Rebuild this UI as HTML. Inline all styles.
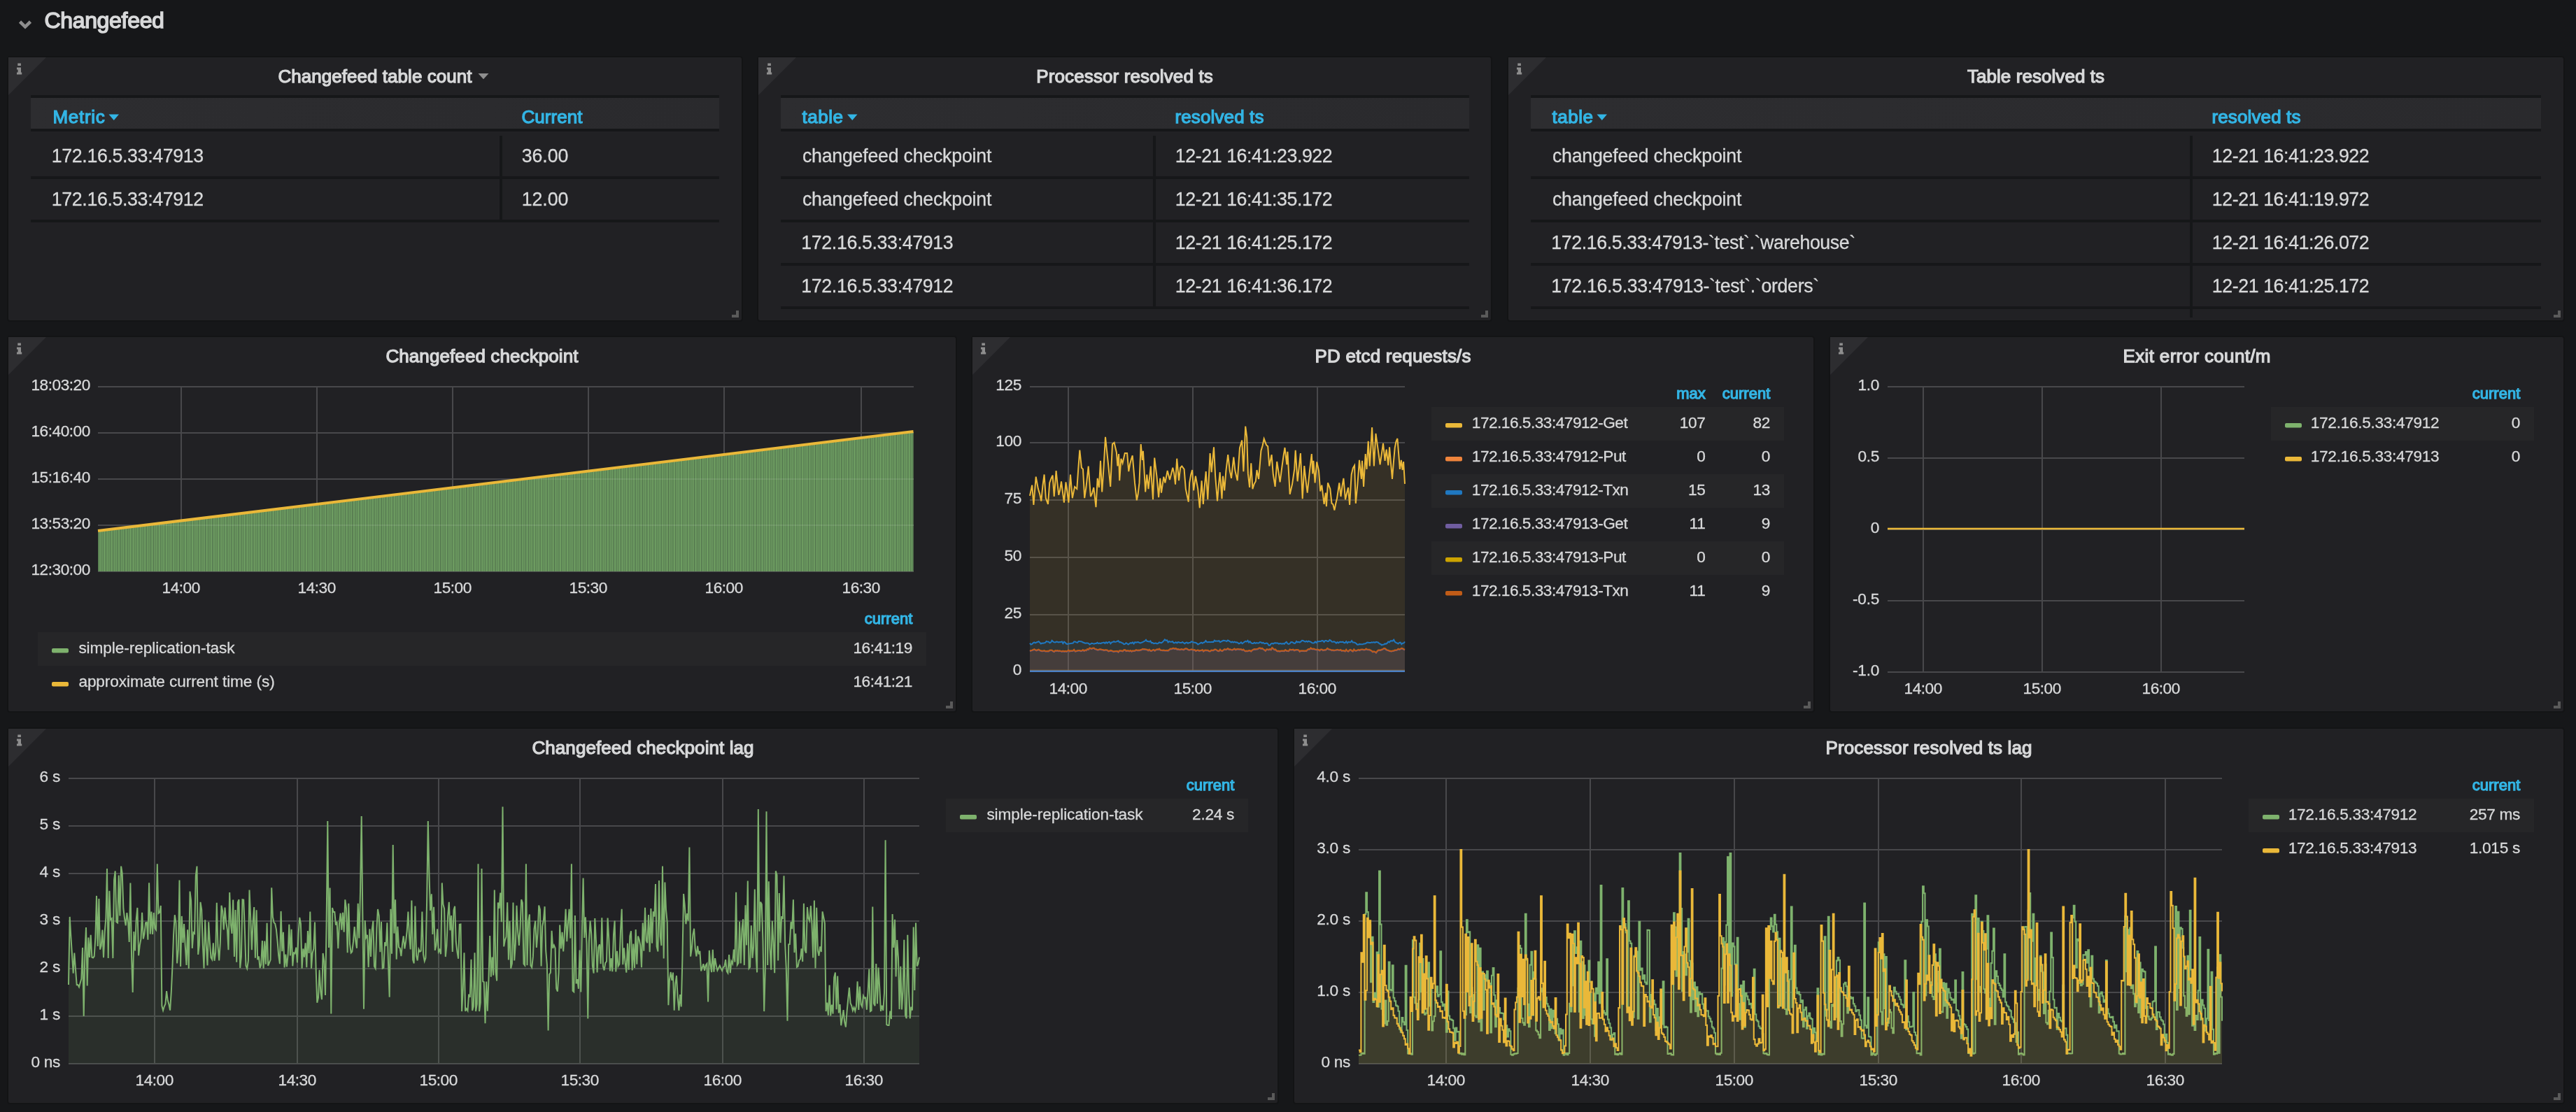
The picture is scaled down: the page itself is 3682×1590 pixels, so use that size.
<!DOCTYPE html>
<html><head><meta charset="utf-8"><title>Changefeed</title>
<style>
html,body{margin:0;padding:0;background:#161719;}
body{width:3682px;height:1590px;overflow:hidden;position:relative;font-family:"Liberation Sans",sans-serif;}
svg{position:absolute;left:0;top:0;}
#tx{position:absolute;left:0;top:0;width:3682px;height:1590px;will-change:transform;}
.t{position:absolute;white-space:pre;line-height:1;-webkit-text-stroke:0.3px currentColor;}
.m{-webkit-text-stroke:1.25px currentColor;}
.m2{-webkit-text-stroke:1.5px currentColor;}
</style></head><body>
<svg width="3682" height="1590" viewBox="0 0 3682 1590">
<defs>
<pattern id="bars" x="140" y="0" width="2.47" height="10" patternUnits="userSpaceOnUse"><rect width="2.47" height="10" fill="#4b6948"/><rect x="0.85" width="0.9" height="10" fill="#6a9860"/><rect x="1.75" width="0.72" height="10" fill="#7eb56c"/></pattern>
<linearGradient id="hg" x1="0" x2="1" y1="0" y2="0"><stop offset="0" stop-color="#2d2d30"/><stop offset="1" stop-color="#2a2a2d"/></linearGradient>
</defs>
<polyline points="28.5,31 36,38.3 43.5,31" fill="none" stroke="#8e8e8e" stroke-width="4.6"/>
<rect x="11" y="81" width="1050" height="378" rx="3.5" fill="#212124" stroke="#131415" stroke-width="2"/>
<path d="M12,82 L66,82 L12,136 Z" fill="#2d2d30"/>
<path d="M25.3,90.5 h4.6 v3.6 h-4.6z M24,96.5 h6 v7 h1.2 v3 h-7.2 v-3 h1.6 v-4 h-1.6z" fill="#8e8e8e"/>
<path d="M1052,444 h4 v10 h-10 v-4 h6z" fill="#5a5a5a"/>
<path d="M683.5,105 h15 l-7.5,8.3z" fill="#8e8e8e"/>
<rect x="1083" y="81" width="1049" height="378" rx="3.5" fill="#212124" stroke="#131415" stroke-width="2"/>
<path d="M1084,82 L1138,82 L1084,136 Z" fill="#2d2d30"/>
<path d="M1097.3,90.5 h4.6 v3.6 h-4.6z M1096,96.5 h6 v7 h1.2 v3 h-7.2 v-3 h1.6 v-4 h-1.6z" fill="#8e8e8e"/>
<path d="M2123,444 h4 v10 h-10 v-4 h6z" fill="#5a5a5a"/>
<rect x="2155" y="81" width="1510" height="378" rx="3.5" fill="#212124" stroke="#131415" stroke-width="2"/>
<path d="M2156,82 L2210,82 L2156,136 Z" fill="#2d2d30"/>
<path d="M2169.3,90.5 h4.6 v3.6 h-4.6z M2168,96.5 h6 v7 h1.2 v3 h-7.2 v-3 h1.6 v-4 h-1.6z" fill="#8e8e8e"/>
<path d="M3656,444 h4 v10 h-10 v-4 h6z" fill="#5a5a5a"/>
<rect x="11" y="481" width="1356" height="537" rx="3.5" fill="#212124" stroke="#131415" stroke-width="2"/>
<path d="M12,482 L66,482 L12,536 Z" fill="#2d2d30"/>
<path d="M25.3,490.5 h4.6 v3.6 h-4.6z M24,496.5 h6 v7 h1.2 v3 h-7.2 v-3 h1.6 v-4 h-1.6z" fill="#8e8e8e"/>
<path d="M1358,1003 h4 v10 h-10 v-4 h6z" fill="#5a5a5a"/>
<rect x="1389" y="481" width="1204" height="537" rx="3.5" fill="#212124" stroke="#131415" stroke-width="2"/>
<path d="M1390,482 L1444,482 L1390,536 Z" fill="#2d2d30"/>
<path d="M1403.3,490.5 h4.6 v3.6 h-4.6z M1402,496.5 h6 v7 h1.2 v3 h-7.2 v-3 h1.6 v-4 h-1.6z" fill="#8e8e8e"/>
<path d="M2584,1003 h4 v10 h-10 v-4 h6z" fill="#5a5a5a"/>
<rect x="2615" y="481" width="1050" height="537" rx="3.5" fill="#212124" stroke="#131415" stroke-width="2"/>
<path d="M2616,482 L2670,482 L2616,536 Z" fill="#2d2d30"/>
<path d="M2629.3,490.5 h4.6 v3.6 h-4.6z M2628,496.5 h6 v7 h1.2 v3 h-7.2 v-3 h1.6 v-4 h-1.6z" fill="#8e8e8e"/>
<path d="M3656,1003 h4 v10 h-10 v-4 h6z" fill="#5a5a5a"/>
<rect x="11" y="1041" width="1816" height="537" rx="3.5" fill="#212124" stroke="#131415" stroke-width="2"/>
<path d="M12,1042 L66,1042 L12,1096 Z" fill="#2d2d30"/>
<path d="M25.3,1050.5 h4.6 v3.6 h-4.6z M24,1056.5 h6 v7 h1.2 v3 h-7.2 v-3 h1.6 v-4 h-1.6z" fill="#8e8e8e"/>
<path d="M1818,1563 h4 v10 h-10 v-4 h6z" fill="#5a5a5a"/>
<rect x="1849" y="1041" width="1816" height="537" rx="3.5" fill="#212124" stroke="#131415" stroke-width="2"/>
<path d="M1850,1042 L1904,1042 L1850,1096 Z" fill="#2d2d30"/>
<path d="M1863.3,1050.5 h4.6 v3.6 h-4.6z M1862,1056.5 h6 v7 h1.2 v3 h-7.2 v-3 h1.6 v-4 h-1.6z" fill="#8e8e8e"/>
<path d="M3656,1563 h4 v10 h-10 v-4 h6z" fill="#5a5a5a"/>
<rect x="44" y="136" width="984" height="4" fill="#161719" />
<rect x="44" y="140" width="984" height="44" fill="url(#hg)"/>
<rect x="44" y="184" width="984" height="4" fill="#161719" />
<rect x="44" y="252" width="984" height="4" fill="#161719" />
<rect x="44" y="314" width="984" height="4" fill="#161719" />
<rect x="714" y="194" width="4" height="120" fill="#161719" />
<path d="M155.5,163.5 h14.5 l-7.25,8.5z" fill="#33b5e5"/>
<rect x="1116" y="136" width="984" height="4" fill="#161719" />
<rect x="1116" y="140" width="984" height="44" fill="url(#hg)"/>
<rect x="1116" y="184" width="984" height="4" fill="#161719" />
<rect x="1116" y="252" width="984" height="4" fill="#161719" />
<rect x="1116" y="314" width="984" height="4" fill="#161719" />
<rect x="1116" y="376" width="984" height="4" fill="#161719" />
<rect x="1116" y="438" width="984" height="4" fill="#161719" />
<rect x="1648" y="194" width="4" height="244" fill="#161719" />
<path d="M1211,163.5 h14.5 l-7.25,8.5z" fill="#33b5e5"/>
<rect x="2188" y="136" width="1444" height="4" fill="#161719" />
<rect x="2188" y="140" width="1444" height="44" fill="url(#hg)"/>
<rect x="2188" y="184" width="1444" height="4" fill="#161719" />
<rect x="2188" y="252" width="1444" height="4" fill="#161719" />
<rect x="2188" y="314" width="1444" height="4" fill="#161719" />
<rect x="2188" y="376" width="1444" height="4" fill="#161719" />
<rect x="2188" y="438" width="1444" height="4" fill="#161719" />
<rect x="3130" y="194" width="4" height="260" fill="#161719" />
<path d="M2282.5,163.5 h14.5 l-7.25,8.5z" fill="#33b5e5"/>
<rect x="140" y="552" width="1166" height="2" fill="#48484b" />
<rect x="140" y="618" width="1166" height="2" fill="#48484b" />
<rect x="140" y="684" width="1166" height="2" fill="#48484b" />
<rect x="140" y="750" width="1166" height="2" fill="#48484b" />
<rect x="140" y="816" width="1166" height="2" fill="#48484b" />
<rect x="258" y="552" width="2" height="266" fill="#48484b" />
<rect x="452" y="552" width="2" height="266" fill="#48484b" />
<rect x="646" y="552" width="2" height="266" fill="#48484b" />
<rect x="840" y="552" width="2" height="266" fill="#48484b" />
<rect x="1034" y="552" width="2" height="266" fill="#48484b" />
<rect x="1230" y="552" width="2" height="266" fill="#48484b" />
<polygon points="140,817 140,760.5 1305.5,618.5 1305.5,817" fill="url(#bars)"/>
<clipPath id="c4"><polygon points="140,817 140,760.5 1305.5,618.5 1305.5,817"/></clipPath>
<rect x="140" y="618" width="1166" height="2" fill="#fff" fill-opacity="0.09" clip-path="url(#c4)"/>
<rect x="140" y="684" width="1166" height="2" fill="#fff" fill-opacity="0.09" clip-path="url(#c4)"/>
<rect x="140" y="750" width="1166" height="2" fill="#fff" fill-opacity="0.09" clip-path="url(#c4)"/>
<polyline points="140,759 1305.5,617" fill="none" stroke="#eab839" stroke-width="4"/>
<rect x="54" y="904" width="1270" height="48" fill="#262628" />
<rect x="74" y="927" width="24" height="6.6" rx="2" fill="#7eb26d"/>
<rect x="74" y="975" width="24" height="6.6" rx="2" fill="#eab839"/>
<rect x="1472" y="552" width="536" height="2" fill="#48484b" />
<rect x="1472" y="632" width="536" height="2" fill="#48484b" />
<rect x="1472" y="714" width="536" height="2" fill="#48484b" />
<rect x="1472" y="796" width="536" height="2" fill="#48484b" />
<rect x="1472" y="878" width="536" height="2" fill="#48484b" />
<rect x="1472" y="959" width="536" height="2" fill="#48484b" />
<rect x="1526" y="552" width="2" height="409" fill="#48484b" />
<rect x="1704" y="552" width="2" height="409" fill="#48484b" />
<rect x="1882" y="552" width="2" height="409" fill="#48484b" />
<polygon points="1472.0,960.0 1472.0,708.9 1475.2,693.7 1477.4,722.0 1480.7,681.7 1483.9,699.1 1486.1,706.1 1488.3,716.5 1490.4,694.6 1492.6,678.5 1494.8,712.2 1498.0,720.9 1500.2,690.4 1502.4,684.5 1504.6,679.6 1506.7,710.0 1509.6,673.0 1511.4,691.4 1513.3,707.8 1515.1,700.5 1517.0,688.3 1518.9,703.7 1520.9,718.7 1523.5,689.3 1525.4,702.8 1527.4,718.7 1530.0,678.5 1532.8,712.2 1536.1,695.9 1539.3,699.1 1541.3,669.7 1543.3,643.7 1545.9,668.7 1548.0,670.9 1550.2,712.2 1552.4,697.0 1555.7,666.5 1558.9,710.0 1561.1,705.1 1563.3,697.0 1566.5,725.2 1568.7,683.9 1570.9,697.0 1573.0,658.9 1575.2,703.5 1577.6,667.7 1580.0,624.8 1582.0,644.1 1583.9,662.2 1587.2,695.9 1590.0,635.0 1592.6,632.8 1595.9,647.0 1597.4,666.5 1599.1,649.1 1600.2,687.2 1602.4,655.7 1604.6,662.2 1607.8,648.0 1611.1,648.0 1613.3,674.1 1615.1,663.8 1616.9,656.8 1618.7,651.3 1622.0,690.4 1624.8,715.4 1626.6,706.5 1628.5,690.4 1630.7,635.0 1632.8,657.8 1633.9,644.8 1637.2,703.5 1639.3,678.5 1641.5,699.1 1644.8,666.5 1648.0,714.3 1650.2,654.6 1653.5,681.7 1656.1,711.1 1658.3,683.9 1660.0,704.6 1663.3,681.7 1665.4,690.4 1668.7,673.0 1672.0,686.1 1674.1,677.8 1676.3,668.7 1678.2,676.8 1680.0,692.6 1682.2,655.7 1685.0,687.2 1687.2,668.7 1689.3,666.5 1692.6,670.9 1694.8,699.1 1696.7,708.2 1698.7,717.6 1700.2,690.4 1702.2,678.6 1704.1,672.0 1706.1,701.3 1708.9,680.7 1712.2,699.1 1714.8,726.3 1717.6,687.2 1719.8,720.9 1721.7,696.1 1723.7,674.1 1726.3,714.3 1729.6,648.0 1731.7,675.2 1735.0,639.3 1737.2,681.7 1740.0,716.5 1741.8,694.8 1743.7,675.2 1746.5,713.3 1748.0,680.7 1750.2,701.3 1752.4,673.0 1755.2,650.2 1757.8,673.0 1760.0,683.9 1763.3,653.5 1765.4,673.0 1768.7,687.2 1772.0,640.4 1775.2,629.6 1777.4,674.1 1780.2,609.6 1782.2,625.2 1783.9,677.4 1786.1,697.0 1788.3,662.2 1790.4,699.1 1792.6,692.1 1794.8,688.3 1796.5,672.0 1799.1,685.0 1802.4,644.8 1804.6,637.3 1806.7,627.4 1810.0,636.1 1812.2,638.3 1814.3,666.5 1817.6,650.2 1819.8,678.5 1822.6,695.9 1825.2,660.0 1827.4,674.5 1829.6,689.3 1832.8,664.3 1834.7,650.9 1836.5,640.0 1839.3,664.3 1840.4,645.9 1843.7,706.7 1847.0,692.6 1850.2,670.9 1851.7,643.7 1854.6,688.3 1856.7,669.1 1858.9,648.0 1861.7,713.3 1864.3,666.1 1866.5,687.2 1868.7,704.6 1872.0,673.0 1874.8,649.1 1876.3,677.4 1877.4,658.9 1879.6,690.4 1882.2,660.4 1885.0,673.0 1887.2,702.4 1889.3,693.7 1892.6,720.9 1894.8,704.6 1895.9,724.1 1898.0,690.4 1901.3,699.1 1903.5,719.8 1905.4,721.1 1907.4,729.6 1909.2,720.3 1911.1,712.2 1914.3,690.4 1916.5,710.0 1918.5,694.8 1920.4,683.9 1923.0,714.3 1925.0,705.3 1927.0,697.0 1929.1,722.0 1931.7,678.5 1933.9,669.1 1936.1,665.4 1937.8,719.8 1940.4,692.6 1943.0,657.8 1945.9,685.0 1947.0,658.9 1949.1,695.9 1951.7,649.1 1953.5,670.9 1955.7,630.7 1957.8,666.5 1961.1,611.1 1963.9,666.5 1966.5,619.8 1969.8,643.7 1972.6,664.3 1974.8,649.2 1977.0,633.9 1979.6,658.9 1981.7,642.6 1984.3,665.4 1986.1,639.3 1988.0,662.1 1990.0,685.0 1991.8,662.0 1993.7,640.4 1995.5,631.4 1997.4,627.0 1999.1,648.0 2000.9,670.9 2002.8,657.8 2004.6,672.0 2006.1,660.0 2008.0,691.9 2008.0,960.0" fill="#eab839" fill-opacity="0.1"/>
<polyline points="1472.0,708.9 1475.2,693.7 1477.4,722.0 1480.7,681.7 1483.9,699.1 1486.1,706.1 1488.3,716.5 1490.4,694.6 1492.6,678.5 1494.8,712.2 1498.0,720.9 1500.2,690.4 1502.4,684.5 1504.6,679.6 1506.7,710.0 1509.6,673.0 1511.4,691.4 1513.3,707.8 1515.1,700.5 1517.0,688.3 1518.9,703.7 1520.9,718.7 1523.5,689.3 1525.4,702.8 1527.4,718.7 1530.0,678.5 1532.8,712.2 1536.1,695.9 1539.3,699.1 1541.3,669.7 1543.3,643.7 1545.9,668.7 1548.0,670.9 1550.2,712.2 1552.4,697.0 1555.7,666.5 1558.9,710.0 1561.1,705.1 1563.3,697.0 1566.5,725.2 1568.7,683.9 1570.9,697.0 1573.0,658.9 1575.2,703.5 1577.6,667.7 1580.0,624.8 1582.0,644.1 1583.9,662.2 1587.2,695.9 1590.0,635.0 1592.6,632.8 1595.9,647.0 1597.4,666.5 1599.1,649.1 1600.2,687.2 1602.4,655.7 1604.6,662.2 1607.8,648.0 1611.1,648.0 1613.3,674.1 1615.1,663.8 1616.9,656.8 1618.7,651.3 1622.0,690.4 1624.8,715.4 1626.6,706.5 1628.5,690.4 1630.7,635.0 1632.8,657.8 1633.9,644.8 1637.2,703.5 1639.3,678.5 1641.5,699.1 1644.8,666.5 1648.0,714.3 1650.2,654.6 1653.5,681.7 1656.1,711.1 1658.3,683.9 1660.0,704.6 1663.3,681.7 1665.4,690.4 1668.7,673.0 1672.0,686.1 1674.1,677.8 1676.3,668.7 1678.2,676.8 1680.0,692.6 1682.2,655.7 1685.0,687.2 1687.2,668.7 1689.3,666.5 1692.6,670.9 1694.8,699.1 1696.7,708.2 1698.7,717.6 1700.2,690.4 1702.2,678.6 1704.1,672.0 1706.1,701.3 1708.9,680.7 1712.2,699.1 1714.8,726.3 1717.6,687.2 1719.8,720.9 1721.7,696.1 1723.7,674.1 1726.3,714.3 1729.6,648.0 1731.7,675.2 1735.0,639.3 1737.2,681.7 1740.0,716.5 1741.8,694.8 1743.7,675.2 1746.5,713.3 1748.0,680.7 1750.2,701.3 1752.4,673.0 1755.2,650.2 1757.8,673.0 1760.0,683.9 1763.3,653.5 1765.4,673.0 1768.7,687.2 1772.0,640.4 1775.2,629.6 1777.4,674.1 1780.2,609.6 1782.2,625.2 1783.9,677.4 1786.1,697.0 1788.3,662.2 1790.4,699.1 1792.6,692.1 1794.8,688.3 1796.5,672.0 1799.1,685.0 1802.4,644.8 1804.6,637.3 1806.7,627.4 1810.0,636.1 1812.2,638.3 1814.3,666.5 1817.6,650.2 1819.8,678.5 1822.6,695.9 1825.2,660.0 1827.4,674.5 1829.6,689.3 1832.8,664.3 1834.7,650.9 1836.5,640.0 1839.3,664.3 1840.4,645.9 1843.7,706.7 1847.0,692.6 1850.2,670.9 1851.7,643.7 1854.6,688.3 1856.7,669.1 1858.9,648.0 1861.7,713.3 1864.3,666.1 1866.5,687.2 1868.7,704.6 1872.0,673.0 1874.8,649.1 1876.3,677.4 1877.4,658.9 1879.6,690.4 1882.2,660.4 1885.0,673.0 1887.2,702.4 1889.3,693.7 1892.6,720.9 1894.8,704.6 1895.9,724.1 1898.0,690.4 1901.3,699.1 1903.5,719.8 1905.4,721.1 1907.4,729.6 1909.2,720.3 1911.1,712.2 1914.3,690.4 1916.5,710.0 1918.5,694.8 1920.4,683.9 1923.0,714.3 1925.0,705.3 1927.0,697.0 1929.1,722.0 1931.7,678.5 1933.9,669.1 1936.1,665.4 1937.8,719.8 1940.4,692.6 1943.0,657.8 1945.9,685.0 1947.0,658.9 1949.1,695.9 1951.7,649.1 1953.5,670.9 1955.7,630.7 1957.8,666.5 1961.1,611.1 1963.9,666.5 1966.5,619.8 1969.8,643.7 1972.6,664.3 1974.8,649.2 1977.0,633.9 1979.6,658.9 1981.7,642.6 1984.3,665.4 1986.1,639.3 1988.0,662.1 1990.0,685.0 1991.8,662.0 1993.7,640.4 1995.5,631.4 1997.4,627.0 1999.1,648.0 2000.9,670.9 2002.8,657.8 2004.6,672.0 2006.1,660.0 2008.0,691.9" fill="none" stroke="#eab839" stroke-width="2.0" stroke-linejoin="miter"/>
<polyline points="1472.0,960.0 2008.0,960.0" fill="none" stroke="#ef843c" stroke-width="2.0" stroke-linejoin="miter"/>
<polygon points="1472.0,960.0 1472.0,919.6 1473.6,921.6 1475.2,920.9 1476.7,919.3 1478.3,918.4 1479.9,919.4 1481.5,918.5 1483.1,917.8 1484.6,917.2 1486.2,918.6 1487.8,920.4 1489.4,919.6 1491.0,919.7 1492.6,919.2 1494.1,918.9 1495.7,916.9 1497.3,917.6 1498.9,917.8 1500.5,919.3 1502.0,918.4 1503.6,915.8 1505.2,917.4 1506.8,918.3 1508.4,918.4 1509.9,917.5 1511.5,917.8 1513.1,918.5 1514.7,918.0 1516.3,918.1 1517.9,917.3 1519.4,920.1 1521.0,917.6 1522.6,918.8 1524.2,920.5 1525.8,920.9 1527.3,920.4 1528.9,920.3 1530.5,920.1 1532.1,919.7 1533.7,919.6 1535.2,917.5 1536.8,917.6 1538.4,918.4 1540.0,918.8 1541.6,917.0 1543.2,917.1 1544.7,917.2 1546.3,917.4 1547.9,918.5 1549.5,919.0 1551.1,919.8 1552.6,919.5 1554.2,919.4 1555.8,919.9 1557.4,921.5 1559.0,920.7 1560.5,919.8 1562.1,920.1 1563.7,920.6 1565.3,920.1 1566.9,920.0 1568.4,918.8 1570.0,920.1 1571.6,919.6 1573.2,920.2 1574.8,919.3 1576.4,919.0 1577.9,918.6 1579.5,919.8 1581.1,918.1 1582.7,919.7 1584.3,918.1 1585.8,917.8 1587.4,920.3 1589.0,918.4 1590.6,918.0 1592.2,917.2 1593.7,918.0 1595.3,917.6 1596.9,917.0 1598.5,916.3 1600.1,918.3 1601.7,918.0 1603.2,919.1 1604.8,919.5 1606.4,921.1 1608.0,920.9 1609.6,919.2 1611.1,920.2 1612.7,921.5 1614.3,920.3 1615.9,919.2 1617.5,919.6 1619.0,918.4 1620.6,920.5 1622.2,918.2 1623.8,918.8 1625.4,918.2 1626.9,918.0 1628.5,919.0 1630.1,919.4 1631.7,918.7 1633.3,918.2 1634.9,917.1 1636.4,916.7 1638.0,914.9 1639.6,917.1 1641.2,917.1 1642.8,917.7 1644.3,916.5 1645.9,919.1 1647.5,919.0 1649.1,920.1 1650.7,919.8 1652.2,919.5 1653.8,920.4 1655.4,919.9 1657.0,918.4 1658.6,918.9 1660.2,919.1 1661.7,918.1 1663.3,916.3 1664.9,914.5 1666.5,915.8 1668.1,915.4 1669.6,918.4 1671.2,916.9 1672.8,917.8 1674.4,917.8 1676.0,917.2 1677.5,919.2 1679.1,919.3 1680.7,918.3 1682.3,919.4 1683.9,918.1 1685.5,918.5 1687.0,919.1 1688.6,919.1 1690.2,917.9 1691.8,919.2 1693.4,920.2 1694.9,918.9 1696.5,918.6 1698.1,919.9 1699.7,919.0 1701.3,918.9 1702.8,917.4 1704.4,917.7 1706.0,918.6 1707.6,918.8 1709.2,919.0 1710.7,919.8 1712.3,921.5 1713.9,920.5 1715.5,919.7 1717.1,918.7 1718.7,919.8 1720.2,918.7 1721.8,918.3 1723.4,916.1 1725.0,918.0 1726.6,918.3 1728.1,917.9 1729.7,918.3 1731.3,917.9 1732.9,917.8 1734.5,917.9 1736.0,915.7 1737.6,916.8 1739.2,916.4 1740.8,916.7 1742.4,916.2 1744.0,918.2 1745.5,917.3 1747.1,916.5 1748.7,915.8 1750.3,916.0 1751.9,916.4 1753.4,917.0 1755.0,915.5 1756.6,916.3 1758.2,917.3 1759.8,918.5 1761.3,917.5 1762.9,918.6 1764.5,917.7 1766.1,918.4 1767.7,918.2 1769.3,919.0 1770.8,920.3 1772.4,919.6 1774.0,918.4 1775.6,920.1 1777.2,919.0 1778.7,917.8 1780.3,916.9 1781.9,917.6 1783.5,915.9 1785.1,918.6 1786.6,917.2 1788.2,919.1 1789.8,919.9 1791.4,919.9 1793.0,918.8 1794.5,919.8 1796.1,919.1 1797.7,919.4 1799.3,919.5 1800.9,918.1 1802.5,918.5 1804.0,919.5 1805.6,918.8 1807.2,920.2 1808.8,919.9 1810.4,919.6 1811.9,920.0 1813.5,922.7 1815.1,922.7 1816.7,920.5 1818.3,919.8 1819.8,920.6 1821.4,919.4 1823.0,919.3 1824.6,919.4 1826.2,919.5 1827.8,920.7 1829.3,920.0 1830.9,920.2 1832.5,920.7 1834.1,920.1 1835.7,920.7 1837.2,919.0 1838.8,917.9 1840.4,920.2 1842.0,921.0 1843.6,920.3 1845.1,918.2 1846.7,918.0 1848.3,918.9 1849.9,919.9 1851.5,919.6 1853.1,917.1 1854.6,918.3 1856.2,917.8 1857.8,918.5 1859.4,917.4 1861.0,915.8 1862.5,916.0 1864.1,916.8 1865.7,917.7 1867.3,916.7 1868.9,917.7 1870.4,916.6 1872.0,917.3 1873.6,917.9 1875.2,919.1 1876.8,919.5 1878.3,919.3 1879.9,917.5 1881.5,919.0 1883.1,917.1 1884.7,917.3 1886.3,917.1 1887.8,917.0 1889.4,916.0 1891.0,916.3 1892.6,917.9 1894.2,915.9 1895.7,915.9 1897.3,916.9 1898.9,916.9 1900.5,915.0 1902.1,915.8 1903.6,917.6 1905.2,917.8 1906.8,917.3 1908.4,918.1 1910.0,919.7 1911.6,918.1 1913.1,919.2 1914.7,917.9 1916.3,917.8 1917.9,918.1 1919.5,917.7 1921.0,919.0 1922.6,919.1 1924.2,917.2 1925.8,919.5 1927.4,917.8 1928.9,918.2 1930.5,918.3 1932.1,916.2 1933.7,918.5 1935.3,918.6 1936.8,919.0 1938.4,920.0 1940.0,921.7 1941.6,921.7 1943.2,920.9 1944.8,921.2 1946.3,921.3 1947.9,921.3 1949.5,920.4 1951.1,920.4 1952.7,919.6 1954.2,918.6 1955.8,918.8 1957.4,919.0 1959.0,919.1 1960.6,918.4 1962.1,918.8 1963.7,918.1 1965.3,918.8 1966.9,917.9 1968.5,918.3 1970.1,918.7 1971.6,920.4 1973.2,920.7 1974.8,922.3 1976.4,921.7 1978.0,921.5 1979.5,920.4 1981.1,920.7 1982.7,919.7 1984.3,917.5 1985.9,918.4 1987.4,916.4 1989.0,916.3 1990.6,916.4 1992.2,914.7 1993.8,917.7 1995.4,918.8 1996.9,919.5 1998.5,920.5 2000.1,918.9 2001.7,918.6 2003.3,921.2 2004.8,919.6 2006.4,919.5 2008.0,917.5 2008.0,960.0" fill="#1f78c1" fill-opacity="0.1"/>
<polyline points="1472.0,919.6 1473.6,921.6 1475.2,920.9 1476.7,919.3 1478.3,918.4 1479.9,919.4 1481.5,918.5 1483.1,917.8 1484.6,917.2 1486.2,918.6 1487.8,920.4 1489.4,919.6 1491.0,919.7 1492.6,919.2 1494.1,918.9 1495.7,916.9 1497.3,917.6 1498.9,917.8 1500.5,919.3 1502.0,918.4 1503.6,915.8 1505.2,917.4 1506.8,918.3 1508.4,918.4 1509.9,917.5 1511.5,917.8 1513.1,918.5 1514.7,918.0 1516.3,918.1 1517.9,917.3 1519.4,920.1 1521.0,917.6 1522.6,918.8 1524.2,920.5 1525.8,920.9 1527.3,920.4 1528.9,920.3 1530.5,920.1 1532.1,919.7 1533.7,919.6 1535.2,917.5 1536.8,917.6 1538.4,918.4 1540.0,918.8 1541.6,917.0 1543.2,917.1 1544.7,917.2 1546.3,917.4 1547.9,918.5 1549.5,919.0 1551.1,919.8 1552.6,919.5 1554.2,919.4 1555.8,919.9 1557.4,921.5 1559.0,920.7 1560.5,919.8 1562.1,920.1 1563.7,920.6 1565.3,920.1 1566.9,920.0 1568.4,918.8 1570.0,920.1 1571.6,919.6 1573.2,920.2 1574.8,919.3 1576.4,919.0 1577.9,918.6 1579.5,919.8 1581.1,918.1 1582.7,919.7 1584.3,918.1 1585.8,917.8 1587.4,920.3 1589.0,918.4 1590.6,918.0 1592.2,917.2 1593.7,918.0 1595.3,917.6 1596.9,917.0 1598.5,916.3 1600.1,918.3 1601.7,918.0 1603.2,919.1 1604.8,919.5 1606.4,921.1 1608.0,920.9 1609.6,919.2 1611.1,920.2 1612.7,921.5 1614.3,920.3 1615.9,919.2 1617.5,919.6 1619.0,918.4 1620.6,920.5 1622.2,918.2 1623.8,918.8 1625.4,918.2 1626.9,918.0 1628.5,919.0 1630.1,919.4 1631.7,918.7 1633.3,918.2 1634.9,917.1 1636.4,916.7 1638.0,914.9 1639.6,917.1 1641.2,917.1 1642.8,917.7 1644.3,916.5 1645.9,919.1 1647.5,919.0 1649.1,920.1 1650.7,919.8 1652.2,919.5 1653.8,920.4 1655.4,919.9 1657.0,918.4 1658.6,918.9 1660.2,919.1 1661.7,918.1 1663.3,916.3 1664.9,914.5 1666.5,915.8 1668.1,915.4 1669.6,918.4 1671.2,916.9 1672.8,917.8 1674.4,917.8 1676.0,917.2 1677.5,919.2 1679.1,919.3 1680.7,918.3 1682.3,919.4 1683.9,918.1 1685.5,918.5 1687.0,919.1 1688.6,919.1 1690.2,917.9 1691.8,919.2 1693.4,920.2 1694.9,918.9 1696.5,918.6 1698.1,919.9 1699.7,919.0 1701.3,918.9 1702.8,917.4 1704.4,917.7 1706.0,918.6 1707.6,918.8 1709.2,919.0 1710.7,919.8 1712.3,921.5 1713.9,920.5 1715.5,919.7 1717.1,918.7 1718.7,919.8 1720.2,918.7 1721.8,918.3 1723.4,916.1 1725.0,918.0 1726.6,918.3 1728.1,917.9 1729.7,918.3 1731.3,917.9 1732.9,917.8 1734.5,917.9 1736.0,915.7 1737.6,916.8 1739.2,916.4 1740.8,916.7 1742.4,916.2 1744.0,918.2 1745.5,917.3 1747.1,916.5 1748.7,915.8 1750.3,916.0 1751.9,916.4 1753.4,917.0 1755.0,915.5 1756.6,916.3 1758.2,917.3 1759.8,918.5 1761.3,917.5 1762.9,918.6 1764.5,917.7 1766.1,918.4 1767.7,918.2 1769.3,919.0 1770.8,920.3 1772.4,919.6 1774.0,918.4 1775.6,920.1 1777.2,919.0 1778.7,917.8 1780.3,916.9 1781.9,917.6 1783.5,915.9 1785.1,918.6 1786.6,917.2 1788.2,919.1 1789.8,919.9 1791.4,919.9 1793.0,918.8 1794.5,919.8 1796.1,919.1 1797.7,919.4 1799.3,919.5 1800.9,918.1 1802.5,918.5 1804.0,919.5 1805.6,918.8 1807.2,920.2 1808.8,919.9 1810.4,919.6 1811.9,920.0 1813.5,922.7 1815.1,922.7 1816.7,920.5 1818.3,919.8 1819.8,920.6 1821.4,919.4 1823.0,919.3 1824.6,919.4 1826.2,919.5 1827.8,920.7 1829.3,920.0 1830.9,920.2 1832.5,920.7 1834.1,920.1 1835.7,920.7 1837.2,919.0 1838.8,917.9 1840.4,920.2 1842.0,921.0 1843.6,920.3 1845.1,918.2 1846.7,918.0 1848.3,918.9 1849.9,919.9 1851.5,919.6 1853.1,917.1 1854.6,918.3 1856.2,917.8 1857.8,918.5 1859.4,917.4 1861.0,915.8 1862.5,916.0 1864.1,916.8 1865.7,917.7 1867.3,916.7 1868.9,917.7 1870.4,916.6 1872.0,917.3 1873.6,917.9 1875.2,919.1 1876.8,919.5 1878.3,919.3 1879.9,917.5 1881.5,919.0 1883.1,917.1 1884.7,917.3 1886.3,917.1 1887.8,917.0 1889.4,916.0 1891.0,916.3 1892.6,917.9 1894.2,915.9 1895.7,915.9 1897.3,916.9 1898.9,916.9 1900.5,915.0 1902.1,915.8 1903.6,917.6 1905.2,917.8 1906.8,917.3 1908.4,918.1 1910.0,919.7 1911.6,918.1 1913.1,919.2 1914.7,917.9 1916.3,917.8 1917.9,918.1 1919.5,917.7 1921.0,919.0 1922.6,919.1 1924.2,917.2 1925.8,919.5 1927.4,917.8 1928.9,918.2 1930.5,918.3 1932.1,916.2 1933.7,918.5 1935.3,918.6 1936.8,919.0 1938.4,920.0 1940.0,921.7 1941.6,921.7 1943.2,920.9 1944.8,921.2 1946.3,921.3 1947.9,921.3 1949.5,920.4 1951.1,920.4 1952.7,919.6 1954.2,918.6 1955.8,918.8 1957.4,919.0 1959.0,919.1 1960.6,918.4 1962.1,918.8 1963.7,918.1 1965.3,918.8 1966.9,917.9 1968.5,918.3 1970.1,918.7 1971.6,920.4 1973.2,920.7 1974.8,922.3 1976.4,921.7 1978.0,921.5 1979.5,920.4 1981.1,920.7 1982.7,919.7 1984.3,917.5 1985.9,918.4 1987.4,916.4 1989.0,916.3 1990.6,916.4 1992.2,914.7 1993.8,917.7 1995.4,918.8 1996.9,919.5 1998.5,920.5 2000.1,918.9 2001.7,918.6 2003.3,921.2 2004.8,919.6 2006.4,919.5 2008.0,917.5" fill="none" stroke="#1f78c1" stroke-width="2.0" stroke-linejoin="miter"/>
<polygon points="1472.0,960.0 1472.0,931.1 1473.6,930.5 1475.2,930.0 1476.7,929.5 1478.3,928.6 1479.9,929.7 1481.5,930.5 1483.1,929.7 1484.6,929.1 1486.2,930.0 1487.8,930.8 1489.4,931.2 1491.0,931.1 1492.6,930.5 1494.1,931.4 1495.7,931.4 1497.3,931.2 1498.9,931.4 1500.5,930.2 1502.0,929.9 1503.6,930.3 1505.2,931.4 1506.8,932.1 1508.4,930.6 1509.9,930.9 1511.5,930.5 1513.1,931.2 1514.7,930.9 1516.3,931.3 1517.9,931.8 1519.4,931.0 1521.0,931.8 1522.6,931.2 1524.2,931.8 1525.8,931.1 1527.3,930.1 1528.9,931.5 1530.5,930.8 1532.1,931.0 1533.7,930.8 1535.2,929.3 1536.8,931.6 1538.4,931.2 1540.0,930.7 1541.6,930.4 1543.2,930.4 1544.7,931.1 1546.3,930.8 1547.9,929.5 1549.5,931.0 1551.1,929.9 1552.6,930.4 1554.2,928.4 1555.8,929.1 1557.4,926.9 1559.0,927.5 1560.5,928.0 1562.1,926.9 1563.7,927.0 1565.3,928.4 1566.9,928.6 1568.4,929.4 1570.0,929.4 1571.6,928.8 1573.2,928.8 1574.8,929.2 1576.4,929.4 1577.9,930.2 1579.5,929.7 1581.1,929.8 1582.7,930.0 1584.3,931.4 1585.8,931.1 1587.4,930.4 1589.0,930.7 1590.6,931.6 1592.2,931.9 1593.7,931.4 1595.3,931.4 1596.9,931.2 1598.5,932.6 1600.1,930.8 1601.7,930.8 1603.2,931.1 1604.8,931.5 1606.4,929.8 1608.0,929.6 1609.6,931.1 1611.1,930.8 1612.7,930.6 1614.3,931.3 1615.9,930.4 1617.5,931.8 1619.0,930.9 1620.6,931.1 1622.2,930.7 1623.8,929.6 1625.4,930.2 1626.9,930.0 1628.5,930.3 1630.1,929.7 1631.7,929.3 1633.3,928.3 1634.9,928.7 1636.4,928.5 1638.0,929.1 1639.6,929.2 1641.2,930.4 1642.8,929.2 1644.3,930.8 1645.9,931.0 1647.5,929.8 1649.1,929.4 1650.7,930.7 1652.2,929.4 1653.8,928.8 1655.4,929.1 1657.0,928.1 1658.6,929.8 1660.2,930.1 1661.7,930.2 1663.3,930.1 1664.9,930.4 1666.5,930.5 1668.1,930.2 1669.6,930.6 1671.2,929.4 1672.8,928.0 1674.4,928.3 1676.0,927.5 1677.5,927.2 1679.1,928.1 1680.7,927.4 1682.3,928.8 1683.9,928.5 1685.5,928.9 1687.0,929.2 1688.6,928.4 1690.2,928.9 1691.8,929.3 1693.4,928.2 1694.9,927.6 1696.5,927.9 1698.1,929.1 1699.7,929.8 1701.3,929.4 1702.8,928.8 1704.4,929.3 1706.0,929.7 1707.6,929.6 1709.2,931.1 1710.7,930.4 1712.3,929.8 1713.9,930.9 1715.5,930.6 1717.1,930.4 1718.7,929.6 1720.2,931.5 1721.8,930.3 1723.4,930.0 1725.0,930.2 1726.6,930.3 1728.1,931.3 1729.7,931.5 1731.3,930.0 1732.9,930.3 1734.5,930.3 1736.0,928.9 1737.6,929.0 1739.2,930.0 1740.8,931.1 1742.4,931.2 1744.0,929.0 1745.5,930.6 1747.1,931.1 1748.7,929.7 1750.3,928.6 1751.9,929.2 1753.4,928.8 1755.0,927.5 1756.6,929.0 1758.2,928.7 1759.8,929.3 1761.3,929.7 1762.9,928.9 1764.5,927.9 1766.1,929.3 1767.7,928.8 1769.3,928.3 1770.8,928.8 1772.4,928.7 1774.0,928.8 1775.6,929.9 1777.2,929.0 1778.7,930.5 1780.3,931.4 1781.9,931.1 1783.5,931.3 1785.1,930.6 1786.6,930.6 1788.2,931.6 1789.8,930.0 1791.4,929.1 1793.0,928.6 1794.5,928.7 1796.1,928.6 1797.7,928.2 1799.3,927.2 1800.9,926.8 1802.5,927.8 1804.0,927.3 1805.6,928.5 1807.2,929.5 1808.8,930.9 1810.4,928.8 1811.9,928.8 1813.5,929.3 1815.1,928.4 1816.7,929.4 1818.3,926.5 1819.8,927.8 1821.4,929.2 1823.0,928.9 1824.6,930.6 1826.2,931.4 1827.8,931.0 1829.3,931.6 1830.9,931.0 1832.5,931.1 1834.1,931.0 1835.7,931.2 1837.2,929.6 1838.8,930.7 1840.4,931.1 1842.0,931.3 1843.6,929.0 1845.1,929.5 1846.7,929.4 1848.3,929.0 1849.9,930.3 1851.5,929.7 1853.1,929.5 1854.6,929.5 1856.2,929.9 1857.8,931.9 1859.4,930.8 1861.0,930.9 1862.5,930.7 1864.1,931.3 1865.7,930.7 1867.3,931.2 1868.9,929.4 1870.4,928.5 1872.0,928.6 1873.6,926.9 1875.2,928.3 1876.8,928.0 1878.3,928.3 1879.9,928.9 1881.5,929.3 1883.1,929.1 1884.7,929.5 1886.3,930.5 1887.8,929.1 1889.4,929.0 1891.0,930.1 1892.6,929.7 1894.2,929.8 1895.7,929.1 1897.3,927.3 1898.9,928.6 1900.5,929.0 1902.1,929.4 1903.6,930.2 1905.2,929.9 1906.8,930.4 1908.4,929.9 1910.0,929.8 1911.6,929.3 1913.1,929.7 1914.7,929.9 1916.3,929.4 1917.9,930.8 1919.5,930.4 1921.0,930.7 1922.6,931.5 1924.2,929.1 1925.8,931.1 1927.4,931.6 1928.9,929.9 1930.5,929.4 1932.1,930.7 1933.7,931.6 1935.3,929.0 1936.8,930.6 1938.4,930.8 1940.0,930.2 1941.6,929.4 1943.2,930.1 1944.8,929.3 1946.3,929.1 1947.9,929.0 1949.5,929.6 1951.1,929.4 1952.7,928.1 1954.2,929.1 1955.8,929.2 1957.4,929.3 1959.0,930.1 1960.6,931.0 1962.1,932.4 1963.7,931.8 1965.3,932.3 1966.9,933.6 1968.5,931.4 1970.1,929.9 1971.6,929.8 1973.2,929.9 1974.8,929.3 1976.4,928.7 1978.0,927.5 1979.5,927.6 1981.1,928.9 1982.7,929.9 1984.3,930.2 1985.9,931.0 1987.4,931.2 1989.0,931.5 1990.6,930.9 1992.2,930.7 1993.8,930.0 1995.4,930.0 1996.9,929.7 1998.5,928.2 2000.1,929.0 2001.7,928.4 2003.3,927.4 2004.8,927.6 2006.4,928.7 2008.0,929.2 2008.0,960.0" fill="#705da0" fill-opacity="0.1"/>
<polyline points="1472.0,931.1 1473.6,930.5 1475.2,930.0 1476.7,929.5 1478.3,928.6 1479.9,929.7 1481.5,930.5 1483.1,929.7 1484.6,929.1 1486.2,930.0 1487.8,930.8 1489.4,931.2 1491.0,931.1 1492.6,930.5 1494.1,931.4 1495.7,931.4 1497.3,931.2 1498.9,931.4 1500.5,930.2 1502.0,929.9 1503.6,930.3 1505.2,931.4 1506.8,932.1 1508.4,930.6 1509.9,930.9 1511.5,930.5 1513.1,931.2 1514.7,930.9 1516.3,931.3 1517.9,931.8 1519.4,931.0 1521.0,931.8 1522.6,931.2 1524.2,931.8 1525.8,931.1 1527.3,930.1 1528.9,931.5 1530.5,930.8 1532.1,931.0 1533.7,930.8 1535.2,929.3 1536.8,931.6 1538.4,931.2 1540.0,930.7 1541.6,930.4 1543.2,930.4 1544.7,931.1 1546.3,930.8 1547.9,929.5 1549.5,931.0 1551.1,929.9 1552.6,930.4 1554.2,928.4 1555.8,929.1 1557.4,926.9 1559.0,927.5 1560.5,928.0 1562.1,926.9 1563.7,927.0 1565.3,928.4 1566.9,928.6 1568.4,929.4 1570.0,929.4 1571.6,928.8 1573.2,928.8 1574.8,929.2 1576.4,929.4 1577.9,930.2 1579.5,929.7 1581.1,929.8 1582.7,930.0 1584.3,931.4 1585.8,931.1 1587.4,930.4 1589.0,930.7 1590.6,931.6 1592.2,931.9 1593.7,931.4 1595.3,931.4 1596.9,931.2 1598.5,932.6 1600.1,930.8 1601.7,930.8 1603.2,931.1 1604.8,931.5 1606.4,929.8 1608.0,929.6 1609.6,931.1 1611.1,930.8 1612.7,930.6 1614.3,931.3 1615.9,930.4 1617.5,931.8 1619.0,930.9 1620.6,931.1 1622.2,930.7 1623.8,929.6 1625.4,930.2 1626.9,930.0 1628.5,930.3 1630.1,929.7 1631.7,929.3 1633.3,928.3 1634.9,928.7 1636.4,928.5 1638.0,929.1 1639.6,929.2 1641.2,930.4 1642.8,929.2 1644.3,930.8 1645.9,931.0 1647.5,929.8 1649.1,929.4 1650.7,930.7 1652.2,929.4 1653.8,928.8 1655.4,929.1 1657.0,928.1 1658.6,929.8 1660.2,930.1 1661.7,930.2 1663.3,930.1 1664.9,930.4 1666.5,930.5 1668.1,930.2 1669.6,930.6 1671.2,929.4 1672.8,928.0 1674.4,928.3 1676.0,927.5 1677.5,927.2 1679.1,928.1 1680.7,927.4 1682.3,928.8 1683.9,928.5 1685.5,928.9 1687.0,929.2 1688.6,928.4 1690.2,928.9 1691.8,929.3 1693.4,928.2 1694.9,927.6 1696.5,927.9 1698.1,929.1 1699.7,929.8 1701.3,929.4 1702.8,928.8 1704.4,929.3 1706.0,929.7 1707.6,929.6 1709.2,931.1 1710.7,930.4 1712.3,929.8 1713.9,930.9 1715.5,930.6 1717.1,930.4 1718.7,929.6 1720.2,931.5 1721.8,930.3 1723.4,930.0 1725.0,930.2 1726.6,930.3 1728.1,931.3 1729.7,931.5 1731.3,930.0 1732.9,930.3 1734.5,930.3 1736.0,928.9 1737.6,929.0 1739.2,930.0 1740.8,931.1 1742.4,931.2 1744.0,929.0 1745.5,930.6 1747.1,931.1 1748.7,929.7 1750.3,928.6 1751.9,929.2 1753.4,928.8 1755.0,927.5 1756.6,929.0 1758.2,928.7 1759.8,929.3 1761.3,929.7 1762.9,928.9 1764.5,927.9 1766.1,929.3 1767.7,928.8 1769.3,928.3 1770.8,928.8 1772.4,928.7 1774.0,928.8 1775.6,929.9 1777.2,929.0 1778.7,930.5 1780.3,931.4 1781.9,931.1 1783.5,931.3 1785.1,930.6 1786.6,930.6 1788.2,931.6 1789.8,930.0 1791.4,929.1 1793.0,928.6 1794.5,928.7 1796.1,928.6 1797.7,928.2 1799.3,927.2 1800.9,926.8 1802.5,927.8 1804.0,927.3 1805.6,928.5 1807.2,929.5 1808.8,930.9 1810.4,928.8 1811.9,928.8 1813.5,929.3 1815.1,928.4 1816.7,929.4 1818.3,926.5 1819.8,927.8 1821.4,929.2 1823.0,928.9 1824.6,930.6 1826.2,931.4 1827.8,931.0 1829.3,931.6 1830.9,931.0 1832.5,931.1 1834.1,931.0 1835.7,931.2 1837.2,929.6 1838.8,930.7 1840.4,931.1 1842.0,931.3 1843.6,929.0 1845.1,929.5 1846.7,929.4 1848.3,929.0 1849.9,930.3 1851.5,929.7 1853.1,929.5 1854.6,929.5 1856.2,929.9 1857.8,931.9 1859.4,930.8 1861.0,930.9 1862.5,930.7 1864.1,931.3 1865.7,930.7 1867.3,931.2 1868.9,929.4 1870.4,928.5 1872.0,928.6 1873.6,926.9 1875.2,928.3 1876.8,928.0 1878.3,928.3 1879.9,928.9 1881.5,929.3 1883.1,929.1 1884.7,929.5 1886.3,930.5 1887.8,929.1 1889.4,929.0 1891.0,930.1 1892.6,929.7 1894.2,929.8 1895.7,929.1 1897.3,927.3 1898.9,928.6 1900.5,929.0 1902.1,929.4 1903.6,930.2 1905.2,929.9 1906.8,930.4 1908.4,929.9 1910.0,929.8 1911.6,929.3 1913.1,929.7 1914.7,929.9 1916.3,929.4 1917.9,930.8 1919.5,930.4 1921.0,930.7 1922.6,931.5 1924.2,929.1 1925.8,931.1 1927.4,931.6 1928.9,929.9 1930.5,929.4 1932.1,930.7 1933.7,931.6 1935.3,929.0 1936.8,930.6 1938.4,930.8 1940.0,930.2 1941.6,929.4 1943.2,930.1 1944.8,929.3 1946.3,929.1 1947.9,929.0 1949.5,929.6 1951.1,929.4 1952.7,928.1 1954.2,929.1 1955.8,929.2 1957.4,929.3 1959.0,930.1 1960.6,931.0 1962.1,932.4 1963.7,931.8 1965.3,932.3 1966.9,933.6 1968.5,931.4 1970.1,929.9 1971.6,929.8 1973.2,929.9 1974.8,929.3 1976.4,928.7 1978.0,927.5 1979.5,927.6 1981.1,928.9 1982.7,929.9 1984.3,930.2 1985.9,931.0 1987.4,931.2 1989.0,931.5 1990.6,930.9 1992.2,930.7 1993.8,930.0 1995.4,930.0 1996.9,929.7 1998.5,928.2 2000.1,929.0 2001.7,928.4 2003.3,927.4 2004.8,927.6 2006.4,928.7 2008.0,929.2" fill="none" stroke="#705da0" stroke-width="2.0" stroke-linejoin="miter"/>
<polyline points="1472.0,960.0 2008.0,960.0" fill="none" stroke="#cca300" stroke-width="2.0" stroke-linejoin="miter"/>
<polygon points="1472.0,960.0 1472.0,930.6 1473.6,930.0 1475.2,929.6 1476.7,929.0 1478.3,928.1 1479.9,929.2 1481.5,930.0 1483.1,929.2 1484.6,928.6 1486.2,929.6 1487.8,930.3 1489.4,930.7 1491.0,930.6 1492.6,930.0 1494.1,930.9 1495.7,930.9 1497.3,930.7 1498.9,930.9 1500.5,929.7 1502.0,929.4 1503.6,929.8 1505.2,930.9 1506.8,931.6 1508.4,930.1 1509.9,930.4 1511.5,930.0 1513.1,930.7 1514.7,930.4 1516.3,930.9 1517.9,931.4 1519.4,930.6 1521.0,931.3 1522.6,930.7 1524.2,931.3 1525.8,930.6 1527.3,929.6 1528.9,931.0 1530.5,930.3 1532.1,930.5 1533.7,930.3 1535.2,928.8 1536.8,931.1 1538.4,930.7 1540.0,930.2 1541.6,930.0 1543.2,930.0 1544.7,930.6 1546.3,930.4 1547.9,929.0 1549.5,930.5 1551.1,929.4 1552.6,929.9 1554.2,927.9 1555.8,928.6 1557.4,926.4 1559.0,927.0 1560.5,927.5 1562.1,926.4 1563.7,926.5 1565.3,927.9 1566.9,928.1 1568.4,928.9 1570.0,928.9 1571.6,928.3 1573.2,928.3 1574.8,928.7 1576.4,928.9 1577.9,929.7 1579.5,929.2 1581.1,929.3 1582.7,929.5 1584.3,930.9 1585.8,930.6 1587.4,929.9 1589.0,930.3 1590.6,931.1 1592.2,931.4 1593.7,930.9 1595.3,931.0 1596.9,930.7 1598.5,932.1 1600.1,930.3 1601.7,930.3 1603.2,930.6 1604.8,931.0 1606.4,929.3 1608.0,929.1 1609.6,930.6 1611.1,930.3 1612.7,930.2 1614.3,930.8 1615.9,929.9 1617.5,931.3 1619.0,930.4 1620.6,930.6 1622.2,930.2 1623.8,929.1 1625.4,929.7 1626.9,929.6 1628.5,929.8 1630.1,929.2 1631.7,928.8 1633.3,927.8 1634.9,928.2 1636.4,928.0 1638.0,928.6 1639.6,928.7 1641.2,929.9 1642.8,928.7 1644.3,930.3 1645.9,930.5 1647.5,929.3 1649.1,928.9 1650.7,930.2 1652.2,929.0 1653.8,928.3 1655.4,928.6 1657.0,927.6 1658.6,929.3 1660.2,929.7 1661.7,929.7 1663.3,929.6 1664.9,929.9 1666.5,930.0 1668.1,929.7 1669.6,930.1 1671.2,928.9 1672.8,927.5 1674.4,927.8 1676.0,927.0 1677.5,926.7 1679.1,927.6 1680.7,926.9 1682.3,928.3 1683.9,928.0 1685.5,928.4 1687.0,928.7 1688.6,928.0 1690.2,928.4 1691.8,928.8 1693.4,927.7 1694.9,927.2 1696.5,927.4 1698.1,928.6 1699.7,929.3 1701.3,928.9 1702.8,928.3 1704.4,928.8 1706.0,929.2 1707.6,929.1 1709.2,930.6 1710.7,929.9 1712.3,929.4 1713.9,930.5 1715.5,930.1 1717.1,929.9 1718.7,929.1 1720.2,931.0 1721.8,929.8 1723.4,929.5 1725.0,929.7 1726.6,929.8 1728.1,930.9 1729.7,931.1 1731.3,929.5 1732.9,929.8 1734.5,929.8 1736.0,928.4 1737.6,928.5 1739.2,929.5 1740.8,930.6 1742.4,930.7 1744.0,928.5 1745.5,930.1 1747.1,930.6 1748.7,929.2 1750.3,928.1 1751.9,928.7 1753.4,928.3 1755.0,927.0 1756.6,928.5 1758.2,928.2 1759.8,928.9 1761.3,929.2 1762.9,928.4 1764.5,927.4 1766.1,928.8 1767.7,928.3 1769.3,927.8 1770.8,928.3 1772.4,928.2 1774.0,928.3 1775.6,929.4 1777.2,928.5 1778.7,930.0 1780.3,930.9 1781.9,930.6 1783.5,930.8 1785.1,930.1 1786.6,930.1 1788.2,931.2 1789.8,929.5 1791.4,928.6 1793.0,928.1 1794.5,928.2 1796.1,928.1 1797.7,927.8 1799.3,926.7 1800.9,926.3 1802.5,927.3 1804.0,926.8 1805.6,928.0 1807.2,929.0 1808.8,930.4 1810.4,928.3 1811.9,928.4 1813.5,928.8 1815.1,927.9 1816.7,928.9 1818.3,926.0 1819.8,927.3 1821.4,928.7 1823.0,928.4 1824.6,930.1 1826.2,930.9 1827.8,930.5 1829.3,931.1 1830.9,930.5 1832.5,930.6 1834.1,930.5 1835.7,930.7 1837.2,929.1 1838.8,930.2 1840.4,930.6 1842.0,930.8 1843.6,928.5 1845.1,929.0 1846.7,928.9 1848.3,928.5 1849.9,929.8 1851.5,929.2 1853.1,929.0 1854.6,929.0 1856.2,929.4 1857.8,931.4 1859.4,930.3 1861.0,930.5 1862.5,930.2 1864.1,930.8 1865.7,930.2 1867.3,930.7 1868.9,928.9 1870.4,928.1 1872.0,928.1 1873.6,926.4 1875.2,927.9 1876.8,927.5 1878.3,927.8 1879.9,928.4 1881.5,928.8 1883.1,928.6 1884.7,929.0 1886.3,930.0 1887.8,928.6 1889.4,928.5 1891.0,929.6 1892.6,929.2 1894.2,929.3 1895.7,928.6 1897.3,926.8 1898.9,928.1 1900.5,928.5 1902.1,928.9 1903.6,929.7 1905.2,929.4 1906.8,929.9 1908.4,929.4 1910.0,929.3 1911.6,928.8 1913.1,929.2 1914.7,929.4 1916.3,928.9 1917.9,930.4 1919.5,930.0 1921.0,930.2 1922.6,931.1 1924.2,928.6 1925.8,930.6 1927.4,931.1 1928.9,929.4 1930.5,928.9 1932.1,930.2 1933.7,931.1 1935.3,928.5 1936.8,930.1 1938.4,930.3 1940.0,929.7 1941.6,928.9 1943.2,929.6 1944.8,928.8 1946.3,928.6 1947.9,928.5 1949.5,929.1 1951.1,928.9 1952.7,927.6 1954.2,928.6 1955.8,928.7 1957.4,928.8 1959.0,929.6 1960.6,930.5 1962.1,932.0 1963.7,931.3 1965.3,931.8 1966.9,933.1 1968.5,930.9 1970.1,929.4 1971.6,929.4 1973.2,929.4 1974.8,928.8 1976.4,928.2 1978.0,927.0 1979.5,927.1 1981.1,928.4 1982.7,929.4 1984.3,929.7 1985.9,930.5 1987.4,930.8 1989.0,931.1 1990.6,930.4 1992.2,930.2 1993.8,929.5 1995.4,929.5 1996.9,929.2 1998.5,927.7 2000.1,928.5 2001.7,927.9 2003.3,926.9 2004.8,927.1 2006.4,928.2 2008.0,928.7 2008.0,960.0" fill="#c15c17" fill-opacity="0.1"/>
<polyline points="1472.0,930.6 1473.6,930.0 1475.2,929.6 1476.7,929.0 1478.3,928.1 1479.9,929.2 1481.5,930.0 1483.1,929.2 1484.6,928.6 1486.2,929.6 1487.8,930.3 1489.4,930.7 1491.0,930.6 1492.6,930.0 1494.1,930.9 1495.7,930.9 1497.3,930.7 1498.9,930.9 1500.5,929.7 1502.0,929.4 1503.6,929.8 1505.2,930.9 1506.8,931.6 1508.4,930.1 1509.9,930.4 1511.5,930.0 1513.1,930.7 1514.7,930.4 1516.3,930.9 1517.9,931.4 1519.4,930.6 1521.0,931.3 1522.6,930.7 1524.2,931.3 1525.8,930.6 1527.3,929.6 1528.9,931.0 1530.5,930.3 1532.1,930.5 1533.7,930.3 1535.2,928.8 1536.8,931.1 1538.4,930.7 1540.0,930.2 1541.6,930.0 1543.2,930.0 1544.7,930.6 1546.3,930.4 1547.9,929.0 1549.5,930.5 1551.1,929.4 1552.6,929.9 1554.2,927.9 1555.8,928.6 1557.4,926.4 1559.0,927.0 1560.5,927.5 1562.1,926.4 1563.7,926.5 1565.3,927.9 1566.9,928.1 1568.4,928.9 1570.0,928.9 1571.6,928.3 1573.2,928.3 1574.8,928.7 1576.4,928.9 1577.9,929.7 1579.5,929.2 1581.1,929.3 1582.7,929.5 1584.3,930.9 1585.8,930.6 1587.4,929.9 1589.0,930.3 1590.6,931.1 1592.2,931.4 1593.7,930.9 1595.3,931.0 1596.9,930.7 1598.5,932.1 1600.1,930.3 1601.7,930.3 1603.2,930.6 1604.8,931.0 1606.4,929.3 1608.0,929.1 1609.6,930.6 1611.1,930.3 1612.7,930.2 1614.3,930.8 1615.9,929.9 1617.5,931.3 1619.0,930.4 1620.6,930.6 1622.2,930.2 1623.8,929.1 1625.4,929.7 1626.9,929.6 1628.5,929.8 1630.1,929.2 1631.7,928.8 1633.3,927.8 1634.9,928.2 1636.4,928.0 1638.0,928.6 1639.6,928.7 1641.2,929.9 1642.8,928.7 1644.3,930.3 1645.9,930.5 1647.5,929.3 1649.1,928.9 1650.7,930.2 1652.2,929.0 1653.8,928.3 1655.4,928.6 1657.0,927.6 1658.6,929.3 1660.2,929.7 1661.7,929.7 1663.3,929.6 1664.9,929.9 1666.5,930.0 1668.1,929.7 1669.6,930.1 1671.2,928.9 1672.8,927.5 1674.4,927.8 1676.0,927.0 1677.5,926.7 1679.1,927.6 1680.7,926.9 1682.3,928.3 1683.9,928.0 1685.5,928.4 1687.0,928.7 1688.6,928.0 1690.2,928.4 1691.8,928.8 1693.4,927.7 1694.9,927.2 1696.5,927.4 1698.1,928.6 1699.7,929.3 1701.3,928.9 1702.8,928.3 1704.4,928.8 1706.0,929.2 1707.6,929.1 1709.2,930.6 1710.7,929.9 1712.3,929.4 1713.9,930.5 1715.5,930.1 1717.1,929.9 1718.7,929.1 1720.2,931.0 1721.8,929.8 1723.4,929.5 1725.0,929.7 1726.6,929.8 1728.1,930.9 1729.7,931.1 1731.3,929.5 1732.9,929.8 1734.5,929.8 1736.0,928.4 1737.6,928.5 1739.2,929.5 1740.8,930.6 1742.4,930.7 1744.0,928.5 1745.5,930.1 1747.1,930.6 1748.7,929.2 1750.3,928.1 1751.9,928.7 1753.4,928.3 1755.0,927.0 1756.6,928.5 1758.2,928.2 1759.8,928.9 1761.3,929.2 1762.9,928.4 1764.5,927.4 1766.1,928.8 1767.7,928.3 1769.3,927.8 1770.8,928.3 1772.4,928.2 1774.0,928.3 1775.6,929.4 1777.2,928.5 1778.7,930.0 1780.3,930.9 1781.9,930.6 1783.5,930.8 1785.1,930.1 1786.6,930.1 1788.2,931.2 1789.8,929.5 1791.4,928.6 1793.0,928.1 1794.5,928.2 1796.1,928.1 1797.7,927.8 1799.3,926.7 1800.9,926.3 1802.5,927.3 1804.0,926.8 1805.6,928.0 1807.2,929.0 1808.8,930.4 1810.4,928.3 1811.9,928.4 1813.5,928.8 1815.1,927.9 1816.7,928.9 1818.3,926.0 1819.8,927.3 1821.4,928.7 1823.0,928.4 1824.6,930.1 1826.2,930.9 1827.8,930.5 1829.3,931.1 1830.9,930.5 1832.5,930.6 1834.1,930.5 1835.7,930.7 1837.2,929.1 1838.8,930.2 1840.4,930.6 1842.0,930.8 1843.6,928.5 1845.1,929.0 1846.7,928.9 1848.3,928.5 1849.9,929.8 1851.5,929.2 1853.1,929.0 1854.6,929.0 1856.2,929.4 1857.8,931.4 1859.4,930.3 1861.0,930.5 1862.5,930.2 1864.1,930.8 1865.7,930.2 1867.3,930.7 1868.9,928.9 1870.4,928.1 1872.0,928.1 1873.6,926.4 1875.2,927.9 1876.8,927.5 1878.3,927.8 1879.9,928.4 1881.5,928.8 1883.1,928.6 1884.7,929.0 1886.3,930.0 1887.8,928.6 1889.4,928.5 1891.0,929.6 1892.6,929.2 1894.2,929.3 1895.7,928.6 1897.3,926.8 1898.9,928.1 1900.5,928.5 1902.1,928.9 1903.6,929.7 1905.2,929.4 1906.8,929.9 1908.4,929.4 1910.0,929.3 1911.6,928.8 1913.1,929.2 1914.7,929.4 1916.3,928.9 1917.9,930.4 1919.5,930.0 1921.0,930.2 1922.6,931.1 1924.2,928.6 1925.8,930.6 1927.4,931.1 1928.9,929.4 1930.5,928.9 1932.1,930.2 1933.7,931.1 1935.3,928.5 1936.8,930.1 1938.4,930.3 1940.0,929.7 1941.6,928.9 1943.2,929.6 1944.8,928.8 1946.3,928.6 1947.9,928.5 1949.5,929.1 1951.1,928.9 1952.7,927.6 1954.2,928.6 1955.8,928.7 1957.4,928.8 1959.0,929.6 1960.6,930.5 1962.1,932.0 1963.7,931.3 1965.3,931.8 1966.9,933.1 1968.5,930.9 1970.1,929.4 1971.6,929.4 1973.2,929.4 1974.8,928.8 1976.4,928.2 1978.0,927.0 1979.5,927.1 1981.1,928.4 1982.7,929.4 1984.3,929.7 1985.9,930.5 1987.4,930.8 1989.0,931.1 1990.6,930.4 1992.2,930.2 1993.8,929.5 1995.4,929.5 1996.9,929.2 1998.5,927.7 2000.1,928.5 2001.7,927.9 2003.3,926.9 2004.8,927.1 2006.4,928.2 2008.0,928.7" fill="none" stroke="#c15c17" stroke-width="2.0" stroke-linejoin="miter"/>
<rect x="1472" y="957.8" width="536" height="0.8000000000000682" fill="#b5782a" />
<rect x="1472" y="958.5" width="536" height="2.5" fill="#4a80c4" />
<rect x="2046" y="582" width="504" height="48" fill="#262628" />
<rect x="2066" y="605" width="24" height="6.6" rx="2" fill="#eab839"/>
<rect x="2066" y="653" width="24" height="6.6" rx="2" fill="#ef843c"/>
<rect x="2046" y="678" width="504" height="48" fill="#262628" />
<rect x="2066" y="701" width="24" height="6.6" rx="2" fill="#1f78c1"/>
<rect x="2066" y="749" width="24" height="6.6" rx="2" fill="#705da0"/>
<rect x="2046" y="774" width="504" height="48" fill="#262628" />
<rect x="2066" y="797" width="24" height="6.6" rx="2" fill="#cca300"/>
<rect x="2066" y="845" width="24" height="6.6" rx="2" fill="#c15c17"/>
<rect x="2698" y="552" width="510" height="2" fill="#48484b" />
<rect x="2698" y="654" width="510" height="2" fill="#48484b" />
<rect x="2698" y="756" width="510" height="2" fill="#48484b" />
<rect x="2698" y="858" width="510" height="2" fill="#48484b" />
<rect x="2698" y="960" width="510" height="2" fill="#48484b" />
<rect x="2748" y="552" width="2" height="410" fill="#48484b" />
<rect x="2918" y="552" width="2" height="410" fill="#48484b" />
<rect x="3088" y="552" width="2" height="410" fill="#48484b" />
<rect x="2698" y="754.7" width="510" height="2.599999999999909" fill="#eab839" />
<rect x="3246" y="582" width="376" height="48" fill="#262628" />
<rect x="3266" y="605" width="24" height="6.6" rx="2" fill="#7eb26d"/>
<rect x="3266" y="653" width="24" height="6.6" rx="2" fill="#eab839"/>
<rect x="98" y="1112" width="1216" height="2" fill="#48484b" />
<rect x="98" y="1180" width="1216" height="2" fill="#48484b" />
<rect x="98" y="1248" width="1216" height="2" fill="#48484b" />
<rect x="98" y="1316" width="1216" height="2" fill="#48484b" />
<rect x="98" y="1384" width="1216" height="2" fill="#48484b" />
<rect x="98" y="1452" width="1216" height="2" fill="#48484b" />
<rect x="98" y="1520" width="1216" height="2" fill="#48484b" />
<rect x="220" y="1112" width="2" height="410" fill="#48484b" />
<rect x="424" y="1112" width="2" height="410" fill="#48484b" />
<rect x="626" y="1112" width="2" height="410" fill="#48484b" />
<rect x="828" y="1112" width="2" height="410" fill="#48484b" />
<rect x="1032" y="1112" width="2" height="410" fill="#48484b" />
<rect x="1234" y="1112" width="2" height="410" fill="#48484b" />
<polygon points="98.0,1521.0 98.0,1408.0 99.7,1310.9 101.3,1338.2 103.0,1364.8 104.7,1391.8 106.3,1362.5 108.0,1385.8 109.7,1408.2 111.3,1408.0 113.0,1411.3 114.7,1405.2 116.3,1399.7 118.0,1355.1 119.7,1453.0 121.4,1361.4 123.0,1326.0 124.7,1409.4 126.4,1340.5 128.0,1368.9 129.7,1336.7 131.4,1368.9 133.0,1369.5 134.7,1367.5 136.4,1340.4 138.0,1280.9 139.7,1352.9 141.4,1284.9 143.0,1357.7 144.7,1352.4 146.4,1329.5 148.0,1369.1 149.7,1332.6 151.4,1312.4 153.0,1242.0 154.7,1369.9 156.4,1273.8 158.0,1314.7 159.7,1313.3 161.4,1370.1 163.1,1257.8 164.7,1245.4 166.4,1318.3 168.1,1319.5 169.7,1251.5 171.4,1309.5 173.1,1238.6 174.7,1248.8 176.4,1299.2 178.1,1313.5 179.7,1323.3 181.4,1305.2 183.1,1317.7 184.7,1346.9 186.4,1262.4 188.1,1368.7 189.7,1418.9 191.4,1332.1 193.1,1359.5 194.7,1314.9 196.4,1297.9 198.1,1366.3 199.8,1351.3 201.4,1343.0 203.1,1304.9 204.8,1342.4 206.4,1335.6 208.1,1319.4 209.8,1319.0 211.4,1343.7 213.1,1262.2 214.8,1335.6 216.4,1303.6 218.1,1336.0 219.8,1305.1 221.4,1327.2 223.1,1329.7 224.8,1235.2 226.4,1306.1 228.1,1304.8 229.8,1294.9 231.4,1438.3 233.1,1444.7 234.8,1439.0 236.4,1435.4 238.1,1417.2 239.8,1430.4 241.5,1436.2 243.1,1444.6 244.8,1418.0 246.5,1380.8 248.1,1336.4 249.8,1308.2 251.5,1319.5 253.1,1377.5 254.8,1358.2 256.5,1258.5 258.1,1381.9 259.8,1309.9 261.5,1347.9 263.1,1321.1 264.8,1353.5 266.5,1380.0 268.1,1329.4 269.8,1384.9 271.5,1274.6 273.1,1287.6 274.8,1356.0 276.5,1333.3 278.1,1334.8 279.8,1252.2 281.5,1238.6 283.2,1364.9 284.8,1351.8 286.5,1289.8 288.2,1300.7 289.8,1349.7 291.5,1384.8 293.2,1315.3 294.8,1351.9 296.5,1380.4 298.2,1318.2 299.8,1346.8 301.5,1369.3 303.2,1372.2 304.8,1348.4 306.5,1373.8 308.2,1361.6 309.8,1290.7 311.5,1353.1 313.2,1373.4 314.8,1348.4 316.5,1294.7 318.2,1302.6 319.8,1329.4 321.5,1297.5 323.2,1318.6 324.9,1329.0 326.5,1358.2 328.2,1276.0 329.9,1322.0 331.5,1334.9 333.2,1286.6 334.9,1368.1 336.5,1301.0 338.2,1375.8 339.9,1290.1 341.5,1286.2 343.2,1384.1 344.9,1367.8 346.5,1286.2 348.2,1286.5 349.9,1330.2 351.5,1380.7 353.2,1384.9 354.9,1373.7 356.5,1272.6 358.2,1311.7 359.9,1358.2 361.6,1317.9 363.2,1297.0 364.9,1369.8 366.6,1301.3 368.2,1372.2 369.9,1367.4 371.6,1384.2 373.2,1379.4 374.9,1345.0 376.6,1384.6 378.2,1345.6 379.9,1378.8 381.6,1319.7 383.2,1381.0 384.9,1376.6 386.6,1372.2 388.2,1269.2 389.9,1311.2 391.6,1319.1 393.2,1320.7 394.9,1328.8 396.6,1345.9 398.2,1366.2 399.9,1378.2 401.6,1302.9 403.3,1360.1 404.9,1332.9 406.6,1383.5 408.3,1364.6 409.9,1382.3 411.6,1365.2 413.3,1321.8 414.9,1366.4 416.6,1328.7 418.3,1381.3 419.9,1362.4 421.6,1363.4 423.3,1354.6 424.9,1376.5 426.6,1334.6 428.3,1311.8 429.9,1320.8 431.6,1384.6 433.3,1356.5 434.9,1368.7 436.6,1348.3 438.3,1383.2 439.9,1331.0 441.6,1362.9 443.3,1303.5 445.0,1384.7 446.6,1362.8 448.3,1356.7 450.0,1318.5 451.6,1384.5 453.3,1433.7 455.0,1426.3 456.6,1386.9 458.3,1418.0 460.0,1429.2 461.6,1362.9 463.3,1374.1 465.0,1423.0 466.6,1322.0 468.3,1173.9 470.0,1354.9 471.6,1269.4 473.3,1449.5 475.0,1298.1 476.6,1303.9 478.3,1304.0 480.0,1322.6 481.6,1317.9 483.3,1356.2 485.0,1320.4 486.7,1305.7 488.3,1329.6 490.0,1304.8 491.7,1332.7 493.3,1286.4 495.0,1298.9 496.7,1362.2 498.3,1291.7 500.0,1349.6 501.7,1362.5 503.3,1360.7 505.0,1346.2 506.7,1325.0 508.3,1345.7 510.0,1355.8 511.7,1291.7 513.3,1341.5 515.0,1275.2 516.7,1167.1 518.3,1303.3 520.0,1442.7 521.7,1316.1 523.3,1340.5 525.0,1336.9 526.7,1382.9 528.4,1328.4 530.0,1367.9 531.7,1329.7 533.4,1316.7 535.0,1381.8 536.7,1384.8 538.4,1327.6 540.0,1300.0 541.7,1309.4 543.4,1361.3 545.0,1318.1 546.7,1384.7 548.4,1383.9 550.0,1347.4 551.7,1352.8 553.4,1319.3 555.0,1376.2 556.7,1425.7 558.4,1299.8 560.0,1363.8 561.7,1208.0 563.4,1334.6 565.1,1286.2 566.7,1371.7 568.4,1324.7 570.1,1354.6 571.7,1355.8 573.4,1367.1 575.1,1349.7 576.7,1338.3 578.4,1356.5 580.1,1345.7 581.7,1331.3 583.4,1303.5 585.1,1339.8 586.7,1357.4 588.4,1287.5 590.1,1372.3 591.7,1377.4 593.4,1295.4 595.1,1366.5 596.7,1373.4 598.4,1357.1 600.1,1360.7 601.7,1359.7 603.4,1303.6 605.1,1364.8 606.8,1374.3 608.4,1369.8 610.1,1289.3 611.8,1173.9 613.4,1248.8 615.1,1302.0 616.8,1278.2 618.4,1336.0 620.1,1296.7 621.8,1358.9 623.4,1351.9 625.1,1328.4 626.8,1361.0 628.4,1358.1 630.1,1364.2 631.8,1262.4 633.4,1293.0 635.1,1299.5 636.8,1368.1 638.4,1352.1 640.1,1309.7 641.8,1289.9 643.4,1330.3 645.1,1309.1 646.8,1360.9 648.5,1301.4 650.1,1295.7 651.8,1346.7 653.5,1361.0 655.1,1370.8 656.8,1321.9 658.5,1321.5 660.1,1446.1 661.8,1413.5 663.5,1362.2 665.1,1445.8 666.8,1442.3 668.5,1445.2 670.1,1421.5 671.8,1426.0 673.5,1371.8 675.1,1444.9 676.8,1439.0 678.5,1362.3 680.1,1446.0 681.8,1435.4 683.5,1235.2 685.1,1446.1 686.8,1433.5 688.5,1242.0 690.2,1403.4 691.8,1404.2 693.5,1463.2 695.2,1403.5 696.8,1445.7 698.5,1399.0 700.2,1338.1 701.8,1396.8 703.5,1368.5 705.2,1394.6 706.8,1272.5 708.5,1389.4 710.2,1402.5 711.8,1290.4 713.5,1299.0 715.2,1276.6 716.8,1318.3 718.5,1153.5 720.2,1353.4 721.8,1344.5 723.5,1339.6 725.2,1290.2 726.9,1372.5 728.5,1316.9 730.2,1384.7 731.9,1377.6 733.5,1290.4 735.2,1373.5 736.9,1349.5 738.5,1294.8 740.2,1332.3 741.9,1352.0 743.5,1326.1 745.2,1286.2 746.9,1290.9 748.5,1378.2 750.2,1380.4 751.9,1235.2 753.5,1380.2 755.2,1317.5 756.9,1307.4 758.5,1380.4 760.2,1383.3 761.9,1367.9 763.5,1328.1 765.2,1316.7 766.9,1354.9 768.6,1334.3 770.2,1294.6 771.9,1300.4 773.6,1381.5 775.2,1324.6 776.9,1315.8 778.6,1296.2 780.2,1359.2 781.9,1379.6 783.6,1473.4 785.2,1393.4 786.9,1390.8 788.6,1330.9 790.2,1355.9 791.9,1351.4 793.6,1355.7 795.2,1413.4 796.9,1417.6 798.6,1390.6 800.2,1322.6 801.9,1356.4 803.6,1332.9 805.2,1360.4 806.9,1334.2 808.6,1299.8 810.3,1346.1 811.9,1320.4 813.6,1299.8 815.3,1341.6 816.9,1235.2 818.6,1416.8 820.3,1418.3 821.9,1308.9 823.6,1406.4 825.3,1400.2 826.9,1413.8 828.6,1358.5 830.3,1418.5 831.9,1331.6 833.6,1255.6 835.3,1341.0 836.9,1311.3 838.6,1349.8 840.3,1456.4 841.9,1346.2 843.6,1316.6 845.3,1335.8 846.9,1381.1 848.6,1391.7 850.3,1313.1 852.0,1346.4 853.6,1390.5 855.3,1354.5 857.0,1350.3 858.6,1378.1 860.3,1312.2 862.0,1381.9 863.6,1387.4 865.3,1376.9 867.0,1374.7 868.6,1312.5 870.3,1342.4 872.0,1388.4 873.6,1370.0 875.3,1389.2 877.0,1336.5 878.6,1316.6 880.3,1389.5 882.0,1359.9 883.6,1381.6 885.3,1378.8 887.0,1331.2 888.7,1299.8 890.3,1379.2 892.0,1355.4 893.7,1376.9 895.3,1390.6 897.0,1348.8 898.7,1386.8 900.3,1338.7 902.0,1331.2 903.7,1387.4 905.3,1349.5 907.0,1383.9 908.7,1329.1 910.3,1378.7 912.0,1338.5 913.7,1343.5 915.3,1351.9 917.0,1383.3 918.7,1319.5 920.3,1359.7 922.0,1297.8 923.7,1344.7 925.3,1348.3 927.0,1308.1 928.7,1361.3 930.4,1299.1 932.0,1348.7 933.7,1303.2 935.4,1310.6 937.0,1264.1 938.7,1353.3 940.4,1360.4 942.0,1259.0 943.7,1339.0 945.4,1352.1 947.0,1238.6 948.7,1370.5 950.4,1261.5 952.0,1300.8 953.7,1318.7 955.4,1437.2 957.0,1400.3 958.7,1390.0 960.4,1401.9 962.0,1390.6 963.7,1444.7 965.4,1406.3 967.0,1395.0 968.7,1426.5 970.4,1445.0 972.1,1422.0 973.7,1439.5 975.4,1370.9 977.1,1278.1 978.7,1294.0 980.4,1321.3 982.1,1306.1 983.7,1316.5 985.4,1211.4 987.1,1367.7 988.7,1357.1 990.4,1336.4 992.1,1327.7 993.7,1356.1 995.4,1367.5 997.1,1352.6 998.7,1364.3 1000.4,1359.9 1002.1,1388.5 1003.7,1383.7 1005.4,1378.3 1007.1,1387.8 1008.7,1380.1 1010.4,1377.9 1012.1,1432.5 1013.8,1358.9 1015.4,1378.5 1017.1,1390.1 1018.8,1357.7 1020.4,1389.6 1022.1,1370.2 1023.8,1380.6 1025.4,1387.6 1027.1,1384.1 1028.8,1380.6 1030.4,1384.4 1032.1,1387.9 1033.8,1382.9 1035.4,1382.2 1037.1,1372.1 1038.8,1389.0 1040.4,1391.5 1042.1,1365.0 1043.8,1391.2 1045.4,1374.6 1047.1,1378.0 1048.8,1357.7 1050.4,1375.6 1052.1,1275.7 1053.8,1379.8 1055.5,1377.0 1057.1,1317.9 1058.8,1377.5 1060.5,1328.6 1062.1,1314.4 1063.8,1380.1 1065.5,1294.2 1067.1,1351.5 1068.8,1259.6 1070.5,1384.8 1072.1,1382.6 1073.8,1323.4 1075.5,1369.8 1077.1,1354.1 1078.8,1271.5 1080.5,1363.9 1082.1,1390.4 1083.8,1156.9 1085.5,1331.7 1087.1,1289.6 1088.8,1293.1 1090.5,1345.6 1092.2,1446.1 1093.8,1385.9 1095.5,1160.3 1097.2,1380.0 1098.8,1260.2 1100.5,1355.1 1102.2,1386.8 1103.8,1316.8 1105.5,1347.8 1107.2,1391.2 1108.8,1245.4 1110.5,1251.1 1112.2,1373.6 1113.8,1277.0 1115.5,1348.1 1117.2,1310.1 1118.8,1314.0 1120.5,1252.2 1122.2,1350.3 1123.8,1384.6 1125.5,1459.8 1127.2,1350.3 1128.8,1350.1 1130.5,1318.2 1132.2,1328.3 1133.9,1286.2 1135.5,1362.1 1137.2,1334.8 1138.9,1382.9 1140.5,1381.8 1142.2,1373.3 1143.9,1371.4 1145.5,1356.4 1147.2,1375.1 1148.9,1291.7 1150.5,1358.3 1152.2,1362.7 1153.9,1297.0 1155.5,1313.0 1157.2,1316.7 1158.9,1295.2 1160.5,1321.4 1162.2,1369.4 1163.9,1287.6 1165.5,1384.6 1167.2,1297.8 1168.9,1359.1 1170.5,1366.7 1172.2,1353.5 1173.9,1361.0 1175.6,1303.4 1177.2,1311.5 1178.9,1320.0 1180.6,1446.0 1182.2,1433.7 1183.9,1451.8 1185.6,1408.6 1187.2,1452.5 1188.9,1436.7 1190.6,1449.5 1192.2,1397.6 1193.9,1390.6 1195.6,1443.1 1197.2,1395.5 1198.9,1448.4 1200.6,1436.1 1202.2,1466.3 1203.9,1455.7 1205.6,1444.1 1207.2,1461.3 1208.9,1468.6 1210.6,1445.9 1212.2,1428.9 1213.9,1412.1 1215.6,1434.5 1217.3,1438.0 1218.9,1445.0 1220.6,1440.5 1222.3,1445.9 1223.9,1438.4 1225.6,1403.3 1227.3,1443.9 1228.9,1410.6 1230.6,1436.0 1232.3,1439.4 1233.9,1423.8 1235.6,1427.2 1237.3,1426.5 1238.9,1443.8 1240.6,1417.5 1242.3,1385.6 1243.9,1446.1 1245.6,1444.9 1247.3,1296.4 1248.9,1434.7 1250.6,1438.3 1252.3,1378.1 1254.0,1435.3 1255.6,1383.5 1257.3,1413.2 1259.0,1445.9 1260.6,1437.6 1262.3,1445.0 1264.0,1419.6 1265.6,1201.2 1267.3,1465.1 1269.0,1466.0 1270.6,1466.0 1272.3,1445.5 1274.0,1457.1 1275.6,1307.1 1277.3,1354.9 1279.0,1314.7 1280.6,1396.4 1282.3,1344.1 1284.0,1369.7 1285.6,1443.1 1287.3,1381.7 1289.0,1443.5 1290.6,1417.4 1292.3,1343.7 1294.0,1451.6 1295.7,1456.2 1297.3,1336.7 1299.0,1417.5 1300.7,1456.3 1302.3,1439.7 1304.0,1444.6 1305.7,1325.6 1307.3,1415.9 1309.0,1319.6 1310.7,1381.5 1312.3,1378.1 1314.0,1368.6 1314.0,1521.0" fill="#7eb26d" fill-opacity="0.1"/>
<polyline points="98.0,1408.0 99.7,1310.9 101.3,1338.2 103.0,1364.8 104.7,1391.8 106.3,1362.5 108.0,1385.8 109.7,1408.2 111.3,1408.0 113.0,1411.3 114.7,1405.2 116.3,1399.7 118.0,1355.1 119.7,1453.0 121.4,1361.4 123.0,1326.0 124.7,1409.4 126.4,1340.5 128.0,1368.9 129.7,1336.7 131.4,1368.9 133.0,1369.5 134.7,1367.5 136.4,1340.4 138.0,1280.9 139.7,1352.9 141.4,1284.9 143.0,1357.7 144.7,1352.4 146.4,1329.5 148.0,1369.1 149.7,1332.6 151.4,1312.4 153.0,1242.0 154.7,1369.9 156.4,1273.8 158.0,1314.7 159.7,1313.3 161.4,1370.1 163.1,1257.8 164.7,1245.4 166.4,1318.3 168.1,1319.5 169.7,1251.5 171.4,1309.5 173.1,1238.6 174.7,1248.8 176.4,1299.2 178.1,1313.5 179.7,1323.3 181.4,1305.2 183.1,1317.7 184.7,1346.9 186.4,1262.4 188.1,1368.7 189.7,1418.9 191.4,1332.1 193.1,1359.5 194.7,1314.9 196.4,1297.9 198.1,1366.3 199.8,1351.3 201.4,1343.0 203.1,1304.9 204.8,1342.4 206.4,1335.6 208.1,1319.4 209.8,1319.0 211.4,1343.7 213.1,1262.2 214.8,1335.6 216.4,1303.6 218.1,1336.0 219.8,1305.1 221.4,1327.2 223.1,1329.7 224.8,1235.2 226.4,1306.1 228.1,1304.8 229.8,1294.9 231.4,1438.3 233.1,1444.7 234.8,1439.0 236.4,1435.4 238.1,1417.2 239.8,1430.4 241.5,1436.2 243.1,1444.6 244.8,1418.0 246.5,1380.8 248.1,1336.4 249.8,1308.2 251.5,1319.5 253.1,1377.5 254.8,1358.2 256.5,1258.5 258.1,1381.9 259.8,1309.9 261.5,1347.9 263.1,1321.1 264.8,1353.5 266.5,1380.0 268.1,1329.4 269.8,1384.9 271.5,1274.6 273.1,1287.6 274.8,1356.0 276.5,1333.3 278.1,1334.8 279.8,1252.2 281.5,1238.6 283.2,1364.9 284.8,1351.8 286.5,1289.8 288.2,1300.7 289.8,1349.7 291.5,1384.8 293.2,1315.3 294.8,1351.9 296.5,1380.4 298.2,1318.2 299.8,1346.8 301.5,1369.3 303.2,1372.2 304.8,1348.4 306.5,1373.8 308.2,1361.6 309.8,1290.7 311.5,1353.1 313.2,1373.4 314.8,1348.4 316.5,1294.7 318.2,1302.6 319.8,1329.4 321.5,1297.5 323.2,1318.6 324.9,1329.0 326.5,1358.2 328.2,1276.0 329.9,1322.0 331.5,1334.9 333.2,1286.6 334.9,1368.1 336.5,1301.0 338.2,1375.8 339.9,1290.1 341.5,1286.2 343.2,1384.1 344.9,1367.8 346.5,1286.2 348.2,1286.5 349.9,1330.2 351.5,1380.7 353.2,1384.9 354.9,1373.7 356.5,1272.6 358.2,1311.7 359.9,1358.2 361.6,1317.9 363.2,1297.0 364.9,1369.8 366.6,1301.3 368.2,1372.2 369.9,1367.4 371.6,1384.2 373.2,1379.4 374.9,1345.0 376.6,1384.6 378.2,1345.6 379.9,1378.8 381.6,1319.7 383.2,1381.0 384.9,1376.6 386.6,1372.2 388.2,1269.2 389.9,1311.2 391.6,1319.1 393.2,1320.7 394.9,1328.8 396.6,1345.9 398.2,1366.2 399.9,1378.2 401.6,1302.9 403.3,1360.1 404.9,1332.9 406.6,1383.5 408.3,1364.6 409.9,1382.3 411.6,1365.2 413.3,1321.8 414.9,1366.4 416.6,1328.7 418.3,1381.3 419.9,1362.4 421.6,1363.4 423.3,1354.6 424.9,1376.5 426.6,1334.6 428.3,1311.8 429.9,1320.8 431.6,1384.6 433.3,1356.5 434.9,1368.7 436.6,1348.3 438.3,1383.2 439.9,1331.0 441.6,1362.9 443.3,1303.5 445.0,1384.7 446.6,1362.8 448.3,1356.7 450.0,1318.5 451.6,1384.5 453.3,1433.7 455.0,1426.3 456.6,1386.9 458.3,1418.0 460.0,1429.2 461.6,1362.9 463.3,1374.1 465.0,1423.0 466.6,1322.0 468.3,1173.9 470.0,1354.9 471.6,1269.4 473.3,1449.5 475.0,1298.1 476.6,1303.9 478.3,1304.0 480.0,1322.6 481.6,1317.9 483.3,1356.2 485.0,1320.4 486.7,1305.7 488.3,1329.6 490.0,1304.8 491.7,1332.7 493.3,1286.4 495.0,1298.9 496.7,1362.2 498.3,1291.7 500.0,1349.6 501.7,1362.5 503.3,1360.7 505.0,1346.2 506.7,1325.0 508.3,1345.7 510.0,1355.8 511.7,1291.7 513.3,1341.5 515.0,1275.2 516.7,1167.1 518.3,1303.3 520.0,1442.7 521.7,1316.1 523.3,1340.5 525.0,1336.9 526.7,1382.9 528.4,1328.4 530.0,1367.9 531.7,1329.7 533.4,1316.7 535.0,1381.8 536.7,1384.8 538.4,1327.6 540.0,1300.0 541.7,1309.4 543.4,1361.3 545.0,1318.1 546.7,1384.7 548.4,1383.9 550.0,1347.4 551.7,1352.8 553.4,1319.3 555.0,1376.2 556.7,1425.7 558.4,1299.8 560.0,1363.8 561.7,1208.0 563.4,1334.6 565.1,1286.2 566.7,1371.7 568.4,1324.7 570.1,1354.6 571.7,1355.8 573.4,1367.1 575.1,1349.7 576.7,1338.3 578.4,1356.5 580.1,1345.7 581.7,1331.3 583.4,1303.5 585.1,1339.8 586.7,1357.4 588.4,1287.5 590.1,1372.3 591.7,1377.4 593.4,1295.4 595.1,1366.5 596.7,1373.4 598.4,1357.1 600.1,1360.7 601.7,1359.7 603.4,1303.6 605.1,1364.8 606.8,1374.3 608.4,1369.8 610.1,1289.3 611.8,1173.9 613.4,1248.8 615.1,1302.0 616.8,1278.2 618.4,1336.0 620.1,1296.7 621.8,1358.9 623.4,1351.9 625.1,1328.4 626.8,1361.0 628.4,1358.1 630.1,1364.2 631.8,1262.4 633.4,1293.0 635.1,1299.5 636.8,1368.1 638.4,1352.1 640.1,1309.7 641.8,1289.9 643.4,1330.3 645.1,1309.1 646.8,1360.9 648.5,1301.4 650.1,1295.7 651.8,1346.7 653.5,1361.0 655.1,1370.8 656.8,1321.9 658.5,1321.5 660.1,1446.1 661.8,1413.5 663.5,1362.2 665.1,1445.8 666.8,1442.3 668.5,1445.2 670.1,1421.5 671.8,1426.0 673.5,1371.8 675.1,1444.9 676.8,1439.0 678.5,1362.3 680.1,1446.0 681.8,1435.4 683.5,1235.2 685.1,1446.1 686.8,1433.5 688.5,1242.0 690.2,1403.4 691.8,1404.2 693.5,1463.2 695.2,1403.5 696.8,1445.7 698.5,1399.0 700.2,1338.1 701.8,1396.8 703.5,1368.5 705.2,1394.6 706.8,1272.5 708.5,1389.4 710.2,1402.5 711.8,1290.4 713.5,1299.0 715.2,1276.6 716.8,1318.3 718.5,1153.5 720.2,1353.4 721.8,1344.5 723.5,1339.6 725.2,1290.2 726.9,1372.5 728.5,1316.9 730.2,1384.7 731.9,1377.6 733.5,1290.4 735.2,1373.5 736.9,1349.5 738.5,1294.8 740.2,1332.3 741.9,1352.0 743.5,1326.1 745.2,1286.2 746.9,1290.9 748.5,1378.2 750.2,1380.4 751.9,1235.2 753.5,1380.2 755.2,1317.5 756.9,1307.4 758.5,1380.4 760.2,1383.3 761.9,1367.9 763.5,1328.1 765.2,1316.7 766.9,1354.9 768.6,1334.3 770.2,1294.6 771.9,1300.4 773.6,1381.5 775.2,1324.6 776.9,1315.8 778.6,1296.2 780.2,1359.2 781.9,1379.6 783.6,1473.4 785.2,1393.4 786.9,1390.8 788.6,1330.9 790.2,1355.9 791.9,1351.4 793.6,1355.7 795.2,1413.4 796.9,1417.6 798.6,1390.6 800.2,1322.6 801.9,1356.4 803.6,1332.9 805.2,1360.4 806.9,1334.2 808.6,1299.8 810.3,1346.1 811.9,1320.4 813.6,1299.8 815.3,1341.6 816.9,1235.2 818.6,1416.8 820.3,1418.3 821.9,1308.9 823.6,1406.4 825.3,1400.2 826.9,1413.8 828.6,1358.5 830.3,1418.5 831.9,1331.6 833.6,1255.6 835.3,1341.0 836.9,1311.3 838.6,1349.8 840.3,1456.4 841.9,1346.2 843.6,1316.6 845.3,1335.8 846.9,1381.1 848.6,1391.7 850.3,1313.1 852.0,1346.4 853.6,1390.5 855.3,1354.5 857.0,1350.3 858.6,1378.1 860.3,1312.2 862.0,1381.9 863.6,1387.4 865.3,1376.9 867.0,1374.7 868.6,1312.5 870.3,1342.4 872.0,1388.4 873.6,1370.0 875.3,1389.2 877.0,1336.5 878.6,1316.6 880.3,1389.5 882.0,1359.9 883.6,1381.6 885.3,1378.8 887.0,1331.2 888.7,1299.8 890.3,1379.2 892.0,1355.4 893.7,1376.9 895.3,1390.6 897.0,1348.8 898.7,1386.8 900.3,1338.7 902.0,1331.2 903.7,1387.4 905.3,1349.5 907.0,1383.9 908.7,1329.1 910.3,1378.7 912.0,1338.5 913.7,1343.5 915.3,1351.9 917.0,1383.3 918.7,1319.5 920.3,1359.7 922.0,1297.8 923.7,1344.7 925.3,1348.3 927.0,1308.1 928.7,1361.3 930.4,1299.1 932.0,1348.7 933.7,1303.2 935.4,1310.6 937.0,1264.1 938.7,1353.3 940.4,1360.4 942.0,1259.0 943.7,1339.0 945.4,1352.1 947.0,1238.6 948.7,1370.5 950.4,1261.5 952.0,1300.8 953.7,1318.7 955.4,1437.2 957.0,1400.3 958.7,1390.0 960.4,1401.9 962.0,1390.6 963.7,1444.7 965.4,1406.3 967.0,1395.0 968.7,1426.5 970.4,1445.0 972.1,1422.0 973.7,1439.5 975.4,1370.9 977.1,1278.1 978.7,1294.0 980.4,1321.3 982.1,1306.1 983.7,1316.5 985.4,1211.4 987.1,1367.7 988.7,1357.1 990.4,1336.4 992.1,1327.7 993.7,1356.1 995.4,1367.5 997.1,1352.6 998.7,1364.3 1000.4,1359.9 1002.1,1388.5 1003.7,1383.7 1005.4,1378.3 1007.1,1387.8 1008.7,1380.1 1010.4,1377.9 1012.1,1432.5 1013.8,1358.9 1015.4,1378.5 1017.1,1390.1 1018.8,1357.7 1020.4,1389.6 1022.1,1370.2 1023.8,1380.6 1025.4,1387.6 1027.1,1384.1 1028.8,1380.6 1030.4,1384.4 1032.1,1387.9 1033.8,1382.9 1035.4,1382.2 1037.1,1372.1 1038.8,1389.0 1040.4,1391.5 1042.1,1365.0 1043.8,1391.2 1045.4,1374.6 1047.1,1378.0 1048.8,1357.7 1050.4,1375.6 1052.1,1275.7 1053.8,1379.8 1055.5,1377.0 1057.1,1317.9 1058.8,1377.5 1060.5,1328.6 1062.1,1314.4 1063.8,1380.1 1065.5,1294.2 1067.1,1351.5 1068.8,1259.6 1070.5,1384.8 1072.1,1382.6 1073.8,1323.4 1075.5,1369.8 1077.1,1354.1 1078.8,1271.5 1080.5,1363.9 1082.1,1390.4 1083.8,1156.9 1085.5,1331.7 1087.1,1289.6 1088.8,1293.1 1090.5,1345.6 1092.2,1446.1 1093.8,1385.9 1095.5,1160.3 1097.2,1380.0 1098.8,1260.2 1100.5,1355.1 1102.2,1386.8 1103.8,1316.8 1105.5,1347.8 1107.2,1391.2 1108.8,1245.4 1110.5,1251.1 1112.2,1373.6 1113.8,1277.0 1115.5,1348.1 1117.2,1310.1 1118.8,1314.0 1120.5,1252.2 1122.2,1350.3 1123.8,1384.6 1125.5,1459.8 1127.2,1350.3 1128.8,1350.1 1130.5,1318.2 1132.2,1328.3 1133.9,1286.2 1135.5,1362.1 1137.2,1334.8 1138.9,1382.9 1140.5,1381.8 1142.2,1373.3 1143.9,1371.4 1145.5,1356.4 1147.2,1375.1 1148.9,1291.7 1150.5,1358.3 1152.2,1362.7 1153.9,1297.0 1155.5,1313.0 1157.2,1316.7 1158.9,1295.2 1160.5,1321.4 1162.2,1369.4 1163.9,1287.6 1165.5,1384.6 1167.2,1297.8 1168.9,1359.1 1170.5,1366.7 1172.2,1353.5 1173.9,1361.0 1175.6,1303.4 1177.2,1311.5 1178.9,1320.0 1180.6,1446.0 1182.2,1433.7 1183.9,1451.8 1185.6,1408.6 1187.2,1452.5 1188.9,1436.7 1190.6,1449.5 1192.2,1397.6 1193.9,1390.6 1195.6,1443.1 1197.2,1395.5 1198.9,1448.4 1200.6,1436.1 1202.2,1466.3 1203.9,1455.7 1205.6,1444.1 1207.2,1461.3 1208.9,1468.6 1210.6,1445.9 1212.2,1428.9 1213.9,1412.1 1215.6,1434.5 1217.3,1438.0 1218.9,1445.0 1220.6,1440.5 1222.3,1445.9 1223.9,1438.4 1225.6,1403.3 1227.3,1443.9 1228.9,1410.6 1230.6,1436.0 1232.3,1439.4 1233.9,1423.8 1235.6,1427.2 1237.3,1426.5 1238.9,1443.8 1240.6,1417.5 1242.3,1385.6 1243.9,1446.1 1245.6,1444.9 1247.3,1296.4 1248.9,1434.7 1250.6,1438.3 1252.3,1378.1 1254.0,1435.3 1255.6,1383.5 1257.3,1413.2 1259.0,1445.9 1260.6,1437.6 1262.3,1445.0 1264.0,1419.6 1265.6,1201.2 1267.3,1465.1 1269.0,1466.0 1270.6,1466.0 1272.3,1445.5 1274.0,1457.1 1275.6,1307.1 1277.3,1354.9 1279.0,1314.7 1280.6,1396.4 1282.3,1344.1 1284.0,1369.7 1285.6,1443.1 1287.3,1381.7 1289.0,1443.5 1290.6,1417.4 1292.3,1343.7 1294.0,1451.6 1295.7,1456.2 1297.3,1336.7 1299.0,1417.5 1300.7,1456.3 1302.3,1439.7 1304.0,1444.6 1305.7,1325.6 1307.3,1415.9 1309.0,1319.6 1310.7,1381.5 1312.3,1378.1 1314.0,1368.6" fill="none" stroke="#7eb26d" stroke-width="2.0" stroke-linejoin="miter"/>
<rect x="1352" y="1142" width="432" height="48" fill="#262628" />
<rect x="1372" y="1165" width="24" height="6.6" rx="2" fill="#7eb26d"/>
<rect x="1942" y="1112" width="1234" height="2" fill="#48484b" />
<rect x="1942" y="1214" width="1234" height="2" fill="#48484b" />
<rect x="1942" y="1316" width="1234" height="2" fill="#48484b" />
<rect x="1942" y="1418" width="1234" height="2" fill="#48484b" />
<rect x="1942" y="1520" width="1234" height="2" fill="#48484b" />
<rect x="2066" y="1112" width="2" height="410" fill="#48484b" />
<rect x="2272" y="1112" width="2" height="410" fill="#48484b" />
<rect x="2478" y="1112" width="2" height="410" fill="#48484b" />
<rect x="2684" y="1112" width="2" height="410" fill="#48484b" />
<rect x="2888" y="1112" width="2" height="410" fill="#48484b" />
<rect x="3094" y="1112" width="2" height="410" fill="#48484b" />
<polygon points="1942.0,1521.0 1942.0,1508.8 1943.7,1508.8 1943.7,1508.8 1945.4,1508.8 1945.4,1506.7 1947.1,1506.7 1947.1,1505.7 1948.8,1505.7 1948.8,1506.6 1950.6,1506.6 1950.6,1307.2 1952.3,1307.2 1952.3,1276.2 1954.0,1276.2 1954.0,1304.1 1955.7,1304.1 1955.7,1324.9 1957.4,1324.9 1957.4,1322.4 1959.1,1322.4 1959.1,1404.2 1960.8,1404.2 1960.8,1339.9 1962.5,1339.9 1962.5,1432.9 1964.2,1432.9 1964.2,1419.9 1966.0,1419.9 1966.0,1428.6 1967.7,1428.6 1967.7,1361.6 1969.4,1361.6 1969.4,1439.6 1971.1,1439.6 1971.1,1245.6 1972.8,1245.6 1972.8,1321.6 1974.5,1321.6 1974.5,1442.7 1976.2,1442.7 1976.2,1451.2 1977.9,1451.2 1977.9,1463.5 1979.7,1463.5 1979.7,1430.6 1981.4,1430.6 1981.4,1465.8 1983.1,1465.8 1983.1,1460.1 1984.8,1460.1 1984.8,1375.6 1986.5,1375.6 1986.5,1415.1 1988.2,1415.1 1988.2,1416.5 1989.9,1416.5 1989.9,1380.4 1991.6,1380.4 1991.6,1426.7 1993.3,1426.7 1993.3,1431.4 1995.1,1431.4 1995.1,1437.6 1996.8,1437.6 1996.8,1438.7 1998.5,1438.7 1998.5,1445.8 2000.2,1445.8 2000.2,1471.8 2001.9,1471.8 2001.9,1475.8 2003.6,1475.8 2003.6,1455.0 2005.3,1455.0 2005.3,1461.2 2007.0,1461.2 2007.0,1465.3 2008.7,1465.3 2008.7,1380.9 2010.5,1380.9 2010.5,1473.0 2012.2,1473.0 2012.2,1506.4 2013.9,1506.4 2013.9,1506.3 2015.6,1506.3 2015.6,1506.4 2017.3,1506.4 2017.3,1507.7 2019.0,1507.7 2019.0,1344.3 2020.7,1344.3 2020.7,1425.7 2022.4,1425.7 2022.4,1434.2 2024.2,1434.2 2024.2,1435.0 2025.9,1435.0 2025.9,1454.7 2027.6,1454.7 2027.6,1429.3 2029.3,1429.3 2029.3,1348.7 2031.0,1348.7 2031.0,1418.0 2032.7,1418.0 2032.7,1371.1 2034.4,1371.1 2034.4,1423.8 2036.1,1423.8 2036.1,1450.6 2037.8,1450.6 2037.8,1448.6 2039.6,1448.6 2039.6,1442.2 2041.3,1442.2 2041.3,1376.2 2043.0,1376.2 2043.0,1438.4 2044.7,1438.4 2044.7,1402.7 2046.4,1402.7 2046.4,1473.5 2048.1,1473.5 2048.1,1460.2 2049.8,1460.2 2049.8,1453.1 2051.5,1453.1 2051.5,1418.6 2053.2,1418.6 2053.2,1410.3 2055.0,1410.3 2055.0,1424.6 2056.7,1424.6 2056.7,1422.2 2058.4,1422.2 2058.4,1360.2 2060.1,1360.2 2060.1,1432.9 2061.8,1432.9 2061.8,1438.5 2063.5,1438.5 2063.5,1435.7 2065.2,1435.7 2065.2,1444.5 2066.9,1444.5 2066.9,1475.6 2068.7,1475.6 2068.7,1417.6 2070.4,1417.6 2070.4,1452.5 2072.1,1452.5 2072.1,1457.4 2073.8,1457.4 2073.8,1457.7 2075.5,1457.7 2075.5,1459.0 2077.2,1459.0 2077.2,1470.2 2078.9,1470.2 2078.9,1487.6 2080.6,1487.6 2080.6,1469.6 2082.3,1469.6 2082.3,1475.5 2084.1,1475.5 2084.1,1475.1 2085.8,1475.1 2085.8,1506.7 2087.5,1506.7 2087.5,1505.9 2089.2,1505.9 2089.2,1507.8 2090.9,1507.8 2090.9,1506.4 2092.6,1506.4 2092.6,1508.2 2094.3,1508.2 2094.3,1451.0 2096.0,1451.0 2096.0,1315.3 2097.7,1315.3 2097.7,1333.3 2099.5,1333.3 2099.5,1332.3 2101.2,1332.3 2101.2,1447.9 2102.9,1447.9 2102.9,1412.4 2104.6,1412.4 2104.6,1451.4 2106.3,1451.4 2106.3,1422.3 2108.0,1422.3 2108.0,1452.5 2109.7,1452.5 2109.7,1454.7 2111.4,1454.7 2111.4,1351.2 2113.2,1351.2 2113.2,1461.1 2114.9,1461.1 2114.9,1355.8 2116.6,1355.8 2116.6,1473.8 2118.3,1473.8 2118.3,1389.5 2120.0,1389.5 2120.0,1444.0 2121.7,1444.0 2121.7,1394.0 2123.4,1394.0 2123.4,1402.5 2125.1,1402.5 2125.1,1388.5 2126.8,1388.5 2126.8,1403.7 2128.6,1403.7 2128.6,1406.1 2130.3,1406.1 2130.3,1476.5 2132.0,1476.5 2132.0,1394.7 2133.7,1394.7 2133.7,1384.0 2135.4,1384.0 2135.4,1422.8 2137.1,1422.8 2137.1,1468.3 2138.8,1468.3 2138.8,1430.3 2140.5,1430.3 2140.5,1440.1 2142.2,1440.1 2142.2,1441.1 2144.0,1441.1 2144.0,1448.4 2145.7,1448.4 2145.7,1448.6 2147.4,1448.6 2147.4,1449.0 2149.1,1449.0 2149.1,1457.7 2150.8,1457.7 2150.8,1483.1 2152.5,1483.1 2152.5,1466.4 2154.2,1466.4 2154.2,1482.5 2155.9,1482.5 2155.9,1471.4 2157.7,1471.4 2157.7,1474.2 2159.4,1474.2 2159.4,1507.8 2161.1,1507.8 2161.1,1508.6 2162.8,1508.6 2162.8,1507.4 2164.5,1507.4 2164.5,1506.4 2166.2,1506.4 2166.2,1506.8 2167.9,1506.8 2167.9,1506.0 2169.6,1506.0 2169.6,1413.0 2171.3,1413.0 2171.3,1352.0 2173.1,1352.0 2173.1,1356.0 2174.8,1356.0 2174.8,1456.0 2176.5,1456.0 2176.5,1462.4 2178.2,1462.4 2178.2,1465.6 2179.9,1465.6 2179.9,1306.8 2181.6,1306.8 2181.6,1372.5 2183.3,1372.5 2183.3,1435.9 2185.0,1435.9 2185.0,1468.1 2186.7,1468.1 2186.7,1379.6 2188.5,1379.6 2188.5,1360.8 2190.2,1360.8 2190.2,1451.6 2191.9,1451.6 2191.9,1389.7 2193.6,1389.7 2193.6,1400.0 2195.3,1400.0 2195.3,1473.4 2197.0,1473.4 2197.0,1475.3 2198.7,1475.3 2198.7,1479.4 2200.4,1479.4 2200.4,1484.2 2202.1,1484.2 2202.1,1413.2 2203.9,1413.2 2203.9,1417.6 2205.6,1417.6 2205.6,1422.1 2207.3,1422.1 2207.3,1428.1 2209.0,1428.1 2209.0,1426.0 2210.7,1426.0 2210.7,1435.2 2212.4,1435.2 2212.4,1438.7 2214.1,1438.7 2214.1,1472.9 2215.8,1472.9 2215.8,1442.9 2217.6,1442.9 2217.6,1470.1 2219.3,1470.1 2219.3,1444.8 2221.0,1444.8 2221.0,1454.3 2222.7,1454.3 2222.7,1477.6 2224.4,1477.6 2224.4,1456.7 2226.1,1456.7 2226.1,1464.2 2227.8,1464.2 2227.8,1487.7 2229.5,1487.7 2229.5,1470.7 2231.2,1470.7 2231.2,1478.2 2233.0,1478.2 2233.0,1472.6 2234.7,1472.6 2234.7,1508.6 2236.4,1508.6 2236.4,1507.1 2238.1,1507.1 2238.1,1505.8 2239.8,1505.8 2239.8,1508.3 2241.5,1508.3 2241.5,1505.9 2243.2,1505.9 2243.2,1434.9 2244.9,1434.9 2244.9,1446.4 2246.6,1446.4 2246.6,1338.7 2248.4,1338.7 2248.4,1409.2 2250.1,1409.2 2250.1,1331.4 2251.8,1331.4 2251.8,1363.0 2253.5,1363.0 2253.5,1354.3 2255.2,1354.3 2255.2,1366.9 2256.9,1366.9 2256.9,1446.8 2258.6,1446.8 2258.6,1345.9 2260.3,1345.9 2260.3,1375.2 2262.1,1375.2 2262.1,1456.0 2263.8,1456.0 2263.8,1380.4 2265.5,1380.4 2265.5,1451.4 2267.2,1451.4 2267.2,1460.2 2268.9,1460.2 2268.9,1449.4 2270.6,1449.4 2270.6,1373.5 2272.3,1373.5 2272.3,1404.0 2274.0,1404.0 2274.0,1457.4 2275.7,1457.4 2275.7,1463.6 2277.5,1463.6 2277.5,1420.9 2279.2,1420.9 2279.2,1481.7 2280.9,1481.7 2280.9,1412.8 2282.6,1412.8 2282.6,1420.7 2284.3,1420.7 2284.3,1375.5 2286.0,1375.5 2286.0,1434.4 2287.7,1434.4 2287.7,1266.0 2289.4,1266.0 2289.4,1439.6 2291.1,1439.6 2291.1,1445.2 2292.9,1445.2 2292.9,1448.4 2294.6,1448.4 2294.6,1450.9 2296.3,1450.9 2296.3,1371.3 2298.0,1371.3 2298.0,1457.6 2299.7,1457.6 2299.7,1463.3 2301.4,1463.3 2301.4,1469.4 2303.1,1469.4 2303.1,1487.2 2304.8,1487.2 2304.8,1479.1 2306.6,1479.1 2306.6,1477.0 2308.3,1477.0 2308.3,1507.7 2310.0,1507.7 2310.0,1506.8 2311.7,1506.8 2311.7,1508.2 2313.4,1508.2 2313.4,1506.8 2315.1,1506.8 2315.1,1505.7 2316.8,1505.7 2316.8,1507.8 2318.5,1507.8 2318.5,1270.0 2320.2,1270.0 2320.2,1318.7 2322.0,1318.7 2322.0,1320.9 2323.7,1320.9 2323.7,1333.4 2325.4,1333.4 2325.4,1439.4 2327.1,1439.4 2327.1,1288.3 2328.8,1288.3 2328.8,1345.5 2330.5,1345.5 2330.5,1348.9 2332.2,1348.9 2332.2,1462.5 2333.9,1462.5 2333.9,1454.8 2335.6,1454.8 2335.6,1366.5 2337.4,1366.5 2337.4,1358.8 2339.1,1358.8 2339.1,1360.5 2340.8,1360.5 2340.8,1456.6 2342.5,1456.6 2342.5,1317.7 2344.2,1317.7 2344.2,1387.1 2345.9,1387.1 2345.9,1384.5 2347.6,1384.5 2347.6,1399.6 2349.3,1399.6 2349.3,1394.4 2351.1,1394.4 2351.1,1404.5 2352.8,1404.5 2352.8,1407.3 2354.5,1407.3 2354.5,1329.8 2356.2,1329.8 2356.2,1330.0 2357.9,1330.0 2357.9,1461.5 2359.6,1461.5 2359.6,1422.1 2361.3,1422.1 2361.3,1432.4 2363.0,1432.4 2363.0,1430.3 2364.7,1430.3 2364.7,1436.1 2366.5,1436.1 2366.5,1473.1 2368.2,1473.1 2368.2,1442.0 2369.9,1442.0 2369.9,1477.4 2371.6,1477.4 2371.6,1454.4 2373.3,1454.4 2373.3,1455.2 2375.0,1455.2 2375.0,1464.5 2376.7,1464.5 2376.7,1403.2 2378.4,1403.2 2378.4,1469.1 2380.1,1469.1 2380.1,1467.8 2381.9,1467.8 2381.9,1468.9 2383.6,1468.9 2383.6,1506.9 2385.3,1506.9 2385.3,1506.5 2387.0,1506.5 2387.0,1506.1 2388.7,1506.1 2388.7,1508.1 2390.4,1508.1 2390.4,1508.4 2392.1,1508.4 2392.1,1305.3 2393.8,1305.3 2393.8,1325.5 2395.6,1325.5 2395.6,1395.7 2397.3,1395.7 2397.3,1326.2 2399.0,1326.2 2399.0,1397.5 2400.7,1397.5 2400.7,1220.1 2402.4,1220.1 2402.4,1299.1 2404.1,1299.1 2404.1,1417.0 2405.8,1417.0 2405.8,1361.1 2407.5,1361.1 2407.5,1364.5 2409.2,1364.5 2409.2,1394.3 2411.0,1394.3 2411.0,1361.1 2412.7,1361.1 2412.7,1313.9 2414.4,1313.9 2414.4,1373.9 2416.1,1373.9 2416.1,1447.5 2417.8,1447.5 2417.8,1377.6 2419.5,1377.6 2419.5,1429.2 2421.2,1429.2 2421.2,1404.5 2422.9,1404.5 2422.9,1446.3 2424.6,1446.3 2424.6,1411.3 2426.4,1411.3 2426.4,1453.3 2428.1,1453.3 2428.1,1418.5 2429.8,1418.5 2429.8,1421.7 2431.5,1421.7 2431.5,1421.1 2433.2,1421.1 2433.2,1435.6 2434.9,1435.6 2434.9,1442.2 2436.6,1442.2 2436.6,1443.1 2438.3,1443.1 2438.3,1445.5 2440.0,1445.5 2440.0,1445.4 2441.8,1445.4 2441.8,1453.5 2443.5,1453.5 2443.5,1456.3 2445.2,1456.3 2445.2,1460.6 2446.9,1460.6 2446.9,1468.5 2448.6,1468.5 2448.6,1470.6 2450.3,1470.6 2450.3,1476.8 2452.0,1476.8 2452.0,1506.4 2453.7,1506.4 2453.7,1507.6 2455.5,1507.6 2455.5,1506.6 2457.2,1506.6 2457.2,1508.0 2458.9,1508.0 2458.9,1505.7 2460.6,1505.7 2460.6,1384.6 2462.3,1384.6 2462.3,1341.1 2464.0,1341.1 2464.0,1408.3 2465.7,1408.3 2465.7,1346.7 2467.4,1346.7 2467.4,1322.6 2469.1,1322.6 2469.1,1225.2 2470.9,1225.2 2470.9,1416.9 2472.6,1416.9 2472.6,1220.1 2474.3,1220.1 2474.3,1424.1 2476.0,1424.1 2476.0,1348.5 2477.7,1348.5 2477.7,1353.4 2479.4,1353.4 2479.4,1378.6 2481.1,1378.6 2481.1,1378.7 2482.8,1378.7 2482.8,1340.8 2484.5,1340.8 2484.5,1435.2 2486.3,1435.2 2486.3,1457.7 2488.0,1457.7 2488.0,1408.7 2489.7,1408.7 2489.7,1465.6 2491.4,1465.6 2491.4,1403.0 2493.1,1403.0 2493.1,1468.6 2494.8,1468.6 2494.8,1420.0 2496.5,1420.0 2496.5,1424.4 2498.2,1424.4 2498.2,1429.3 2500.0,1429.3 2500.0,1436.1 2501.7,1436.1 2501.7,1434.8 2503.4,1434.8 2503.4,1441.1 2505.1,1441.1 2505.1,1448.5 2506.8,1448.5 2506.8,1385.7 2508.5,1385.7 2508.5,1450.3 2510.2,1450.3 2510.2,1458.6 2511.9,1458.6 2511.9,1460.4 2513.6,1460.4 2513.6,1467.5 2515.4,1467.5 2515.4,1470.1 2517.1,1470.1 2517.1,1471.0 2518.8,1471.0 2518.8,1478.3 2520.5,1478.3 2520.5,1506.3 2522.2,1506.3 2522.2,1506.7 2523.9,1506.7 2523.9,1506.1 2525.6,1506.1 2525.6,1508.0 2527.3,1508.0 2527.3,1508.5 2529.0,1508.5 2529.0,1328.9 2530.8,1328.9 2530.8,1312.5 2532.5,1312.5 2532.5,1324.4 2534.2,1324.4 2534.2,1332.4 2535.9,1332.4 2535.9,1307.8 2537.6,1307.8 2537.6,1321.7 2539.3,1321.7 2539.3,1332.3 2541.0,1332.3 2541.0,1441.0 2542.7,1441.0 2542.7,1341.9 2544.5,1341.9 2544.5,1438.5 2546.2,1438.5 2546.2,1370.0 2547.9,1370.0 2547.9,1427.6 2549.6,1427.6 2549.6,1378.8 2551.3,1378.8 2551.3,1443.0 2553.0,1443.0 2553.0,1450.2 2554.7,1450.2 2554.7,1388.1 2556.4,1388.1 2556.4,1443.4 2558.1,1443.4 2558.1,1400.2 2559.9,1400.2 2559.9,1296.6 2561.6,1296.6 2561.6,1440.2 2563.3,1440.2 2563.3,1404.0 2565.0,1404.0 2565.0,1351.8 2566.7,1351.8 2566.7,1412.6 2568.4,1412.6 2568.4,1420.5 2570.1,1420.5 2570.1,1418.3 2571.8,1418.3 2571.8,1422.1 2573.5,1422.1 2573.5,1433.2 2575.3,1433.2 2575.3,1430.2 2577.0,1430.2 2577.0,1468.2 2578.7,1468.2 2578.7,1443.9 2580.4,1443.9 2580.4,1440.2 2582.1,1440.2 2582.1,1470.7 2583.8,1470.7 2583.8,1452.6 2585.5,1452.6 2585.5,1448.5 2587.2,1448.5 2587.2,1455.7 2589.0,1455.7 2589.0,1457.0 2590.7,1457.0 2590.7,1484.3 2592.4,1484.3 2592.4,1470.0 2594.1,1470.0 2594.1,1476.3 2595.8,1476.3 2595.8,1488.6 2597.5,1488.6 2597.5,1413.4 2599.2,1413.4 2599.2,1507.9 2600.9,1507.9 2600.9,1506.3 2602.6,1506.3 2602.6,1508.5 2604.4,1508.5 2604.4,1506.8 2606.1,1506.8 2606.1,1507.4 2607.8,1507.4 2607.8,1339.2 2609.5,1339.2 2609.5,1452.8 2611.2,1452.8 2611.2,1443.8 2612.9,1443.8 2612.9,1310.9 2614.6,1310.9 2614.6,1460.5 2616.3,1460.5 2616.3,1469.7 2618.0,1469.7 2618.0,1436.3 2619.8,1436.3 2619.8,1438.6 2621.5,1438.6 2621.5,1436.0 2623.2,1436.0 2623.2,1454.5 2624.9,1454.5 2624.9,1373.6 2626.6,1373.6 2626.6,1369.0 2628.3,1369.0 2628.3,1372.7 2630.0,1372.7 2630.0,1460.1 2631.7,1460.1 2631.7,1481.6 2633.5,1481.6 2633.5,1464.2 2635.2,1464.2 2635.2,1406.8 2636.9,1406.8 2636.9,1404.9 2638.6,1404.9 2638.6,1410.3 2640.3,1410.3 2640.3,1448.5 2642.0,1448.5 2642.0,1419.8 2643.7,1419.8 2643.7,1425.2 2645.4,1425.2 2645.4,1427.6 2647.1,1427.6 2647.1,1426.2 2648.9,1426.2 2648.9,1435.2 2650.6,1435.2 2650.6,1438.5 2652.3,1438.5 2652.3,1446.2 2654.0,1446.2 2654.0,1444.2 2655.7,1444.2 2655.7,1444.0 2657.4,1444.0 2657.4,1451.5 2659.1,1451.5 2659.1,1458.5 2660.8,1458.5 2660.8,1484.5 2662.5,1484.5 2662.5,1484.9 2664.3,1484.9 2664.3,1291.5 2666.0,1291.5 2666.0,1466.4 2667.7,1466.4 2667.7,1469.8 2669.4,1469.8 2669.4,1426.3 2671.1,1426.3 2671.1,1482.1 2672.8,1482.1 2672.8,1482.8 2674.5,1482.8 2674.5,1508.5 2676.2,1508.5 2676.2,1505.7 2678.0,1505.7 2678.0,1507.4 2679.7,1507.4 2679.7,1508.6 2681.4,1508.6 2681.4,1506.9 2683.1,1506.9 2683.1,1428.6 2684.8,1428.6 2684.8,1347.4 2686.5,1347.4 2686.5,1352.2 2688.2,1352.2 2688.2,1446.8 2689.9,1446.8 2689.9,1464.6 2691.6,1464.6 2691.6,1364.2 2693.4,1364.2 2693.4,1441.9 2695.1,1441.9 2695.1,1368.1 2696.8,1368.1 2696.8,1466.6 2698.5,1466.6 2698.5,1462.8 2700.2,1462.8 2700.2,1443.8 2701.9,1443.8 2701.9,1447.4 2703.6,1447.4 2703.6,1469.9 2705.3,1469.9 2705.3,1477.1 2707.0,1477.1 2707.0,1411.9 2708.8,1411.9 2708.8,1417.8 2710.5,1417.8 2710.5,1421.1 2712.2,1421.1 2712.2,1421.0 2713.9,1421.0 2713.9,1425.2 2715.6,1425.2 2715.6,1429.3 2717.3,1429.3 2717.3,1435.9 2719.0,1435.9 2719.0,1436.7 2720.7,1436.7 2720.7,1440.5 2722.4,1440.5 2722.4,1373.2 2724.2,1373.2 2724.2,1472.1 2725.9,1472.1 2725.9,1452.9 2727.6,1452.9 2727.6,1461.2 2729.3,1461.2 2729.3,1468.4 2731.0,1468.4 2731.0,1468.1 2732.7,1468.1 2732.7,1467.6 2734.4,1467.6 2734.4,1419.1 2736.1,1419.1 2736.1,1476.0 2737.9,1476.0 2737.9,1480.3 2739.6,1480.3 2739.6,1506.3 2741.3,1506.3 2741.3,1506.1 2743.0,1506.1 2743.0,1505.9 2744.7,1505.9 2744.7,1508.5 2746.4,1508.5 2746.4,1317.8 2748.1,1317.8 2748.1,1267.2 2749.8,1267.2 2749.8,1277.2 2751.5,1277.2 2751.5,1423.5 2753.3,1423.5 2753.3,1315.2 2755.0,1315.2 2755.0,1324.5 2756.7,1324.5 2756.7,1399.3 2758.4,1399.3 2758.4,1404.3 2760.1,1404.3 2760.1,1408.6 2761.8,1408.6 2761.8,1425.0 2763.5,1425.0 2763.5,1428.9 2765.2,1428.9 2765.2,1364.2 2766.9,1364.2 2766.9,1405.9 2768.7,1405.9 2768.7,1418.4 2770.4,1418.4 2770.4,1389.0 2772.1,1389.0 2772.1,1356.8 2773.8,1356.8 2773.8,1446.5 2775.5,1446.5 2775.5,1447.1 2777.2,1447.1 2777.2,1405.3 2778.9,1405.3 2778.9,1438.4 2780.6,1438.4 2780.6,1406.3 2782.4,1406.3 2782.4,1455.7 2784.1,1455.7 2784.1,1413.8 2785.8,1413.8 2785.8,1419.4 2787.5,1419.4 2787.5,1426.8 2789.2,1426.8 2789.2,1429.6 2790.9,1429.6 2790.9,1428.8 2792.6,1428.8 2792.6,1434.0 2794.3,1434.0 2794.3,1401.5 2796.0,1401.5 2796.0,1444.1 2797.8,1444.1 2797.8,1445.2 2799.5,1445.2 2799.5,1452.4 2801.2,1452.4 2801.2,1457.6 2802.9,1457.6 2802.9,1484.8 2804.6,1484.8 2804.6,1390.0 2806.3,1390.0 2806.3,1464.1 2808.0,1464.1 2808.0,1465.2 2809.7,1465.2 2809.7,1468.1 2811.4,1468.1 2811.4,1471.6 2813.2,1471.6 2813.2,1505.9 2814.9,1505.9 2814.9,1506.3 2816.6,1506.3 2816.6,1505.8 2818.3,1505.8 2818.3,1306.8 2820.0,1306.8 2820.0,1506.7 2821.7,1506.7 2821.7,1505.7 2823.4,1505.7 2823.4,1280.3 2825.1,1280.3 2825.1,1400.3 2826.9,1400.3 2826.9,1313.1 2828.6,1313.1 2828.6,1410.9 2830.3,1410.9 2830.3,1418.8 2832.0,1418.8 2832.0,1317.9 2833.7,1317.9 2833.7,1331.1 2835.4,1331.1 2835.4,1414.3 2837.1,1414.3 2837.1,1419.7 2838.8,1419.7 2838.8,1356.6 2840.5,1356.6 2840.5,1309.3 2842.3,1309.3 2842.3,1427.9 2844.0,1427.9 2844.0,1439.0 2845.7,1439.0 2845.7,1377.1 2847.4,1377.1 2847.4,1359.8 2849.1,1359.8 2849.1,1327.6 2850.8,1327.6 2850.8,1464.8 2852.5,1464.8 2852.5,1388.3 2854.2,1388.3 2854.2,1396.0 2855.9,1396.0 2855.9,1406.0 2857.7,1406.0 2857.7,1408.9 2859.4,1408.9 2859.4,1413.3 2861.1,1413.3 2861.1,1415.6 2862.8,1415.6 2862.8,1425.4 2864.5,1425.4 2864.5,1364.4 2866.2,1364.4 2866.2,1432.8 2867.9,1432.8 2867.9,1437.5 2869.6,1437.5 2869.6,1439.3 2871.4,1439.3 2871.4,1443.8 2873.1,1443.8 2873.1,1445.4 2874.8,1445.4 2874.8,1454.2 2876.5,1454.2 2876.5,1457.0 2878.2,1457.0 2878.2,1461.7 2879.9,1461.7 2879.9,1462.5 2881.6,1462.5 2881.6,1489.9 2883.3,1489.9 2883.3,1475.8 2885.0,1475.8 2885.0,1507.8 2886.8,1507.8 2886.8,1506.3 2888.5,1506.3 2888.5,1506.0 2890.2,1506.0 2890.2,1507.2 2891.9,1507.2 2891.9,1508.4 2893.6,1508.4 2893.6,1325.4 2895.3,1325.4 2895.3,1325.0 2897.0,1325.0 2897.0,1398.9 2898.7,1398.9 2898.7,1301.7 2900.4,1301.7 2900.4,1277.0 2902.2,1277.0 2902.2,1401.0 2903.9,1401.0 2903.9,1345.8 2905.6,1345.8 2905.6,1306.8 2907.3,1306.8 2907.3,1420.8 2909.0,1420.8 2909.0,1370.0 2910.7,1370.0 2910.7,1402.2 2912.4,1402.2 2912.4,1430.1 2914.1,1430.1 2914.1,1415.0 2915.9,1415.0 2915.9,1366.7 2917.6,1366.7 2917.6,1388.7 2919.3,1388.7 2919.3,1390.3 2921.0,1390.3 2921.0,1449.3 2922.7,1449.3 2922.7,1378.8 2924.4,1378.8 2924.4,1462.3 2926.1,1462.3 2926.1,1464.4 2927.8,1464.4 2927.8,1444.8 2929.5,1444.8 2929.5,1417.6 2931.3,1417.6 2931.3,1333.6 2933.0,1333.6 2933.0,1369.1 2934.7,1369.1 2934.7,1429.2 2936.4,1429.2 2936.4,1441.2 2938.1,1441.2 2938.1,1440.7 2939.8,1440.7 2939.8,1471.6 2941.5,1471.6 2941.5,1449.0 2943.2,1449.0 2943.2,1454.9 2944.9,1454.9 2944.9,1459.2 2946.7,1459.2 2946.7,1460.6 2948.4,1460.6 2948.4,1408.7 2950.1,1408.7 2950.1,1470.5 2951.8,1470.5 2951.8,1470.2 2953.5,1470.2 2953.5,1479.9 2955.2,1479.9 2955.2,1506.2 2956.9,1506.2 2956.9,1506.0 2958.6,1506.0 2958.6,1506.5 2960.3,1506.5 2960.3,1506.3 2962.1,1506.3 2962.1,1312.2 2963.8,1312.2 2963.8,1294.8 2965.5,1294.8 2965.5,1317.6 2967.2,1317.6 2967.2,1383.8 2968.9,1383.8 2968.9,1342.9 2970.6,1342.9 2970.6,1345.1 2972.3,1345.1 2972.3,1406.0 2974.0,1406.0 2974.0,1409.3 2975.8,1409.3 2975.8,1407.2 2977.5,1407.2 2977.5,1365.3 2979.2,1365.3 2979.2,1365.4 2980.9,1365.4 2980.9,1361.1 2982.6,1361.1 2982.6,1376.7 2984.3,1376.7 2984.3,1358.3 2986.0,1358.3 2986.0,1388.0 2987.7,1388.0 2987.7,1439.4 2989.4,1439.4 2989.4,1366.9 2991.2,1366.9 2991.2,1399.5 2992.9,1399.5 2992.9,1403.3 2994.6,1403.3 2994.6,1404.6 2996.3,1404.6 2996.3,1406.2 2998.0,1406.2 2998.0,1409.8 2999.7,1409.8 2999.7,1448.3 3001.4,1448.3 3001.4,1420.8 3003.1,1420.8 3003.1,1418.5 3004.8,1418.5 3004.8,1424.3 3006.6,1424.3 3006.6,1432.8 3008.3,1432.8 3008.3,1429.7 3010.0,1429.7 3010.0,1373.1 3011.7,1373.1 3011.7,1442.5 3013.4,1442.5 3013.4,1449.3 3015.1,1449.3 3015.1,1454.3 3016.8,1454.3 3016.8,1455.0 3018.5,1455.0 3018.5,1453.7 3020.3,1453.7 3020.3,1460.9 3022.0,1460.9 3022.0,1469.7 3023.7,1469.7 3023.7,1465.9 3025.4,1465.9 3025.4,1474.5 3027.1,1474.5 3027.1,1474.2 3028.8,1474.2 3028.8,1506.5 3030.5,1506.5 3030.5,1507.5 3032.2,1507.5 3032.2,1507.2 3033.9,1507.2 3033.9,1506.0 3035.7,1506.0 3035.7,1507.1 3037.4,1507.1 3037.4,1309.7 3039.1,1309.7 3039.1,1389.1 3040.8,1389.1 3040.8,1329.3 3042.5,1329.3 3042.5,1343.5 3044.2,1343.5 3044.2,1326.5 3045.9,1326.5 3045.9,1413.1 3047.6,1413.1 3047.6,1408.5 3049.3,1408.5 3049.3,1421.1 3051.1,1421.1 3051.1,1439.1 3052.8,1439.1 3052.8,1434.1 3054.5,1434.1 3054.5,1360.0 3056.2,1360.0 3056.2,1448.0 3057.9,1448.0 3057.9,1376.3 3059.6,1376.3 3059.6,1455.0 3061.3,1455.0 3061.3,1385.9 3063.0,1385.9 3063.0,1388.6 3064.8,1388.6 3064.8,1389.4 3066.5,1389.4 3066.5,1441.6 3068.2,1441.6 3068.2,1438.8 3069.9,1438.8 3069.9,1453.4 3071.6,1453.4 3071.6,1457.4 3073.3,1457.4 3073.3,1458.2 3075.0,1458.2 3075.0,1455.6 3076.7,1455.6 3076.7,1432.3 3078.4,1432.3 3078.4,1431.4 3080.2,1431.4 3080.2,1353.5 3081.9,1353.5 3081.9,1471.9 3083.6,1471.9 3083.6,1447.0 3085.3,1447.0 3085.3,1447.3 3087.0,1447.3 3087.0,1454.2 3088.7,1454.2 3088.7,1458.3 3090.4,1458.3 3090.4,1459.7 3092.1,1459.7 3092.1,1464.6 3093.8,1464.6 3093.8,1489.6 3095.6,1489.6 3095.6,1478.7 3097.3,1478.7 3097.3,1490.8 3099.0,1490.8 3099.0,1507.8 3100.7,1507.8 3100.7,1506.9 3102.4,1506.9 3102.4,1508.1 3104.1,1508.1 3104.1,1508.7 3105.8,1508.7 3105.8,1506.9 3107.5,1506.9 3107.5,1418.0 3109.3,1418.0 3109.3,1296.0 3111.0,1296.0 3111.0,1443.9 3112.7,1443.9 3112.7,1303.9 3114.4,1303.9 3114.4,1413.0 3116.1,1413.0 3116.1,1326.2 3117.8,1326.2 3117.8,1328.1 3119.5,1328.1 3119.5,1355.4 3121.2,1355.4 3121.2,1423.9 3122.9,1423.9 3122.9,1440.9 3124.7,1440.9 3124.7,1452.6 3126.4,1452.6 3126.4,1366.7 3128.1,1366.7 3128.1,1450.1 3129.8,1450.1 3129.8,1301.7 3131.5,1301.7 3131.5,1386.5 3133.2,1386.5 3133.2,1466.7 3134.9,1466.7 3134.9,1390.7 3136.6,1390.7 3136.6,1472.9 3138.3,1472.9 3138.3,1452.1 3140.1,1452.1 3140.1,1458.0 3141.8,1458.0 3141.8,1416.4 3143.5,1416.4 3143.5,1340.0 3145.2,1340.0 3145.2,1458.2 3146.9,1458.2 3146.9,1429.6 3148.6,1429.6 3148.6,1437.2 3150.3,1437.2 3150.3,1441.7 3152.0,1441.7 3152.0,1473.9 3153.8,1473.9 3153.8,1456.4 3155.5,1456.4 3155.5,1357.8 3157.2,1357.8 3157.2,1458.9 3158.9,1458.9 3158.9,1465.7 3160.6,1465.7 3160.6,1389.9 3162.3,1389.9 3162.3,1471.9 3164.0,1471.9 3164.0,1507.6 3165.7,1507.6 3165.7,1506.0 3167.4,1506.0 3167.4,1506.8 3169.2,1506.8 3169.2,1383.3 3170.9,1383.3 3170.9,1505.7 3172.6,1505.7 3172.6,1365.3 3174.3,1365.3 3174.3,1425.5 3176.0,1425.5 3176.0,1459.8 3176.0,1521.0" fill="#7eb26d" fill-opacity="0.1"/>
<polyline points="1942.0,1508.8 1943.7,1508.8 1943.7,1508.8 1945.4,1508.8 1945.4,1506.7 1947.1,1506.7 1947.1,1505.7 1948.8,1505.7 1948.8,1506.6 1950.6,1506.6 1950.6,1307.2 1952.3,1307.2 1952.3,1276.2 1954.0,1276.2 1954.0,1304.1 1955.7,1304.1 1955.7,1324.9 1957.4,1324.9 1957.4,1322.4 1959.1,1322.4 1959.1,1404.2 1960.8,1404.2 1960.8,1339.9 1962.5,1339.9 1962.5,1432.9 1964.2,1432.9 1964.2,1419.9 1966.0,1419.9 1966.0,1428.6 1967.7,1428.6 1967.7,1361.6 1969.4,1361.6 1969.4,1439.6 1971.1,1439.6 1971.1,1245.6 1972.8,1245.6 1972.8,1321.6 1974.5,1321.6 1974.5,1442.7 1976.2,1442.7 1976.2,1451.2 1977.9,1451.2 1977.9,1463.5 1979.7,1463.5 1979.7,1430.6 1981.4,1430.6 1981.4,1465.8 1983.1,1465.8 1983.1,1460.1 1984.8,1460.1 1984.8,1375.6 1986.5,1375.6 1986.5,1415.1 1988.2,1415.1 1988.2,1416.5 1989.9,1416.5 1989.9,1380.4 1991.6,1380.4 1991.6,1426.7 1993.3,1426.7 1993.3,1431.4 1995.1,1431.4 1995.1,1437.6 1996.8,1437.6 1996.8,1438.7 1998.5,1438.7 1998.5,1445.8 2000.2,1445.8 2000.2,1471.8 2001.9,1471.8 2001.9,1475.8 2003.6,1475.8 2003.6,1455.0 2005.3,1455.0 2005.3,1461.2 2007.0,1461.2 2007.0,1465.3 2008.7,1465.3 2008.7,1380.9 2010.5,1380.9 2010.5,1473.0 2012.2,1473.0 2012.2,1506.4 2013.9,1506.4 2013.9,1506.3 2015.6,1506.3 2015.6,1506.4 2017.3,1506.4 2017.3,1507.7 2019.0,1507.7 2019.0,1344.3 2020.7,1344.3 2020.7,1425.7 2022.4,1425.7 2022.4,1434.2 2024.2,1434.2 2024.2,1435.0 2025.9,1435.0 2025.9,1454.7 2027.6,1454.7 2027.6,1429.3 2029.3,1429.3 2029.3,1348.7 2031.0,1348.7 2031.0,1418.0 2032.7,1418.0 2032.7,1371.1 2034.4,1371.1 2034.4,1423.8 2036.1,1423.8 2036.1,1450.6 2037.8,1450.6 2037.8,1448.6 2039.6,1448.6 2039.6,1442.2 2041.3,1442.2 2041.3,1376.2 2043.0,1376.2 2043.0,1438.4 2044.7,1438.4 2044.7,1402.7 2046.4,1402.7 2046.4,1473.5 2048.1,1473.5 2048.1,1460.2 2049.8,1460.2 2049.8,1453.1 2051.5,1453.1 2051.5,1418.6 2053.2,1418.6 2053.2,1410.3 2055.0,1410.3 2055.0,1424.6 2056.7,1424.6 2056.7,1422.2 2058.4,1422.2 2058.4,1360.2 2060.1,1360.2 2060.1,1432.9 2061.8,1432.9 2061.8,1438.5 2063.5,1438.5 2063.5,1435.7 2065.2,1435.7 2065.2,1444.5 2066.9,1444.5 2066.9,1475.6 2068.7,1475.6 2068.7,1417.6 2070.4,1417.6 2070.4,1452.5 2072.1,1452.5 2072.1,1457.4 2073.8,1457.4 2073.8,1457.7 2075.5,1457.7 2075.5,1459.0 2077.2,1459.0 2077.2,1470.2 2078.9,1470.2 2078.9,1487.6 2080.6,1487.6 2080.6,1469.6 2082.3,1469.6 2082.3,1475.5 2084.1,1475.5 2084.1,1475.1 2085.8,1475.1 2085.8,1506.7 2087.5,1506.7 2087.5,1505.9 2089.2,1505.9 2089.2,1507.8 2090.9,1507.8 2090.9,1506.4 2092.6,1506.4 2092.6,1508.2 2094.3,1508.2 2094.3,1451.0 2096.0,1451.0 2096.0,1315.3 2097.7,1315.3 2097.7,1333.3 2099.5,1333.3 2099.5,1332.3 2101.2,1332.3 2101.2,1447.9 2102.9,1447.9 2102.9,1412.4 2104.6,1412.4 2104.6,1451.4 2106.3,1451.4 2106.3,1422.3 2108.0,1422.3 2108.0,1452.5 2109.7,1452.5 2109.7,1454.7 2111.4,1454.7 2111.4,1351.2 2113.2,1351.2 2113.2,1461.1 2114.9,1461.1 2114.9,1355.8 2116.6,1355.8 2116.6,1473.8 2118.3,1473.8 2118.3,1389.5 2120.0,1389.5 2120.0,1444.0 2121.7,1444.0 2121.7,1394.0 2123.4,1394.0 2123.4,1402.5 2125.1,1402.5 2125.1,1388.5 2126.8,1388.5 2126.8,1403.7 2128.6,1403.7 2128.6,1406.1 2130.3,1406.1 2130.3,1476.5 2132.0,1476.5 2132.0,1394.7 2133.7,1394.7 2133.7,1384.0 2135.4,1384.0 2135.4,1422.8 2137.1,1422.8 2137.1,1468.3 2138.8,1468.3 2138.8,1430.3 2140.5,1430.3 2140.5,1440.1 2142.2,1440.1 2142.2,1441.1 2144.0,1441.1 2144.0,1448.4 2145.7,1448.4 2145.7,1448.6 2147.4,1448.6 2147.4,1449.0 2149.1,1449.0 2149.1,1457.7 2150.8,1457.7 2150.8,1483.1 2152.5,1483.1 2152.5,1466.4 2154.2,1466.4 2154.2,1482.5 2155.9,1482.5 2155.9,1471.4 2157.7,1471.4 2157.7,1474.2 2159.4,1474.2 2159.4,1507.8 2161.1,1507.8 2161.1,1508.6 2162.8,1508.6 2162.8,1507.4 2164.5,1507.4 2164.5,1506.4 2166.2,1506.4 2166.2,1506.8 2167.9,1506.8 2167.9,1506.0 2169.6,1506.0 2169.6,1413.0 2171.3,1413.0 2171.3,1352.0 2173.1,1352.0 2173.1,1356.0 2174.8,1356.0 2174.8,1456.0 2176.5,1456.0 2176.5,1462.4 2178.2,1462.4 2178.2,1465.6 2179.9,1465.6 2179.9,1306.8 2181.6,1306.8 2181.6,1372.5 2183.3,1372.5 2183.3,1435.9 2185.0,1435.9 2185.0,1468.1 2186.7,1468.1 2186.7,1379.6 2188.5,1379.6 2188.5,1360.8 2190.2,1360.8 2190.2,1451.6 2191.9,1451.6 2191.9,1389.7 2193.6,1389.7 2193.6,1400.0 2195.3,1400.0 2195.3,1473.4 2197.0,1473.4 2197.0,1475.3 2198.7,1475.3 2198.7,1479.4 2200.4,1479.4 2200.4,1484.2 2202.1,1484.2 2202.1,1413.2 2203.9,1413.2 2203.9,1417.6 2205.6,1417.6 2205.6,1422.1 2207.3,1422.1 2207.3,1428.1 2209.0,1428.1 2209.0,1426.0 2210.7,1426.0 2210.7,1435.2 2212.4,1435.2 2212.4,1438.7 2214.1,1438.7 2214.1,1472.9 2215.8,1472.9 2215.8,1442.9 2217.6,1442.9 2217.6,1470.1 2219.3,1470.1 2219.3,1444.8 2221.0,1444.8 2221.0,1454.3 2222.7,1454.3 2222.7,1477.6 2224.4,1477.6 2224.4,1456.7 2226.1,1456.7 2226.1,1464.2 2227.8,1464.2 2227.8,1487.7 2229.5,1487.7 2229.5,1470.7 2231.2,1470.7 2231.2,1478.2 2233.0,1478.2 2233.0,1472.6 2234.7,1472.6 2234.7,1508.6 2236.4,1508.6 2236.4,1507.1 2238.1,1507.1 2238.1,1505.8 2239.8,1505.8 2239.8,1508.3 2241.5,1508.3 2241.5,1505.9 2243.2,1505.9 2243.2,1434.9 2244.9,1434.9 2244.9,1446.4 2246.6,1446.4 2246.6,1338.7 2248.4,1338.7 2248.4,1409.2 2250.1,1409.2 2250.1,1331.4 2251.8,1331.4 2251.8,1363.0 2253.5,1363.0 2253.5,1354.3 2255.2,1354.3 2255.2,1366.9 2256.9,1366.9 2256.9,1446.8 2258.6,1446.8 2258.6,1345.9 2260.3,1345.9 2260.3,1375.2 2262.1,1375.2 2262.1,1456.0 2263.8,1456.0 2263.8,1380.4 2265.5,1380.4 2265.5,1451.4 2267.2,1451.4 2267.2,1460.2 2268.9,1460.2 2268.9,1449.4 2270.6,1449.4 2270.6,1373.5 2272.3,1373.5 2272.3,1404.0 2274.0,1404.0 2274.0,1457.4 2275.7,1457.4 2275.7,1463.6 2277.5,1463.6 2277.5,1420.9 2279.2,1420.9 2279.2,1481.7 2280.9,1481.7 2280.9,1412.8 2282.6,1412.8 2282.6,1420.7 2284.3,1420.7 2284.3,1375.5 2286.0,1375.5 2286.0,1434.4 2287.7,1434.4 2287.7,1266.0 2289.4,1266.0 2289.4,1439.6 2291.1,1439.6 2291.1,1445.2 2292.9,1445.2 2292.9,1448.4 2294.6,1448.4 2294.6,1450.9 2296.3,1450.9 2296.3,1371.3 2298.0,1371.3 2298.0,1457.6 2299.7,1457.6 2299.7,1463.3 2301.4,1463.3 2301.4,1469.4 2303.1,1469.4 2303.1,1487.2 2304.8,1487.2 2304.8,1479.1 2306.6,1479.1 2306.6,1477.0 2308.3,1477.0 2308.3,1507.7 2310.0,1507.7 2310.0,1506.8 2311.7,1506.8 2311.7,1508.2 2313.4,1508.2 2313.4,1506.8 2315.1,1506.8 2315.1,1505.7 2316.8,1505.7 2316.8,1507.8 2318.5,1507.8 2318.5,1270.0 2320.2,1270.0 2320.2,1318.7 2322.0,1318.7 2322.0,1320.9 2323.7,1320.9 2323.7,1333.4 2325.4,1333.4 2325.4,1439.4 2327.1,1439.4 2327.1,1288.3 2328.8,1288.3 2328.8,1345.5 2330.5,1345.5 2330.5,1348.9 2332.2,1348.9 2332.2,1462.5 2333.9,1462.5 2333.9,1454.8 2335.6,1454.8 2335.6,1366.5 2337.4,1366.5 2337.4,1358.8 2339.1,1358.8 2339.1,1360.5 2340.8,1360.5 2340.8,1456.6 2342.5,1456.6 2342.5,1317.7 2344.2,1317.7 2344.2,1387.1 2345.9,1387.1 2345.9,1384.5 2347.6,1384.5 2347.6,1399.6 2349.3,1399.6 2349.3,1394.4 2351.1,1394.4 2351.1,1404.5 2352.8,1404.5 2352.8,1407.3 2354.5,1407.3 2354.5,1329.8 2356.2,1329.8 2356.2,1330.0 2357.9,1330.0 2357.9,1461.5 2359.6,1461.5 2359.6,1422.1 2361.3,1422.1 2361.3,1432.4 2363.0,1432.4 2363.0,1430.3 2364.7,1430.3 2364.7,1436.1 2366.5,1436.1 2366.5,1473.1 2368.2,1473.1 2368.2,1442.0 2369.9,1442.0 2369.9,1477.4 2371.6,1477.4 2371.6,1454.4 2373.3,1454.4 2373.3,1455.2 2375.0,1455.2 2375.0,1464.5 2376.7,1464.5 2376.7,1403.2 2378.4,1403.2 2378.4,1469.1 2380.1,1469.1 2380.1,1467.8 2381.9,1467.8 2381.9,1468.9 2383.6,1468.9 2383.6,1506.9 2385.3,1506.9 2385.3,1506.5 2387.0,1506.5 2387.0,1506.1 2388.7,1506.1 2388.7,1508.1 2390.4,1508.1 2390.4,1508.4 2392.1,1508.4 2392.1,1305.3 2393.8,1305.3 2393.8,1325.5 2395.6,1325.5 2395.6,1395.7 2397.3,1395.7 2397.3,1326.2 2399.0,1326.2 2399.0,1397.5 2400.7,1397.5 2400.7,1220.1 2402.4,1220.1 2402.4,1299.1 2404.1,1299.1 2404.1,1417.0 2405.8,1417.0 2405.8,1361.1 2407.5,1361.1 2407.5,1364.5 2409.2,1364.5 2409.2,1394.3 2411.0,1394.3 2411.0,1361.1 2412.7,1361.1 2412.7,1313.9 2414.4,1313.9 2414.4,1373.9 2416.1,1373.9 2416.1,1447.5 2417.8,1447.5 2417.8,1377.6 2419.5,1377.6 2419.5,1429.2 2421.2,1429.2 2421.2,1404.5 2422.9,1404.5 2422.9,1446.3 2424.6,1446.3 2424.6,1411.3 2426.4,1411.3 2426.4,1453.3 2428.1,1453.3 2428.1,1418.5 2429.8,1418.5 2429.8,1421.7 2431.5,1421.7 2431.5,1421.1 2433.2,1421.1 2433.2,1435.6 2434.9,1435.6 2434.9,1442.2 2436.6,1442.2 2436.6,1443.1 2438.3,1443.1 2438.3,1445.5 2440.0,1445.5 2440.0,1445.4 2441.8,1445.4 2441.8,1453.5 2443.5,1453.5 2443.5,1456.3 2445.2,1456.3 2445.2,1460.6 2446.9,1460.6 2446.9,1468.5 2448.6,1468.5 2448.6,1470.6 2450.3,1470.6 2450.3,1476.8 2452.0,1476.8 2452.0,1506.4 2453.7,1506.4 2453.7,1507.6 2455.5,1507.6 2455.5,1506.6 2457.2,1506.6 2457.2,1508.0 2458.9,1508.0 2458.9,1505.7 2460.6,1505.7 2460.6,1384.6 2462.3,1384.6 2462.3,1341.1 2464.0,1341.1 2464.0,1408.3 2465.7,1408.3 2465.7,1346.7 2467.4,1346.7 2467.4,1322.6 2469.1,1322.6 2469.1,1225.2 2470.9,1225.2 2470.9,1416.9 2472.6,1416.9 2472.6,1220.1 2474.3,1220.1 2474.3,1424.1 2476.0,1424.1 2476.0,1348.5 2477.7,1348.5 2477.7,1353.4 2479.4,1353.4 2479.4,1378.6 2481.1,1378.6 2481.1,1378.7 2482.8,1378.7 2482.8,1340.8 2484.5,1340.8 2484.5,1435.2 2486.3,1435.2 2486.3,1457.7 2488.0,1457.7 2488.0,1408.7 2489.7,1408.7 2489.7,1465.6 2491.4,1465.6 2491.4,1403.0 2493.1,1403.0 2493.1,1468.6 2494.8,1468.6 2494.8,1420.0 2496.5,1420.0 2496.5,1424.4 2498.2,1424.4 2498.2,1429.3 2500.0,1429.3 2500.0,1436.1 2501.7,1436.1 2501.7,1434.8 2503.4,1434.8 2503.4,1441.1 2505.1,1441.1 2505.1,1448.5 2506.8,1448.5 2506.8,1385.7 2508.5,1385.7 2508.5,1450.3 2510.2,1450.3 2510.2,1458.6 2511.9,1458.6 2511.9,1460.4 2513.6,1460.4 2513.6,1467.5 2515.4,1467.5 2515.4,1470.1 2517.1,1470.1 2517.1,1471.0 2518.8,1471.0 2518.8,1478.3 2520.5,1478.3 2520.5,1506.3 2522.2,1506.3 2522.2,1506.7 2523.9,1506.7 2523.9,1506.1 2525.6,1506.1 2525.6,1508.0 2527.3,1508.0 2527.3,1508.5 2529.0,1508.5 2529.0,1328.9 2530.8,1328.9 2530.8,1312.5 2532.5,1312.5 2532.5,1324.4 2534.2,1324.4 2534.2,1332.4 2535.9,1332.4 2535.9,1307.8 2537.6,1307.8 2537.6,1321.7 2539.3,1321.7 2539.3,1332.3 2541.0,1332.3 2541.0,1441.0 2542.7,1441.0 2542.7,1341.9 2544.5,1341.9 2544.5,1438.5 2546.2,1438.5 2546.2,1370.0 2547.9,1370.0 2547.9,1427.6 2549.6,1427.6 2549.6,1378.8 2551.3,1378.8 2551.3,1443.0 2553.0,1443.0 2553.0,1450.2 2554.7,1450.2 2554.7,1388.1 2556.4,1388.1 2556.4,1443.4 2558.1,1443.4 2558.1,1400.2 2559.9,1400.2 2559.9,1296.6 2561.6,1296.6 2561.6,1440.2 2563.3,1440.2 2563.3,1404.0 2565.0,1404.0 2565.0,1351.8 2566.7,1351.8 2566.7,1412.6 2568.4,1412.6 2568.4,1420.5 2570.1,1420.5 2570.1,1418.3 2571.8,1418.3 2571.8,1422.1 2573.5,1422.1 2573.5,1433.2 2575.3,1433.2 2575.3,1430.2 2577.0,1430.2 2577.0,1468.2 2578.7,1468.2 2578.7,1443.9 2580.4,1443.9 2580.4,1440.2 2582.1,1440.2 2582.1,1470.7 2583.8,1470.7 2583.8,1452.6 2585.5,1452.6 2585.5,1448.5 2587.2,1448.5 2587.2,1455.7 2589.0,1455.7 2589.0,1457.0 2590.7,1457.0 2590.7,1484.3 2592.4,1484.3 2592.4,1470.0 2594.1,1470.0 2594.1,1476.3 2595.8,1476.3 2595.8,1488.6 2597.5,1488.6 2597.5,1413.4 2599.2,1413.4 2599.2,1507.9 2600.9,1507.9 2600.9,1506.3 2602.6,1506.3 2602.6,1508.5 2604.4,1508.5 2604.4,1506.8 2606.1,1506.8 2606.1,1507.4 2607.8,1507.4 2607.8,1339.2 2609.5,1339.2 2609.5,1452.8 2611.2,1452.8 2611.2,1443.8 2612.9,1443.8 2612.9,1310.9 2614.6,1310.9 2614.6,1460.5 2616.3,1460.5 2616.3,1469.7 2618.0,1469.7 2618.0,1436.3 2619.8,1436.3 2619.8,1438.6 2621.5,1438.6 2621.5,1436.0 2623.2,1436.0 2623.2,1454.5 2624.9,1454.5 2624.9,1373.6 2626.6,1373.6 2626.6,1369.0 2628.3,1369.0 2628.3,1372.7 2630.0,1372.7 2630.0,1460.1 2631.7,1460.1 2631.7,1481.6 2633.5,1481.6 2633.5,1464.2 2635.2,1464.2 2635.2,1406.8 2636.9,1406.8 2636.9,1404.9 2638.6,1404.9 2638.6,1410.3 2640.3,1410.3 2640.3,1448.5 2642.0,1448.5 2642.0,1419.8 2643.7,1419.8 2643.7,1425.2 2645.4,1425.2 2645.4,1427.6 2647.1,1427.6 2647.1,1426.2 2648.9,1426.2 2648.9,1435.2 2650.6,1435.2 2650.6,1438.5 2652.3,1438.5 2652.3,1446.2 2654.0,1446.2 2654.0,1444.2 2655.7,1444.2 2655.7,1444.0 2657.4,1444.0 2657.4,1451.5 2659.1,1451.5 2659.1,1458.5 2660.8,1458.5 2660.8,1484.5 2662.5,1484.5 2662.5,1484.9 2664.3,1484.9 2664.3,1291.5 2666.0,1291.5 2666.0,1466.4 2667.7,1466.4 2667.7,1469.8 2669.4,1469.8 2669.4,1426.3 2671.1,1426.3 2671.1,1482.1 2672.8,1482.1 2672.8,1482.8 2674.5,1482.8 2674.5,1508.5 2676.2,1508.5 2676.2,1505.7 2678.0,1505.7 2678.0,1507.4 2679.7,1507.4 2679.7,1508.6 2681.4,1508.6 2681.4,1506.9 2683.1,1506.9 2683.1,1428.6 2684.8,1428.6 2684.8,1347.4 2686.5,1347.4 2686.5,1352.2 2688.2,1352.2 2688.2,1446.8 2689.9,1446.8 2689.9,1464.6 2691.6,1464.6 2691.6,1364.2 2693.4,1364.2 2693.4,1441.9 2695.1,1441.9 2695.1,1368.1 2696.8,1368.1 2696.8,1466.6 2698.5,1466.6 2698.5,1462.8 2700.2,1462.8 2700.2,1443.8 2701.9,1443.8 2701.9,1447.4 2703.6,1447.4 2703.6,1469.9 2705.3,1469.9 2705.3,1477.1 2707.0,1477.1 2707.0,1411.9 2708.8,1411.9 2708.8,1417.8 2710.5,1417.8 2710.5,1421.1 2712.2,1421.1 2712.2,1421.0 2713.9,1421.0 2713.9,1425.2 2715.6,1425.2 2715.6,1429.3 2717.3,1429.3 2717.3,1435.9 2719.0,1435.9 2719.0,1436.7 2720.7,1436.7 2720.7,1440.5 2722.4,1440.5 2722.4,1373.2 2724.2,1373.2 2724.2,1472.1 2725.9,1472.1 2725.9,1452.9 2727.6,1452.9 2727.6,1461.2 2729.3,1461.2 2729.3,1468.4 2731.0,1468.4 2731.0,1468.1 2732.7,1468.1 2732.7,1467.6 2734.4,1467.6 2734.4,1419.1 2736.1,1419.1 2736.1,1476.0 2737.9,1476.0 2737.9,1480.3 2739.6,1480.3 2739.6,1506.3 2741.3,1506.3 2741.3,1506.1 2743.0,1506.1 2743.0,1505.9 2744.7,1505.9 2744.7,1508.5 2746.4,1508.5 2746.4,1317.8 2748.1,1317.8 2748.1,1267.2 2749.8,1267.2 2749.8,1277.2 2751.5,1277.2 2751.5,1423.5 2753.3,1423.5 2753.3,1315.2 2755.0,1315.2 2755.0,1324.5 2756.7,1324.5 2756.7,1399.3 2758.4,1399.3 2758.4,1404.3 2760.1,1404.3 2760.1,1408.6 2761.8,1408.6 2761.8,1425.0 2763.5,1425.0 2763.5,1428.9 2765.2,1428.9 2765.2,1364.2 2766.9,1364.2 2766.9,1405.9 2768.7,1405.9 2768.7,1418.4 2770.4,1418.4 2770.4,1389.0 2772.1,1389.0 2772.1,1356.8 2773.8,1356.8 2773.8,1446.5 2775.5,1446.5 2775.5,1447.1 2777.2,1447.1 2777.2,1405.3 2778.9,1405.3 2778.9,1438.4 2780.6,1438.4 2780.6,1406.3 2782.4,1406.3 2782.4,1455.7 2784.1,1455.7 2784.1,1413.8 2785.8,1413.8 2785.8,1419.4 2787.5,1419.4 2787.5,1426.8 2789.2,1426.8 2789.2,1429.6 2790.9,1429.6 2790.9,1428.8 2792.6,1428.8 2792.6,1434.0 2794.3,1434.0 2794.3,1401.5 2796.0,1401.5 2796.0,1444.1 2797.8,1444.1 2797.8,1445.2 2799.5,1445.2 2799.5,1452.4 2801.2,1452.4 2801.2,1457.6 2802.9,1457.6 2802.9,1484.8 2804.6,1484.8 2804.6,1390.0 2806.3,1390.0 2806.3,1464.1 2808.0,1464.1 2808.0,1465.2 2809.7,1465.2 2809.7,1468.1 2811.4,1468.1 2811.4,1471.6 2813.2,1471.6 2813.2,1505.9 2814.9,1505.9 2814.9,1506.3 2816.6,1506.3 2816.6,1505.8 2818.3,1505.8 2818.3,1306.8 2820.0,1306.8 2820.0,1506.7 2821.7,1506.7 2821.7,1505.7 2823.4,1505.7 2823.4,1280.3 2825.1,1280.3 2825.1,1400.3 2826.9,1400.3 2826.9,1313.1 2828.6,1313.1 2828.6,1410.9 2830.3,1410.9 2830.3,1418.8 2832.0,1418.8 2832.0,1317.9 2833.7,1317.9 2833.7,1331.1 2835.4,1331.1 2835.4,1414.3 2837.1,1414.3 2837.1,1419.7 2838.8,1419.7 2838.8,1356.6 2840.5,1356.6 2840.5,1309.3 2842.3,1309.3 2842.3,1427.9 2844.0,1427.9 2844.0,1439.0 2845.7,1439.0 2845.7,1377.1 2847.4,1377.1 2847.4,1359.8 2849.1,1359.8 2849.1,1327.6 2850.8,1327.6 2850.8,1464.8 2852.5,1464.8 2852.5,1388.3 2854.2,1388.3 2854.2,1396.0 2855.9,1396.0 2855.9,1406.0 2857.7,1406.0 2857.7,1408.9 2859.4,1408.9 2859.4,1413.3 2861.1,1413.3 2861.1,1415.6 2862.8,1415.6 2862.8,1425.4 2864.5,1425.4 2864.5,1364.4 2866.2,1364.4 2866.2,1432.8 2867.9,1432.8 2867.9,1437.5 2869.6,1437.5 2869.6,1439.3 2871.4,1439.3 2871.4,1443.8 2873.1,1443.8 2873.1,1445.4 2874.8,1445.4 2874.8,1454.2 2876.5,1454.2 2876.5,1457.0 2878.2,1457.0 2878.2,1461.7 2879.9,1461.7 2879.9,1462.5 2881.6,1462.5 2881.6,1489.9 2883.3,1489.9 2883.3,1475.8 2885.0,1475.8 2885.0,1507.8 2886.8,1507.8 2886.8,1506.3 2888.5,1506.3 2888.5,1506.0 2890.2,1506.0 2890.2,1507.2 2891.9,1507.2 2891.9,1508.4 2893.6,1508.4 2893.6,1325.4 2895.3,1325.4 2895.3,1325.0 2897.0,1325.0 2897.0,1398.9 2898.7,1398.9 2898.7,1301.7 2900.4,1301.7 2900.4,1277.0 2902.2,1277.0 2902.2,1401.0 2903.9,1401.0 2903.9,1345.8 2905.6,1345.8 2905.6,1306.8 2907.3,1306.8 2907.3,1420.8 2909.0,1420.8 2909.0,1370.0 2910.7,1370.0 2910.7,1402.2 2912.4,1402.2 2912.4,1430.1 2914.1,1430.1 2914.1,1415.0 2915.9,1415.0 2915.9,1366.7 2917.6,1366.7 2917.6,1388.7 2919.3,1388.7 2919.3,1390.3 2921.0,1390.3 2921.0,1449.3 2922.7,1449.3 2922.7,1378.8 2924.4,1378.8 2924.4,1462.3 2926.1,1462.3 2926.1,1464.4 2927.8,1464.4 2927.8,1444.8 2929.5,1444.8 2929.5,1417.6 2931.3,1417.6 2931.3,1333.6 2933.0,1333.6 2933.0,1369.1 2934.7,1369.1 2934.7,1429.2 2936.4,1429.2 2936.4,1441.2 2938.1,1441.2 2938.1,1440.7 2939.8,1440.7 2939.8,1471.6 2941.5,1471.6 2941.5,1449.0 2943.2,1449.0 2943.2,1454.9 2944.9,1454.9 2944.9,1459.2 2946.7,1459.2 2946.7,1460.6 2948.4,1460.6 2948.4,1408.7 2950.1,1408.7 2950.1,1470.5 2951.8,1470.5 2951.8,1470.2 2953.5,1470.2 2953.5,1479.9 2955.2,1479.9 2955.2,1506.2 2956.9,1506.2 2956.9,1506.0 2958.6,1506.0 2958.6,1506.5 2960.3,1506.5 2960.3,1506.3 2962.1,1506.3 2962.1,1312.2 2963.8,1312.2 2963.8,1294.8 2965.5,1294.8 2965.5,1317.6 2967.2,1317.6 2967.2,1383.8 2968.9,1383.8 2968.9,1342.9 2970.6,1342.9 2970.6,1345.1 2972.3,1345.1 2972.3,1406.0 2974.0,1406.0 2974.0,1409.3 2975.8,1409.3 2975.8,1407.2 2977.5,1407.2 2977.5,1365.3 2979.2,1365.3 2979.2,1365.4 2980.9,1365.4 2980.9,1361.1 2982.6,1361.1 2982.6,1376.7 2984.3,1376.7 2984.3,1358.3 2986.0,1358.3 2986.0,1388.0 2987.7,1388.0 2987.7,1439.4 2989.4,1439.4 2989.4,1366.9 2991.2,1366.9 2991.2,1399.5 2992.9,1399.5 2992.9,1403.3 2994.6,1403.3 2994.6,1404.6 2996.3,1404.6 2996.3,1406.2 2998.0,1406.2 2998.0,1409.8 2999.7,1409.8 2999.7,1448.3 3001.4,1448.3 3001.4,1420.8 3003.1,1420.8 3003.1,1418.5 3004.8,1418.5 3004.8,1424.3 3006.6,1424.3 3006.6,1432.8 3008.3,1432.8 3008.3,1429.7 3010.0,1429.7 3010.0,1373.1 3011.7,1373.1 3011.7,1442.5 3013.4,1442.5 3013.4,1449.3 3015.1,1449.3 3015.1,1454.3 3016.8,1454.3 3016.8,1455.0 3018.5,1455.0 3018.5,1453.7 3020.3,1453.7 3020.3,1460.9 3022.0,1460.9 3022.0,1469.7 3023.7,1469.7 3023.7,1465.9 3025.4,1465.9 3025.4,1474.5 3027.1,1474.5 3027.1,1474.2 3028.8,1474.2 3028.8,1506.5 3030.5,1506.5 3030.5,1507.5 3032.2,1507.5 3032.2,1507.2 3033.9,1507.2 3033.9,1506.0 3035.7,1506.0 3035.7,1507.1 3037.4,1507.1 3037.4,1309.7 3039.1,1309.7 3039.1,1389.1 3040.8,1389.1 3040.8,1329.3 3042.5,1329.3 3042.5,1343.5 3044.2,1343.5 3044.2,1326.5 3045.9,1326.5 3045.9,1413.1 3047.6,1413.1 3047.6,1408.5 3049.3,1408.5 3049.3,1421.1 3051.1,1421.1 3051.1,1439.1 3052.8,1439.1 3052.8,1434.1 3054.5,1434.1 3054.5,1360.0 3056.2,1360.0 3056.2,1448.0 3057.9,1448.0 3057.9,1376.3 3059.6,1376.3 3059.6,1455.0 3061.3,1455.0 3061.3,1385.9 3063.0,1385.9 3063.0,1388.6 3064.8,1388.6 3064.8,1389.4 3066.5,1389.4 3066.5,1441.6 3068.2,1441.6 3068.2,1438.8 3069.9,1438.8 3069.9,1453.4 3071.6,1453.4 3071.6,1457.4 3073.3,1457.4 3073.3,1458.2 3075.0,1458.2 3075.0,1455.6 3076.7,1455.6 3076.7,1432.3 3078.4,1432.3 3078.4,1431.4 3080.2,1431.4 3080.2,1353.5 3081.9,1353.5 3081.9,1471.9 3083.6,1471.9 3083.6,1447.0 3085.3,1447.0 3085.3,1447.3 3087.0,1447.3 3087.0,1454.2 3088.7,1454.2 3088.7,1458.3 3090.4,1458.3 3090.4,1459.7 3092.1,1459.7 3092.1,1464.6 3093.8,1464.6 3093.8,1489.6 3095.6,1489.6 3095.6,1478.7 3097.3,1478.7 3097.3,1490.8 3099.0,1490.8 3099.0,1507.8 3100.7,1507.8 3100.7,1506.9 3102.4,1506.9 3102.4,1508.1 3104.1,1508.1 3104.1,1508.7 3105.8,1508.7 3105.8,1506.9 3107.5,1506.9 3107.5,1418.0 3109.3,1418.0 3109.3,1296.0 3111.0,1296.0 3111.0,1443.9 3112.7,1443.9 3112.7,1303.9 3114.4,1303.9 3114.4,1413.0 3116.1,1413.0 3116.1,1326.2 3117.8,1326.2 3117.8,1328.1 3119.5,1328.1 3119.5,1355.4 3121.2,1355.4 3121.2,1423.9 3122.9,1423.9 3122.9,1440.9 3124.7,1440.9 3124.7,1452.6 3126.4,1452.6 3126.4,1366.7 3128.1,1366.7 3128.1,1450.1 3129.8,1450.1 3129.8,1301.7 3131.5,1301.7 3131.5,1386.5 3133.2,1386.5 3133.2,1466.7 3134.9,1466.7 3134.9,1390.7 3136.6,1390.7 3136.6,1472.9 3138.3,1472.9 3138.3,1452.1 3140.1,1452.1 3140.1,1458.0 3141.8,1458.0 3141.8,1416.4 3143.5,1416.4 3143.5,1340.0 3145.2,1340.0 3145.2,1458.2 3146.9,1458.2 3146.9,1429.6 3148.6,1429.6 3148.6,1437.2 3150.3,1437.2 3150.3,1441.7 3152.0,1441.7 3152.0,1473.9 3153.8,1473.9 3153.8,1456.4 3155.5,1456.4 3155.5,1357.8 3157.2,1357.8 3157.2,1458.9 3158.9,1458.9 3158.9,1465.7 3160.6,1465.7 3160.6,1389.9 3162.3,1389.9 3162.3,1471.9 3164.0,1471.9 3164.0,1507.6 3165.7,1507.6 3165.7,1506.0 3167.4,1506.0 3167.4,1506.8 3169.2,1506.8 3169.2,1383.3 3170.9,1383.3 3170.9,1505.7 3172.6,1505.7 3172.6,1365.3 3174.3,1365.3 3174.3,1425.5 3176.0,1425.5 3176.0,1459.8" fill="none" stroke="#7eb26d" stroke-width="2.1" stroke-linejoin="miter"/>
<polygon points="1942.0,1521.0 1942.0,1501.5 1943.7,1501.5 1943.7,1504.2 1945.4,1504.2 1945.4,1362.3 1947.1,1362.3 1947.1,1375.8 1948.8,1375.8 1948.8,1308.0 1950.6,1308.0 1950.6,1429.8 1952.3,1429.8 1952.3,1416.3 1954.0,1416.3 1954.0,1312.7 1955.7,1312.7 1955.7,1340.4 1957.4,1340.4 1957.4,1316.3 1959.1,1316.3 1959.1,1350.3 1960.8,1350.3 1960.8,1347.5 1962.5,1347.5 1962.5,1430.0 1964.2,1430.0 1964.2,1427.9 1966.0,1427.9 1966.0,1429.3 1967.7,1429.3 1967.7,1439.1 1969.4,1439.1 1969.4,1365.4 1971.1,1365.4 1971.1,1432.6 1972.8,1432.6 1972.8,1393.2 1974.5,1393.2 1974.5,1387.7 1976.2,1387.7 1976.2,1467.4 1977.9,1467.4 1977.9,1351.8 1979.7,1351.8 1979.7,1409.0 1981.4,1409.0 1981.4,1415.5 1983.1,1415.5 1983.1,1417.1 1984.8,1417.1 1984.8,1425.7 1986.5,1425.7 1986.5,1431.6 1988.2,1431.6 1988.2,1443.3 1989.9,1443.3 1989.9,1441.3 1991.6,1441.3 1991.6,1451.9 1993.3,1451.9 1993.3,1455.4 1995.1,1455.4 1995.1,1455.6 1996.8,1455.6 1996.8,1463.9 1998.5,1463.9 1998.5,1467.0 2000.2,1467.0 2000.2,1469.5 2001.9,1469.5 2001.9,1473.3 2003.6,1473.3 2003.6,1476.4 2005.3,1476.4 2005.3,1480.9 2007.0,1480.9 2007.0,1485.4 2008.7,1485.4 2008.7,1494.0 2010.5,1494.0 2010.5,1492.5 2012.2,1492.5 2012.2,1499.3 2013.9,1499.3 2013.9,1506.8 2015.6,1506.8 2015.6,1425.9 2017.3,1425.9 2017.3,1446.0 2019.0,1446.0 2019.0,1356.5 2020.7,1356.5 2020.7,1339.2 2022.4,1339.2 2022.4,1344.6 2024.2,1344.6 2024.2,1443.2 2025.9,1443.2 2025.9,1458.0 2027.6,1458.0 2027.6,1368.3 2029.3,1368.3 2029.3,1375.9 2031.0,1375.9 2031.0,1336.7 2032.7,1336.7 2032.7,1448.3 2034.4,1448.3 2034.4,1392.5 2036.1,1392.5 2036.1,1442.7 2037.8,1442.7 2037.8,1367.4 2039.6,1367.4 2039.6,1399.4 2041.3,1399.4 2041.3,1472.7 2043.0,1472.7 2043.0,1452.0 2044.7,1452.0 2044.7,1397.7 2046.4,1397.7 2046.4,1412.9 2048.1,1412.9 2048.1,1406.4 2049.8,1406.4 2049.8,1281.3 2051.5,1281.3 2051.5,1430.2 2053.2,1430.2 2053.2,1433.9 2055.0,1433.9 2055.0,1439.9 2056.7,1439.9 2056.7,1439.1 2058.4,1439.1 2058.4,1446.2 2060.1,1446.2 2060.1,1445.6 2061.8,1445.6 2061.8,1455.4 2063.5,1455.4 2063.5,1454.8 2065.2,1454.8 2065.2,1456.0 2066.9,1456.0 2066.9,1407.7 2068.7,1407.7 2068.7,1460.9 2070.4,1460.9 2070.4,1471.3 2072.1,1471.3 2072.1,1475.6 2073.8,1475.6 2073.8,1475.9 2075.5,1475.9 2075.5,1476.6 2077.2,1476.6 2077.2,1497.5 2078.9,1497.5 2078.9,1490.5 2080.6,1490.5 2080.6,1491.9 2082.3,1491.9 2082.3,1489.8 2084.1,1489.8 2084.1,1505.5 2085.8,1505.5 2085.8,1495.9 2087.5,1495.9 2087.5,1215.0 2089.2,1215.0 2089.2,1325.6 2090.9,1325.6 2090.9,1445.7 2092.6,1445.7 2092.6,1455.7 2094.3,1455.7 2094.3,1335.8 2096.0,1335.8 2096.0,1417.9 2097.7,1417.9 2097.7,1340.0 2099.5,1340.0 2099.5,1438.0 2101.2,1438.0 2101.2,1424.7 2102.9,1424.7 2102.9,1349.3 2104.6,1349.3 2104.6,1459.9 2106.3,1459.9 2106.3,1431.7 2108.0,1431.7 2108.0,1343.7 2109.7,1343.7 2109.7,1374.8 2111.4,1374.8 2111.4,1379.9 2113.2,1379.9 2113.2,1457.0 2114.9,1457.0 2114.9,1384.1 2116.6,1384.1 2116.6,1455.6 2118.3,1455.6 2118.3,1391.5 2120.0,1391.5 2120.0,1392.1 2121.7,1392.1 2121.7,1400.0 2123.4,1400.0 2123.4,1415.3 2125.1,1415.3 2125.1,1477.6 2126.8,1477.6 2126.8,1401.9 2128.6,1401.9 2128.6,1412.4 2130.3,1412.4 2130.3,1409.9 2132.0,1409.9 2132.0,1435.6 2133.7,1435.6 2133.7,1434.4 2135.4,1434.4 2135.4,1439.5 2137.1,1439.5 2137.1,1450.9 2138.8,1450.9 2138.8,1453.6 2140.5,1453.6 2140.5,1393.1 2142.2,1393.1 2142.2,1490.0 2144.0,1490.0 2144.0,1456.6 2145.7,1456.6 2145.7,1466.8 2147.4,1466.8 2147.4,1472.8 2149.1,1472.8 2149.1,1490.5 2150.8,1490.5 2150.8,1427.5 2152.5,1427.5 2152.5,1495.4 2154.2,1495.4 2154.2,1488.4 2155.9,1488.4 2155.9,1488.8 2157.7,1488.8 2157.7,1495.1 2159.4,1495.1 2159.4,1496.2 2161.1,1496.2 2161.1,1499.9 2162.8,1499.9 2162.8,1502.2 2164.5,1502.2 2164.5,1443.5 2166.2,1443.5 2166.2,1433.3 2167.9,1433.3 2167.9,1425.6 2169.6,1425.6 2169.6,1332.9 2171.3,1332.9 2171.3,1461.7 2173.1,1461.7 2173.1,1364.9 2174.8,1364.9 2174.8,1424.9 2176.5,1424.9 2176.5,1371.8 2178.2,1371.8 2178.2,1436.1 2179.9,1436.1 2179.9,1365.5 2181.6,1365.5 2181.6,1370.7 2183.3,1370.7 2183.3,1462.4 2185.0,1462.4 2185.0,1454.3 2186.7,1454.3 2186.7,1456.6 2188.5,1456.6 2188.5,1402.1 2190.2,1402.1 2190.2,1450.9 2191.9,1450.9 2191.9,1399.1 2193.6,1399.1 2193.6,1359.7 2195.3,1359.7 2195.3,1459.7 2197.0,1459.7 2197.0,1427.4 2198.7,1427.4 2198.7,1425.3 2200.4,1425.3 2200.4,1429.7 2202.1,1429.7 2202.1,1281.3 2203.9,1281.3 2203.9,1405.9 2205.6,1405.9 2205.6,1440.4 2207.3,1440.4 2207.3,1374.8 2209.0,1374.8 2209.0,1444.8 2210.7,1444.8 2210.7,1449.7 2212.4,1449.7 2212.4,1452.8 2214.1,1452.8 2214.1,1458.6 2215.8,1458.6 2215.8,1462.3 2217.6,1462.3 2217.6,1461.0 2219.3,1461.0 2219.3,1467.0 2221.0,1467.0 2221.0,1470.6 2222.7,1470.6 2222.7,1427.0 2224.4,1427.0 2224.4,1480.3 2226.1,1480.3 2226.1,1483.2 2227.8,1483.2 2227.8,1486.8 2229.5,1486.8 2229.5,1487.3 2231.2,1487.3 2231.2,1501.4 2233.0,1501.4 2233.0,1506.1 2234.7,1506.1 2234.7,1505.0 2236.4,1505.0 2236.4,1495.5 2238.1,1495.5 2238.1,1450.5 2239.8,1450.5 2239.8,1321.5 2241.5,1321.5 2241.5,1341.2 2243.2,1341.2 2243.2,1334.9 2244.9,1334.9 2244.9,1438.6 2246.6,1438.6 2246.6,1335.7 2248.4,1335.7 2248.4,1349.0 2250.1,1349.0 2250.1,1446.8 2251.8,1446.8 2251.8,1369.2 2253.5,1369.2 2253.5,1377.8 2255.2,1377.8 2255.2,1319.7 2256.9,1319.7 2256.9,1377.6 2258.6,1377.6 2258.6,1469.7 2260.3,1469.7 2260.3,1367.0 2262.1,1367.0 2262.1,1369.1 2263.8,1369.1 2263.8,1440.8 2265.5,1440.8 2265.5,1403.2 2267.2,1403.2 2267.2,1464.8 2268.9,1464.8 2268.9,1389.8 2270.6,1389.8 2270.6,1466.0 2272.3,1466.0 2272.3,1418.6 2274.0,1418.6 2274.0,1403.5 2275.7,1403.5 2275.7,1413.7 2277.5,1413.7 2277.5,1463.7 2279.2,1463.7 2279.2,1432.9 2280.9,1432.9 2280.9,1488.3 2282.6,1488.3 2282.6,1449.1 2284.3,1449.1 2284.3,1448.7 2286.0,1448.7 2286.0,1455.6 2287.7,1455.6 2287.7,1455.8 2289.4,1455.8 2289.4,1419.1 2291.1,1419.1 2291.1,1457.6 2292.9,1457.6 2292.9,1464.8 2294.6,1464.8 2294.6,1474.6 2296.3,1474.6 2296.3,1469.4 2298.0,1469.4 2298.0,1474.1 2299.7,1474.1 2299.7,1480.7 2301.4,1480.7 2301.4,1486.7 2303.1,1486.7 2303.1,1486.3 2304.8,1486.3 2304.8,1484.6 2306.6,1484.6 2306.6,1496.1 2308.3,1496.1 2308.3,1492.4 2310.0,1492.4 2310.0,1498.2 2311.7,1498.2 2311.7,1502.0 2313.4,1502.0 2313.4,1441.1 2315.1,1441.1 2315.1,1324.0 2316.8,1324.0 2316.8,1329.1 2318.5,1329.1 2318.5,1435.6 2320.2,1435.6 2320.2,1313.4 2322.0,1313.4 2322.0,1326.5 2323.7,1326.5 2323.7,1330.3 2325.4,1330.3 2325.4,1447.7 2327.1,1447.7 2327.1,1440.2 2328.8,1440.2 2328.8,1459.2 2330.5,1459.2 2330.5,1355.8 2332.2,1355.8 2332.2,1465.8 2333.9,1465.8 2333.9,1446.2 2335.6,1446.2 2335.6,1368.0 2337.4,1368.0 2337.4,1355.4 2339.1,1355.4 2339.1,1388.5 2340.8,1388.5 2340.8,1390.9 2342.5,1390.9 2342.5,1395.8 2344.2,1395.8 2344.2,1404.6 2345.9,1404.6 2345.9,1409.6 2347.6,1409.6 2347.6,1410.1 2349.3,1410.1 2349.3,1467.0 2351.1,1467.0 2351.1,1422.1 2352.8,1422.1 2352.8,1425.0 2354.5,1425.0 2354.5,1432.4 2356.2,1432.4 2356.2,1431.6 2357.9,1431.6 2357.9,1438.8 2359.6,1438.8 2359.6,1441.3 2361.3,1441.3 2361.3,1401.3 2363.0,1401.3 2363.0,1451.0 2364.7,1451.0 2364.7,1455.3 2366.5,1455.3 2366.5,1480.1 2368.2,1480.1 2368.2,1461.8 2369.9,1461.8 2369.9,1486.0 2371.6,1486.0 2371.6,1469.6 2373.3,1469.6 2373.3,1414.5 2375.0,1414.5 2375.0,1477.4 2376.7,1477.4 2376.7,1479.0 2378.4,1479.0 2378.4,1482.9 2380.1,1482.9 2380.1,1488.9 2381.9,1488.9 2381.9,1489.9 2383.6,1489.9 2383.6,1491.6 2385.3,1491.6 2385.3,1493.4 2387.0,1493.4 2387.0,1499.5 2388.7,1499.5 2388.7,1322.9 2390.4,1322.9 2390.4,1407.1 2392.1,1407.1 2392.1,1318.6 2393.8,1318.6 2393.8,1386.4 2395.6,1386.4 2395.6,1340.3 2397.3,1340.3 2397.3,1306.7 2399.0,1306.7 2399.0,1414.1 2400.7,1414.1 2400.7,1245.6 2402.4,1245.6 2402.4,1366.1 2404.1,1366.1 2404.1,1366.0 2405.8,1366.0 2405.8,1430.3 2407.5,1430.3 2407.5,1353.5 2409.2,1353.5 2409.2,1327.2 2411.0,1327.2 2411.0,1376.6 2412.7,1376.6 2412.7,1382.7 2414.4,1382.7 2414.4,1423.9 2416.1,1423.9 2416.1,1399.3 2417.8,1399.3 2417.8,1271.1 2419.5,1271.1 2419.5,1413.4 2421.2,1413.4 2421.2,1415.3 2422.9,1415.3 2422.9,1427.6 2424.6,1427.6 2424.6,1427.6 2426.4,1427.6 2426.4,1437.9 2428.1,1437.9 2428.1,1436.2 2429.8,1436.2 2429.8,1443.8 2431.5,1443.8 2431.5,1451.0 2433.2,1451.0 2433.2,1451.4 2434.9,1451.4 2434.9,1453.3 2436.6,1453.3 2436.6,1427.3 2438.3,1427.3 2438.3,1465.9 2440.0,1465.9 2440.0,1494.8 2441.8,1494.8 2441.8,1481.6 2443.5,1481.6 2443.5,1482.8 2445.2,1482.8 2445.2,1480.4 2446.9,1480.4 2446.9,1483.7 2448.6,1483.7 2448.6,1493.1 2450.3,1493.1 2450.3,1492.1 2452.0,1492.1 2452.0,1496.3 2453.7,1496.3 2453.7,1496.2 2455.5,1496.2 2455.5,1424.0 2457.2,1424.0 2457.2,1279.1 2458.9,1279.1 2458.9,1338.3 2460.6,1338.3 2460.6,1349.5 2462.3,1349.5 2462.3,1353.7 2464.0,1353.7 2464.0,1433.9 2465.7,1433.9 2465.7,1364.5 2467.4,1364.5 2467.4,1349.6 2469.1,1349.6 2469.1,1433.8 2470.9,1433.8 2470.9,1364.3 2472.6,1364.3 2472.6,1380.3 2474.3,1380.3 2474.3,1447.6 2476.0,1447.6 2476.0,1459.8 2477.7,1459.8 2477.7,1452.5 2479.4,1452.5 2479.4,1453.8 2481.1,1453.8 2481.1,1380.0 2482.8,1380.0 2482.8,1460.0 2484.5,1460.0 2484.5,1414.7 2486.3,1414.7 2486.3,1414.0 2488.0,1414.0 2488.0,1423.9 2489.7,1423.9 2489.7,1471.4 2491.4,1471.4 2491.4,1433.9 2493.1,1433.9 2493.1,1466.7 2494.8,1466.7 2494.8,1447.8 2496.5,1447.8 2496.5,1444.1 2498.2,1444.1 2498.2,1444.6 2500.0,1444.6 2500.0,1450.9 2501.7,1450.9 2501.7,1457.2 2503.4,1457.2 2503.4,1458.4 2505.1,1458.4 2505.1,1397.8 2506.8,1397.8 2506.8,1486.1 2508.5,1486.1 2508.5,1493.2 2510.2,1493.2 2510.2,1495.8 2511.9,1495.8 2511.9,1492.6 2513.6,1492.6 2513.6,1485.4 2515.4,1485.4 2515.4,1491.2 2517.1,1491.2 2517.1,1490.7 2518.8,1490.7 2518.8,1422.7 2520.5,1422.7 2520.5,1502.1 2522.2,1502.1 2522.2,1500.2 2523.9,1500.2 2523.9,1327.4 2525.6,1327.4 2525.6,1439.3 2527.3,1439.3 2527.3,1324.0 2529.0,1324.0 2529.0,1398.6 2530.8,1398.6 2530.8,1345.8 2532.5,1345.8 2532.5,1402.5 2534.2,1402.5 2534.2,1407.1 2535.9,1407.1 2535.9,1345.9 2537.6,1345.9 2537.6,1333.6 2539.3,1333.6 2539.3,1343.9 2541.0,1343.9 2541.0,1440.2 2542.7,1440.2 2542.7,1438.0 2544.5,1438.0 2544.5,1359.4 2546.2,1359.4 2546.2,1361.7 2547.9,1361.7 2547.9,1441.5 2549.6,1441.5 2549.6,1250.7 2551.3,1250.7 2551.3,1390.6 2553.0,1390.6 2553.0,1369.4 2554.7,1369.4 2554.7,1402.8 2556.4,1402.8 2556.4,1444.5 2558.1,1444.5 2558.1,1449.4 2559.9,1449.4 2559.9,1450.9 2561.6,1450.9 2561.6,1477.1 2563.3,1477.1 2563.3,1362.7 2565.0,1362.7 2565.0,1428.0 2566.7,1428.0 2566.7,1434.0 2568.4,1434.0 2568.4,1476.1 2570.1,1476.1 2570.1,1441.6 2571.8,1441.6 2571.8,1436.7 2573.5,1436.7 2573.5,1447.5 2575.3,1447.5 2575.3,1458.5 2577.0,1458.5 2577.0,1457.2 2578.7,1457.2 2578.7,1455.9 2580.4,1455.9 2580.4,1459.7 2582.1,1459.7 2582.1,1459.6 2583.8,1459.6 2583.8,1466.6 2585.5,1466.6 2585.5,1466.6 2587.2,1466.6 2587.2,1471.8 2589.0,1471.8 2589.0,1491.8 2590.7,1491.8 2590.7,1479.5 2592.4,1479.5 2592.4,1490.2 2594.1,1490.2 2594.1,1503.7 2595.8,1503.7 2595.8,1488.9 2597.5,1488.9 2597.5,1423.6 2599.2,1423.6 2599.2,1502.3 2600.9,1502.3 2600.9,1504.7 2602.6,1504.7 2602.6,1323.0 2604.4,1323.0 2604.4,1345.6 2606.1,1345.6 2606.1,1419.7 2607.8,1419.7 2607.8,1436.1 2609.5,1436.1 2609.5,1443.6 2611.2,1443.6 2611.2,1458.4 2612.9,1458.4 2612.9,1467.4 2614.6,1467.4 2614.6,1359.1 2616.3,1359.1 2616.3,1433.0 2618.0,1433.0 2618.0,1386.4 2619.8,1386.4 2619.8,1306.8 2621.5,1306.8 2621.5,1457.9 2623.2,1457.9 2623.2,1396.8 2624.9,1396.8 2624.9,1394.6 2626.6,1394.6 2626.6,1471.6 2628.3,1471.6 2628.3,1391.1 2630.0,1391.1 2630.0,1412.4 2631.7,1412.4 2631.7,1417.8 2633.5,1417.8 2633.5,1419.1 2635.2,1419.1 2635.2,1422.9 2636.9,1422.9 2636.9,1422.7 2638.6,1422.7 2638.6,1427.2 2640.3,1427.2 2640.3,1439.0 2642.0,1439.0 2642.0,1381.7 2643.7,1381.7 2643.7,1444.5 2645.4,1444.5 2645.4,1443.5 2647.1,1443.5 2647.1,1448.2 2648.9,1448.2 2648.9,1450.7 2650.6,1450.7 2650.6,1479.0 2652.3,1479.0 2652.3,1458.9 2654.0,1458.9 2654.0,1457.4 2655.7,1457.4 2655.7,1468.8 2657.4,1468.8 2657.4,1468.2 2659.1,1468.2 2659.1,1471.5 2660.8,1471.5 2660.8,1473.9 2662.5,1473.9 2662.5,1472.8 2664.3,1472.8 2664.3,1479.6 2666.0,1479.6 2666.0,1496.3 2667.7,1496.3 2667.7,1489.8 2669.4,1489.8 2669.4,1487.5 2671.1,1487.5 2671.1,1490.5 2672.8,1490.5 2672.8,1496.3 2674.5,1496.3 2674.5,1500.6 2676.2,1500.6 2676.2,1499.6 2678.0,1499.6 2678.0,1503.7 2679.7,1503.7 2679.7,1356.5 2681.4,1356.5 2681.4,1466.9 2683.1,1466.9 2683.1,1451.3 2684.8,1451.3 2684.8,1362.0 2686.5,1362.0 2686.5,1341.0 2688.2,1341.0 2688.2,1370.7 2689.9,1370.7 2689.9,1335.0 2691.6,1335.0 2691.6,1388.7 2693.4,1388.7 2693.4,1385.5 2695.1,1385.5 2695.1,1472.2 2696.8,1472.2 2696.8,1462.4 2698.5,1462.4 2698.5,1456.4 2700.2,1456.4 2700.2,1409.5 2701.9,1409.5 2701.9,1417.0 2703.6,1417.0 2703.6,1423.8 2705.3,1423.8 2705.3,1431.5 2707.0,1431.5 2707.0,1429.3 2708.8,1429.3 2708.8,1437.5 2710.5,1437.5 2710.5,1434.8 2712.2,1434.8 2712.2,1438.7 2713.9,1438.7 2713.9,1444.3 2715.6,1444.3 2715.6,1447.1 2717.3,1447.1 2717.3,1450.5 2719.0,1450.5 2719.0,1461.9 2720.7,1461.9 2720.7,1461.4 2722.4,1461.4 2722.4,1470.0 2724.2,1470.0 2724.2,1401.6 2725.9,1401.6 2725.9,1470.3 2727.6,1470.3 2727.6,1475.0 2729.3,1475.0 2729.3,1478.9 2731.0,1478.9 2731.0,1480.1 2732.7,1480.1 2732.7,1488.2 2734.4,1488.2 2734.4,1490.7 2736.1,1490.7 2736.1,1494.4 2737.9,1494.4 2737.9,1498.7 2739.6,1498.7 2739.6,1500.7 2741.3,1500.7 2741.3,1391.8 2743.0,1391.8 2743.0,1407.2 2744.7,1407.2 2744.7,1322.1 2746.4,1322.1 2746.4,1339.7 2748.1,1339.7 2748.1,1343.6 2749.8,1343.6 2749.8,1430.5 2751.5,1430.5 2751.5,1406.8 2753.3,1406.8 2753.3,1394.6 2755.0,1394.6 2755.0,1401.4 2756.7,1401.4 2756.7,1366.3 2758.4,1366.3 2758.4,1419.9 2760.1,1419.9 2760.1,1408.5 2761.8,1408.5 2761.8,1379.9 2763.5,1379.9 2763.5,1350.2 2765.2,1350.2 2765.2,1375.3 2766.9,1375.3 2766.9,1452.4 2768.7,1452.4 2768.7,1376.3 2770.4,1376.3 2770.4,1381.2 2772.1,1381.2 2772.1,1449.0 2773.8,1449.0 2773.8,1400.6 2775.5,1400.6 2775.5,1412.8 2777.2,1412.8 2777.2,1416.1 2778.9,1416.1 2778.9,1417.4 2780.6,1417.4 2780.6,1430.2 2782.4,1430.2 2782.4,1433.2 2784.1,1433.2 2784.1,1434.3 2785.8,1434.3 2785.8,1436.7 2787.5,1436.7 2787.5,1440.2 2789.2,1440.2 2789.2,1473.8 2790.9,1473.8 2790.9,1450.1 2792.6,1450.1 2792.6,1475.0 2794.3,1475.0 2794.3,1459.4 2796.0,1459.4 2796.0,1458.9 2797.8,1458.9 2797.8,1459.6 2799.5,1459.6 2799.5,1468.4 2801.2,1468.4 2801.2,1470.8 2802.9,1470.8 2802.9,1477.6 2804.6,1477.6 2804.6,1416.1 2806.3,1416.1 2806.3,1486.5 2808.0,1486.5 2808.0,1484.0 2809.7,1484.0 2809.7,1483.7 2811.4,1483.7 2811.4,1492.3 2813.2,1492.3 2813.2,1505.1 2814.9,1505.1 2814.9,1499.6 2816.6,1499.6 2816.6,1509.6 2818.3,1509.6 2818.3,1400.4 2820.0,1400.4 2820.0,1310.9 2821.7,1310.9 2821.7,1301.2 2823.4,1301.2 2823.4,1451.4 2825.1,1451.4 2825.1,1445.6 2826.9,1445.6 2826.9,1334.7 2828.6,1334.7 2828.6,1460.0 2830.3,1460.0 2830.3,1448.3 2832.0,1448.3 2832.0,1319.0 2833.7,1319.0 2833.7,1348.1 2835.4,1348.1 2835.4,1358.1 2837.1,1358.1 2837.1,1335.4 2838.8,1335.4 2838.8,1457.1 2840.5,1457.1 2840.5,1377.7 2842.3,1377.7 2842.3,1466.5 2844.0,1466.5 2844.0,1441.1 2845.7,1441.1 2845.7,1456.1 2847.4,1456.1 2847.4,1401.4 2849.1,1401.4 2849.1,1405.6 2850.8,1405.6 2850.8,1407.1 2852.5,1407.1 2852.5,1416.3 2854.2,1416.3 2854.2,1417.3 2855.9,1417.3 2855.9,1425.4 2857.7,1425.4 2857.7,1429.9 2859.4,1429.9 2859.4,1433.6 2861.1,1433.6 2861.1,1464.0 2862.8,1464.0 2862.8,1441.2 2864.5,1441.2 2864.5,1447.9 2866.2,1447.9 2866.2,1448.3 2867.9,1448.3 2867.9,1458.0 2869.6,1458.0 2869.6,1453.7 2871.4,1453.7 2871.4,1464.7 2873.1,1464.7 2873.1,1488.7 2874.8,1488.7 2874.8,1480.1 2876.5,1480.1 2876.5,1483.0 2878.2,1483.0 2878.2,1478.6 2879.9,1478.6 2879.9,1416.9 2881.6,1416.9 2881.6,1434.5 2883.3,1434.5 2883.3,1494.4 2885.0,1494.4 2885.0,1498.6 2886.8,1498.6 2886.8,1497.4 2888.5,1497.4 2888.5,1418.0 2890.2,1418.0 2890.2,1325.2 2891.9,1325.2 2891.9,1329.3 2893.6,1329.3 2893.6,1335.9 2895.3,1335.9 2895.3,1409.6 2897.0,1409.6 2897.0,1401.4 2898.7,1401.4 2898.7,1215.0 2900.4,1215.0 2900.4,1340.7 2902.2,1340.7 2902.2,1329.5 2903.9,1329.5 2903.9,1407.3 2905.6,1407.3 2905.6,1405.9 2907.3,1405.9 2907.3,1439.2 2909.0,1439.2 2909.0,1409.5 2910.7,1409.5 2910.7,1320.0 2912.4,1320.0 2912.4,1446.6 2914.1,1446.6 2914.1,1452.9 2915.9,1452.9 2915.9,1368.9 2917.6,1368.9 2917.6,1379.4 2919.3,1379.4 2919.3,1434.0 2921.0,1434.0 2921.0,1415.7 2922.7,1415.7 2922.7,1364.4 2924.4,1364.4 2924.4,1432.8 2926.1,1432.8 2926.1,1432.4 2927.8,1432.4 2927.8,1435.4 2929.5,1435.4 2929.5,1470.1 2931.3,1470.1 2931.3,1443.2 2933.0,1443.2 2933.0,1444.2 2934.7,1444.2 2934.7,1454.7 2936.4,1454.7 2936.4,1457.2 2938.1,1457.2 2938.1,1459.2 2939.8,1459.2 2939.8,1468.6 2941.5,1468.6 2941.5,1469.5 2943.2,1469.5 2943.2,1472.1 2944.9,1472.1 2944.9,1475.5 2946.7,1475.5 2946.7,1482.5 2948.4,1482.5 2948.4,1296.6 2950.1,1296.6 2950.1,1486.6 2951.8,1486.6 2951.8,1489.5 2953.5,1489.5 2953.5,1506.6 2955.2,1506.6 2955.2,1500.8 2956.9,1500.8 2956.9,1501.1 2958.6,1501.1 2958.6,1319.1 2960.3,1319.1 2960.3,1309.0 2962.1,1309.0 2962.1,1398.9 2963.8,1398.9 2963.8,1380.6 2965.5,1380.6 2965.5,1398.0 2967.2,1398.0 2967.2,1398.7 2968.9,1398.7 2968.9,1417.1 2970.6,1417.1 2970.6,1401.5 2972.3,1401.5 2972.3,1321.4 2974.0,1321.4 2974.0,1404.6 2975.8,1404.6 2975.8,1401.6 2977.5,1401.6 2977.5,1373.0 2979.2,1373.0 2979.2,1372.1 2980.9,1372.1 2980.9,1385.8 2982.6,1385.8 2982.6,1410.0 2984.3,1410.0 2984.3,1396.4 2986.0,1396.4 2986.0,1425.0 2987.7,1425.0 2987.7,1383.5 2989.4,1383.5 2989.4,1405.4 2991.2,1405.4 2991.2,1405.9 2992.9,1405.9 2992.9,1418.7 2994.6,1418.7 2994.6,1419.5 2996.3,1419.5 2996.3,1425.8 2998.0,1425.8 2998.0,1426.2 2999.7,1426.2 2999.7,1432.1 3001.4,1432.1 3001.4,1437.1 3003.1,1437.1 3003.1,1444.5 3004.8,1444.5 3004.8,1441.5 3006.6,1441.5 3006.6,1450.7 3008.3,1450.7 3008.3,1456.6 3010.0,1456.6 3010.0,1375.1 3011.7,1375.1 3011.7,1461.3 3013.4,1461.3 3013.4,1464.9 3015.1,1464.9 3015.1,1467.0 3016.8,1467.0 3016.8,1467.9 3018.5,1467.9 3018.5,1479.9 3020.3,1479.9 3020.3,1476.3 3022.0,1476.3 3022.0,1485.7 3023.7,1485.7 3023.7,1490.0 3025.4,1490.0 3025.4,1487.6 3027.1,1487.6 3027.1,1493.9 3028.8,1493.9 3028.8,1496.3 3030.5,1496.3 3030.5,1500.8 3032.2,1500.8 3032.2,1402.0 3033.9,1402.0 3033.9,1402.4 3035.7,1402.4 3035.7,1325.0 3037.4,1325.0 3037.4,1277.9 3039.1,1277.9 3039.1,1310.5 3040.8,1310.5 3040.8,1408.2 3042.5,1408.2 3042.5,1337.6 3044.2,1337.6 3044.2,1408.6 3045.9,1408.6 3045.9,1303.1 3047.6,1303.1 3047.6,1343.3 3049.3,1343.3 3049.3,1350.3 3051.1,1350.3 3051.1,1369.6 3052.8,1369.6 3052.8,1432.9 3054.5,1432.9 3054.5,1424.0 3056.2,1424.0 3056.2,1364.3 3057.9,1364.3 3057.9,1426.8 3059.6,1426.8 3059.6,1404.5 3061.3,1404.5 3061.3,1462.1 3063.0,1462.1 3063.0,1400.0 3064.8,1400.0 3064.8,1452.9 3066.5,1452.9 3066.5,1462.6 3068.2,1462.6 3068.2,1427.0 3069.9,1427.0 3069.9,1435.0 3071.6,1435.0 3071.6,1434.8 3073.3,1434.8 3073.3,1441.1 3075.0,1441.1 3075.0,1441.9 3076.7,1441.9 3076.7,1450.4 3078.4,1450.4 3078.4,1454.3 3080.2,1454.3 3080.2,1458.0 3081.9,1458.0 3081.9,1459.8 3083.6,1459.8 3083.6,1467.4 3085.3,1467.4 3085.3,1468.5 3087.0,1468.5 3087.0,1470.5 3088.7,1470.5 3088.7,1494.2 3090.4,1494.2 3090.4,1479.2 3092.1,1479.2 3092.1,1483.7 3093.8,1483.7 3093.8,1487.6 3095.6,1487.6 3095.6,1502.1 3097.3,1502.1 3097.3,1494.1 3099.0,1494.1 3099.0,1498.8 3100.7,1498.8 3100.7,1418.1 3102.4,1418.1 3102.4,1275.1 3104.1,1275.1 3104.1,1294.9 3105.8,1294.9 3105.8,1327.2 3107.5,1327.2 3107.5,1430.7 3109.3,1430.7 3109.3,1406.9 3111.0,1406.9 3111.0,1341.5 3112.7,1341.5 3112.7,1336.5 3114.4,1336.5 3114.4,1340.6 3116.1,1340.6 3116.1,1437.5 3117.8,1437.5 3117.8,1345.8 3119.5,1345.8 3119.5,1338.4 3121.2,1338.4 3121.2,1367.6 3122.9,1367.6 3122.9,1385.1 3124.7,1385.1 3124.7,1381.6 3126.4,1381.6 3126.4,1374.2 3128.1,1374.2 3128.1,1401.0 3129.8,1401.0 3129.8,1398.9 3131.5,1398.9 3131.5,1405.6 3133.2,1405.6 3133.2,1386.2 3134.9,1386.2 3134.9,1464.8 3136.6,1464.8 3136.6,1255.8 3138.3,1255.8 3138.3,1433.4 3140.1,1433.4 3140.1,1429.8 3141.8,1429.8 3141.8,1435.4 3143.5,1435.4 3143.5,1446.2 3145.2,1446.2 3145.2,1449.4 3146.9,1449.4 3146.9,1456.4 3148.6,1456.4 3148.6,1490.4 3150.3,1490.4 3150.3,1465.6 3152.0,1465.6 3152.0,1467.6 3153.8,1467.6 3153.8,1476.3 3155.5,1476.3 3155.5,1478.6 3157.2,1478.6 3157.2,1486.7 3158.9,1486.7 3158.9,1410.9 3160.6,1410.9 3160.6,1491.2 3162.3,1491.2 3162.3,1488.5 3164.0,1488.5 3164.0,1491.0 3165.7,1491.0 3165.7,1501.8 3167.4,1501.8 3167.4,1397.6 3169.2,1397.6 3169.2,1304.7 3170.9,1304.7 3170.9,1398.7 3172.6,1398.7 3172.6,1376.3 3174.3,1376.3 3174.3,1406.3 3176.0,1406.3 3176.0,1417.5 3176.0,1521.0" fill="#eab839" fill-opacity="0.1"/>
<polyline points="1942.0,1501.5 1943.7,1501.5 1943.7,1504.2 1945.4,1504.2 1945.4,1362.3 1947.1,1362.3 1947.1,1375.8 1948.8,1375.8 1948.8,1308.0 1950.6,1308.0 1950.6,1429.8 1952.3,1429.8 1952.3,1416.3 1954.0,1416.3 1954.0,1312.7 1955.7,1312.7 1955.7,1340.4 1957.4,1340.4 1957.4,1316.3 1959.1,1316.3 1959.1,1350.3 1960.8,1350.3 1960.8,1347.5 1962.5,1347.5 1962.5,1430.0 1964.2,1430.0 1964.2,1427.9 1966.0,1427.9 1966.0,1429.3 1967.7,1429.3 1967.7,1439.1 1969.4,1439.1 1969.4,1365.4 1971.1,1365.4 1971.1,1432.6 1972.8,1432.6 1972.8,1393.2 1974.5,1393.2 1974.5,1387.7 1976.2,1387.7 1976.2,1467.4 1977.9,1467.4 1977.9,1351.8 1979.7,1351.8 1979.7,1409.0 1981.4,1409.0 1981.4,1415.5 1983.1,1415.5 1983.1,1417.1 1984.8,1417.1 1984.8,1425.7 1986.5,1425.7 1986.5,1431.6 1988.2,1431.6 1988.2,1443.3 1989.9,1443.3 1989.9,1441.3 1991.6,1441.3 1991.6,1451.9 1993.3,1451.9 1993.3,1455.4 1995.1,1455.4 1995.1,1455.6 1996.8,1455.6 1996.8,1463.9 1998.5,1463.9 1998.5,1467.0 2000.2,1467.0 2000.2,1469.5 2001.9,1469.5 2001.9,1473.3 2003.6,1473.3 2003.6,1476.4 2005.3,1476.4 2005.3,1480.9 2007.0,1480.9 2007.0,1485.4 2008.7,1485.4 2008.7,1494.0 2010.5,1494.0 2010.5,1492.5 2012.2,1492.5 2012.2,1499.3 2013.9,1499.3 2013.9,1506.8 2015.6,1506.8 2015.6,1425.9 2017.3,1425.9 2017.3,1446.0 2019.0,1446.0 2019.0,1356.5 2020.7,1356.5 2020.7,1339.2 2022.4,1339.2 2022.4,1344.6 2024.2,1344.6 2024.2,1443.2 2025.9,1443.2 2025.9,1458.0 2027.6,1458.0 2027.6,1368.3 2029.3,1368.3 2029.3,1375.9 2031.0,1375.9 2031.0,1336.7 2032.7,1336.7 2032.7,1448.3 2034.4,1448.3 2034.4,1392.5 2036.1,1392.5 2036.1,1442.7 2037.8,1442.7 2037.8,1367.4 2039.6,1367.4 2039.6,1399.4 2041.3,1399.4 2041.3,1472.7 2043.0,1472.7 2043.0,1452.0 2044.7,1452.0 2044.7,1397.7 2046.4,1397.7 2046.4,1412.9 2048.1,1412.9 2048.1,1406.4 2049.8,1406.4 2049.8,1281.3 2051.5,1281.3 2051.5,1430.2 2053.2,1430.2 2053.2,1433.9 2055.0,1433.9 2055.0,1439.9 2056.7,1439.9 2056.7,1439.1 2058.4,1439.1 2058.4,1446.2 2060.1,1446.2 2060.1,1445.6 2061.8,1445.6 2061.8,1455.4 2063.5,1455.4 2063.5,1454.8 2065.2,1454.8 2065.2,1456.0 2066.9,1456.0 2066.9,1407.7 2068.7,1407.7 2068.7,1460.9 2070.4,1460.9 2070.4,1471.3 2072.1,1471.3 2072.1,1475.6 2073.8,1475.6 2073.8,1475.9 2075.5,1475.9 2075.5,1476.6 2077.2,1476.6 2077.2,1497.5 2078.9,1497.5 2078.9,1490.5 2080.6,1490.5 2080.6,1491.9 2082.3,1491.9 2082.3,1489.8 2084.1,1489.8 2084.1,1505.5 2085.8,1505.5 2085.8,1495.9 2087.5,1495.9 2087.5,1215.0 2089.2,1215.0 2089.2,1325.6 2090.9,1325.6 2090.9,1445.7 2092.6,1445.7 2092.6,1455.7 2094.3,1455.7 2094.3,1335.8 2096.0,1335.8 2096.0,1417.9 2097.7,1417.9 2097.7,1340.0 2099.5,1340.0 2099.5,1438.0 2101.2,1438.0 2101.2,1424.7 2102.9,1424.7 2102.9,1349.3 2104.6,1349.3 2104.6,1459.9 2106.3,1459.9 2106.3,1431.7 2108.0,1431.7 2108.0,1343.7 2109.7,1343.7 2109.7,1374.8 2111.4,1374.8 2111.4,1379.9 2113.2,1379.9 2113.2,1457.0 2114.9,1457.0 2114.9,1384.1 2116.6,1384.1 2116.6,1455.6 2118.3,1455.6 2118.3,1391.5 2120.0,1391.5 2120.0,1392.1 2121.7,1392.1 2121.7,1400.0 2123.4,1400.0 2123.4,1415.3 2125.1,1415.3 2125.1,1477.6 2126.8,1477.6 2126.8,1401.9 2128.6,1401.9 2128.6,1412.4 2130.3,1412.4 2130.3,1409.9 2132.0,1409.9 2132.0,1435.6 2133.7,1435.6 2133.7,1434.4 2135.4,1434.4 2135.4,1439.5 2137.1,1439.5 2137.1,1450.9 2138.8,1450.9 2138.8,1453.6 2140.5,1453.6 2140.5,1393.1 2142.2,1393.1 2142.2,1490.0 2144.0,1490.0 2144.0,1456.6 2145.7,1456.6 2145.7,1466.8 2147.4,1466.8 2147.4,1472.8 2149.1,1472.8 2149.1,1490.5 2150.8,1490.5 2150.8,1427.5 2152.5,1427.5 2152.5,1495.4 2154.2,1495.4 2154.2,1488.4 2155.9,1488.4 2155.9,1488.8 2157.7,1488.8 2157.7,1495.1 2159.4,1495.1 2159.4,1496.2 2161.1,1496.2 2161.1,1499.9 2162.8,1499.9 2162.8,1502.2 2164.5,1502.2 2164.5,1443.5 2166.2,1443.5 2166.2,1433.3 2167.9,1433.3 2167.9,1425.6 2169.6,1425.6 2169.6,1332.9 2171.3,1332.9 2171.3,1461.7 2173.1,1461.7 2173.1,1364.9 2174.8,1364.9 2174.8,1424.9 2176.5,1424.9 2176.5,1371.8 2178.2,1371.8 2178.2,1436.1 2179.9,1436.1 2179.9,1365.5 2181.6,1365.5 2181.6,1370.7 2183.3,1370.7 2183.3,1462.4 2185.0,1462.4 2185.0,1454.3 2186.7,1454.3 2186.7,1456.6 2188.5,1456.6 2188.5,1402.1 2190.2,1402.1 2190.2,1450.9 2191.9,1450.9 2191.9,1399.1 2193.6,1399.1 2193.6,1359.7 2195.3,1359.7 2195.3,1459.7 2197.0,1459.7 2197.0,1427.4 2198.7,1427.4 2198.7,1425.3 2200.4,1425.3 2200.4,1429.7 2202.1,1429.7 2202.1,1281.3 2203.9,1281.3 2203.9,1405.9 2205.6,1405.9 2205.6,1440.4 2207.3,1440.4 2207.3,1374.8 2209.0,1374.8 2209.0,1444.8 2210.7,1444.8 2210.7,1449.7 2212.4,1449.7 2212.4,1452.8 2214.1,1452.8 2214.1,1458.6 2215.8,1458.6 2215.8,1462.3 2217.6,1462.3 2217.6,1461.0 2219.3,1461.0 2219.3,1467.0 2221.0,1467.0 2221.0,1470.6 2222.7,1470.6 2222.7,1427.0 2224.4,1427.0 2224.4,1480.3 2226.1,1480.3 2226.1,1483.2 2227.8,1483.2 2227.8,1486.8 2229.5,1486.8 2229.5,1487.3 2231.2,1487.3 2231.2,1501.4 2233.0,1501.4 2233.0,1506.1 2234.7,1506.1 2234.7,1505.0 2236.4,1505.0 2236.4,1495.5 2238.1,1495.5 2238.1,1450.5 2239.8,1450.5 2239.8,1321.5 2241.5,1321.5 2241.5,1341.2 2243.2,1341.2 2243.2,1334.9 2244.9,1334.9 2244.9,1438.6 2246.6,1438.6 2246.6,1335.7 2248.4,1335.7 2248.4,1349.0 2250.1,1349.0 2250.1,1446.8 2251.8,1446.8 2251.8,1369.2 2253.5,1369.2 2253.5,1377.8 2255.2,1377.8 2255.2,1319.7 2256.9,1319.7 2256.9,1377.6 2258.6,1377.6 2258.6,1469.7 2260.3,1469.7 2260.3,1367.0 2262.1,1367.0 2262.1,1369.1 2263.8,1369.1 2263.8,1440.8 2265.5,1440.8 2265.5,1403.2 2267.2,1403.2 2267.2,1464.8 2268.9,1464.8 2268.9,1389.8 2270.6,1389.8 2270.6,1466.0 2272.3,1466.0 2272.3,1418.6 2274.0,1418.6 2274.0,1403.5 2275.7,1403.5 2275.7,1413.7 2277.5,1413.7 2277.5,1463.7 2279.2,1463.7 2279.2,1432.9 2280.9,1432.9 2280.9,1488.3 2282.6,1488.3 2282.6,1449.1 2284.3,1449.1 2284.3,1448.7 2286.0,1448.7 2286.0,1455.6 2287.7,1455.6 2287.7,1455.8 2289.4,1455.8 2289.4,1419.1 2291.1,1419.1 2291.1,1457.6 2292.9,1457.6 2292.9,1464.8 2294.6,1464.8 2294.6,1474.6 2296.3,1474.6 2296.3,1469.4 2298.0,1469.4 2298.0,1474.1 2299.7,1474.1 2299.7,1480.7 2301.4,1480.7 2301.4,1486.7 2303.1,1486.7 2303.1,1486.3 2304.8,1486.3 2304.8,1484.6 2306.6,1484.6 2306.6,1496.1 2308.3,1496.1 2308.3,1492.4 2310.0,1492.4 2310.0,1498.2 2311.7,1498.2 2311.7,1502.0 2313.4,1502.0 2313.4,1441.1 2315.1,1441.1 2315.1,1324.0 2316.8,1324.0 2316.8,1329.1 2318.5,1329.1 2318.5,1435.6 2320.2,1435.6 2320.2,1313.4 2322.0,1313.4 2322.0,1326.5 2323.7,1326.5 2323.7,1330.3 2325.4,1330.3 2325.4,1447.7 2327.1,1447.7 2327.1,1440.2 2328.8,1440.2 2328.8,1459.2 2330.5,1459.2 2330.5,1355.8 2332.2,1355.8 2332.2,1465.8 2333.9,1465.8 2333.9,1446.2 2335.6,1446.2 2335.6,1368.0 2337.4,1368.0 2337.4,1355.4 2339.1,1355.4 2339.1,1388.5 2340.8,1388.5 2340.8,1390.9 2342.5,1390.9 2342.5,1395.8 2344.2,1395.8 2344.2,1404.6 2345.9,1404.6 2345.9,1409.6 2347.6,1409.6 2347.6,1410.1 2349.3,1410.1 2349.3,1467.0 2351.1,1467.0 2351.1,1422.1 2352.8,1422.1 2352.8,1425.0 2354.5,1425.0 2354.5,1432.4 2356.2,1432.4 2356.2,1431.6 2357.9,1431.6 2357.9,1438.8 2359.6,1438.8 2359.6,1441.3 2361.3,1441.3 2361.3,1401.3 2363.0,1401.3 2363.0,1451.0 2364.7,1451.0 2364.7,1455.3 2366.5,1455.3 2366.5,1480.1 2368.2,1480.1 2368.2,1461.8 2369.9,1461.8 2369.9,1486.0 2371.6,1486.0 2371.6,1469.6 2373.3,1469.6 2373.3,1414.5 2375.0,1414.5 2375.0,1477.4 2376.7,1477.4 2376.7,1479.0 2378.4,1479.0 2378.4,1482.9 2380.1,1482.9 2380.1,1488.9 2381.9,1488.9 2381.9,1489.9 2383.6,1489.9 2383.6,1491.6 2385.3,1491.6 2385.3,1493.4 2387.0,1493.4 2387.0,1499.5 2388.7,1499.5 2388.7,1322.9 2390.4,1322.9 2390.4,1407.1 2392.1,1407.1 2392.1,1318.6 2393.8,1318.6 2393.8,1386.4 2395.6,1386.4 2395.6,1340.3 2397.3,1340.3 2397.3,1306.7 2399.0,1306.7 2399.0,1414.1 2400.7,1414.1 2400.7,1245.6 2402.4,1245.6 2402.4,1366.1 2404.1,1366.1 2404.1,1366.0 2405.8,1366.0 2405.8,1430.3 2407.5,1430.3 2407.5,1353.5 2409.2,1353.5 2409.2,1327.2 2411.0,1327.2 2411.0,1376.6 2412.7,1376.6 2412.7,1382.7 2414.4,1382.7 2414.4,1423.9 2416.1,1423.9 2416.1,1399.3 2417.8,1399.3 2417.8,1271.1 2419.5,1271.1 2419.5,1413.4 2421.2,1413.4 2421.2,1415.3 2422.9,1415.3 2422.9,1427.6 2424.6,1427.6 2424.6,1427.6 2426.4,1427.6 2426.4,1437.9 2428.1,1437.9 2428.1,1436.2 2429.8,1436.2 2429.8,1443.8 2431.5,1443.8 2431.5,1451.0 2433.2,1451.0 2433.2,1451.4 2434.9,1451.4 2434.9,1453.3 2436.6,1453.3 2436.6,1427.3 2438.3,1427.3 2438.3,1465.9 2440.0,1465.9 2440.0,1494.8 2441.8,1494.8 2441.8,1481.6 2443.5,1481.6 2443.5,1482.8 2445.2,1482.8 2445.2,1480.4 2446.9,1480.4 2446.9,1483.7 2448.6,1483.7 2448.6,1493.1 2450.3,1493.1 2450.3,1492.1 2452.0,1492.1 2452.0,1496.3 2453.7,1496.3 2453.7,1496.2 2455.5,1496.2 2455.5,1424.0 2457.2,1424.0 2457.2,1279.1 2458.9,1279.1 2458.9,1338.3 2460.6,1338.3 2460.6,1349.5 2462.3,1349.5 2462.3,1353.7 2464.0,1353.7 2464.0,1433.9 2465.7,1433.9 2465.7,1364.5 2467.4,1364.5 2467.4,1349.6 2469.1,1349.6 2469.1,1433.8 2470.9,1433.8 2470.9,1364.3 2472.6,1364.3 2472.6,1380.3 2474.3,1380.3 2474.3,1447.6 2476.0,1447.6 2476.0,1459.8 2477.7,1459.8 2477.7,1452.5 2479.4,1452.5 2479.4,1453.8 2481.1,1453.8 2481.1,1380.0 2482.8,1380.0 2482.8,1460.0 2484.5,1460.0 2484.5,1414.7 2486.3,1414.7 2486.3,1414.0 2488.0,1414.0 2488.0,1423.9 2489.7,1423.9 2489.7,1471.4 2491.4,1471.4 2491.4,1433.9 2493.1,1433.9 2493.1,1466.7 2494.8,1466.7 2494.8,1447.8 2496.5,1447.8 2496.5,1444.1 2498.2,1444.1 2498.2,1444.6 2500.0,1444.6 2500.0,1450.9 2501.7,1450.9 2501.7,1457.2 2503.4,1457.2 2503.4,1458.4 2505.1,1458.4 2505.1,1397.8 2506.8,1397.8 2506.8,1486.1 2508.5,1486.1 2508.5,1493.2 2510.2,1493.2 2510.2,1495.8 2511.9,1495.8 2511.9,1492.6 2513.6,1492.6 2513.6,1485.4 2515.4,1485.4 2515.4,1491.2 2517.1,1491.2 2517.1,1490.7 2518.8,1490.7 2518.8,1422.7 2520.5,1422.7 2520.5,1502.1 2522.2,1502.1 2522.2,1500.2 2523.9,1500.2 2523.9,1327.4 2525.6,1327.4 2525.6,1439.3 2527.3,1439.3 2527.3,1324.0 2529.0,1324.0 2529.0,1398.6 2530.8,1398.6 2530.8,1345.8 2532.5,1345.8 2532.5,1402.5 2534.2,1402.5 2534.2,1407.1 2535.9,1407.1 2535.9,1345.9 2537.6,1345.9 2537.6,1333.6 2539.3,1333.6 2539.3,1343.9 2541.0,1343.9 2541.0,1440.2 2542.7,1440.2 2542.7,1438.0 2544.5,1438.0 2544.5,1359.4 2546.2,1359.4 2546.2,1361.7 2547.9,1361.7 2547.9,1441.5 2549.6,1441.5 2549.6,1250.7 2551.3,1250.7 2551.3,1390.6 2553.0,1390.6 2553.0,1369.4 2554.7,1369.4 2554.7,1402.8 2556.4,1402.8 2556.4,1444.5 2558.1,1444.5 2558.1,1449.4 2559.9,1449.4 2559.9,1450.9 2561.6,1450.9 2561.6,1477.1 2563.3,1477.1 2563.3,1362.7 2565.0,1362.7 2565.0,1428.0 2566.7,1428.0 2566.7,1434.0 2568.4,1434.0 2568.4,1476.1 2570.1,1476.1 2570.1,1441.6 2571.8,1441.6 2571.8,1436.7 2573.5,1436.7 2573.5,1447.5 2575.3,1447.5 2575.3,1458.5 2577.0,1458.5 2577.0,1457.2 2578.7,1457.2 2578.7,1455.9 2580.4,1455.9 2580.4,1459.7 2582.1,1459.7 2582.1,1459.6 2583.8,1459.6 2583.8,1466.6 2585.5,1466.6 2585.5,1466.6 2587.2,1466.6 2587.2,1471.8 2589.0,1471.8 2589.0,1491.8 2590.7,1491.8 2590.7,1479.5 2592.4,1479.5 2592.4,1490.2 2594.1,1490.2 2594.1,1503.7 2595.8,1503.7 2595.8,1488.9 2597.5,1488.9 2597.5,1423.6 2599.2,1423.6 2599.2,1502.3 2600.9,1502.3 2600.9,1504.7 2602.6,1504.7 2602.6,1323.0 2604.4,1323.0 2604.4,1345.6 2606.1,1345.6 2606.1,1419.7 2607.8,1419.7 2607.8,1436.1 2609.5,1436.1 2609.5,1443.6 2611.2,1443.6 2611.2,1458.4 2612.9,1458.4 2612.9,1467.4 2614.6,1467.4 2614.6,1359.1 2616.3,1359.1 2616.3,1433.0 2618.0,1433.0 2618.0,1386.4 2619.8,1386.4 2619.8,1306.8 2621.5,1306.8 2621.5,1457.9 2623.2,1457.9 2623.2,1396.8 2624.9,1396.8 2624.9,1394.6 2626.6,1394.6 2626.6,1471.6 2628.3,1471.6 2628.3,1391.1 2630.0,1391.1 2630.0,1412.4 2631.7,1412.4 2631.7,1417.8 2633.5,1417.8 2633.5,1419.1 2635.2,1419.1 2635.2,1422.9 2636.9,1422.9 2636.9,1422.7 2638.6,1422.7 2638.6,1427.2 2640.3,1427.2 2640.3,1439.0 2642.0,1439.0 2642.0,1381.7 2643.7,1381.7 2643.7,1444.5 2645.4,1444.5 2645.4,1443.5 2647.1,1443.5 2647.1,1448.2 2648.9,1448.2 2648.9,1450.7 2650.6,1450.7 2650.6,1479.0 2652.3,1479.0 2652.3,1458.9 2654.0,1458.9 2654.0,1457.4 2655.7,1457.4 2655.7,1468.8 2657.4,1468.8 2657.4,1468.2 2659.1,1468.2 2659.1,1471.5 2660.8,1471.5 2660.8,1473.9 2662.5,1473.9 2662.5,1472.8 2664.3,1472.8 2664.3,1479.6 2666.0,1479.6 2666.0,1496.3 2667.7,1496.3 2667.7,1489.8 2669.4,1489.8 2669.4,1487.5 2671.1,1487.5 2671.1,1490.5 2672.8,1490.5 2672.8,1496.3 2674.5,1496.3 2674.5,1500.6 2676.2,1500.6 2676.2,1499.6 2678.0,1499.6 2678.0,1503.7 2679.7,1503.7 2679.7,1356.5 2681.4,1356.5 2681.4,1466.9 2683.1,1466.9 2683.1,1451.3 2684.8,1451.3 2684.8,1362.0 2686.5,1362.0 2686.5,1341.0 2688.2,1341.0 2688.2,1370.7 2689.9,1370.7 2689.9,1335.0 2691.6,1335.0 2691.6,1388.7 2693.4,1388.7 2693.4,1385.5 2695.1,1385.5 2695.1,1472.2 2696.8,1472.2 2696.8,1462.4 2698.5,1462.4 2698.5,1456.4 2700.2,1456.4 2700.2,1409.5 2701.9,1409.5 2701.9,1417.0 2703.6,1417.0 2703.6,1423.8 2705.3,1423.8 2705.3,1431.5 2707.0,1431.5 2707.0,1429.3 2708.8,1429.3 2708.8,1437.5 2710.5,1437.5 2710.5,1434.8 2712.2,1434.8 2712.2,1438.7 2713.9,1438.7 2713.9,1444.3 2715.6,1444.3 2715.6,1447.1 2717.3,1447.1 2717.3,1450.5 2719.0,1450.5 2719.0,1461.9 2720.7,1461.9 2720.7,1461.4 2722.4,1461.4 2722.4,1470.0 2724.2,1470.0 2724.2,1401.6 2725.9,1401.6 2725.9,1470.3 2727.6,1470.3 2727.6,1475.0 2729.3,1475.0 2729.3,1478.9 2731.0,1478.9 2731.0,1480.1 2732.7,1480.1 2732.7,1488.2 2734.4,1488.2 2734.4,1490.7 2736.1,1490.7 2736.1,1494.4 2737.9,1494.4 2737.9,1498.7 2739.6,1498.7 2739.6,1500.7 2741.3,1500.7 2741.3,1391.8 2743.0,1391.8 2743.0,1407.2 2744.7,1407.2 2744.7,1322.1 2746.4,1322.1 2746.4,1339.7 2748.1,1339.7 2748.1,1343.6 2749.8,1343.6 2749.8,1430.5 2751.5,1430.5 2751.5,1406.8 2753.3,1406.8 2753.3,1394.6 2755.0,1394.6 2755.0,1401.4 2756.7,1401.4 2756.7,1366.3 2758.4,1366.3 2758.4,1419.9 2760.1,1419.9 2760.1,1408.5 2761.8,1408.5 2761.8,1379.9 2763.5,1379.9 2763.5,1350.2 2765.2,1350.2 2765.2,1375.3 2766.9,1375.3 2766.9,1452.4 2768.7,1452.4 2768.7,1376.3 2770.4,1376.3 2770.4,1381.2 2772.1,1381.2 2772.1,1449.0 2773.8,1449.0 2773.8,1400.6 2775.5,1400.6 2775.5,1412.8 2777.2,1412.8 2777.2,1416.1 2778.9,1416.1 2778.9,1417.4 2780.6,1417.4 2780.6,1430.2 2782.4,1430.2 2782.4,1433.2 2784.1,1433.2 2784.1,1434.3 2785.8,1434.3 2785.8,1436.7 2787.5,1436.7 2787.5,1440.2 2789.2,1440.2 2789.2,1473.8 2790.9,1473.8 2790.9,1450.1 2792.6,1450.1 2792.6,1475.0 2794.3,1475.0 2794.3,1459.4 2796.0,1459.4 2796.0,1458.9 2797.8,1458.9 2797.8,1459.6 2799.5,1459.6 2799.5,1468.4 2801.2,1468.4 2801.2,1470.8 2802.9,1470.8 2802.9,1477.6 2804.6,1477.6 2804.6,1416.1 2806.3,1416.1 2806.3,1486.5 2808.0,1486.5 2808.0,1484.0 2809.7,1484.0 2809.7,1483.7 2811.4,1483.7 2811.4,1492.3 2813.2,1492.3 2813.2,1505.1 2814.9,1505.1 2814.9,1499.6 2816.6,1499.6 2816.6,1509.6 2818.3,1509.6 2818.3,1400.4 2820.0,1400.4 2820.0,1310.9 2821.7,1310.9 2821.7,1301.2 2823.4,1301.2 2823.4,1451.4 2825.1,1451.4 2825.1,1445.6 2826.9,1445.6 2826.9,1334.7 2828.6,1334.7 2828.6,1460.0 2830.3,1460.0 2830.3,1448.3 2832.0,1448.3 2832.0,1319.0 2833.7,1319.0 2833.7,1348.1 2835.4,1348.1 2835.4,1358.1 2837.1,1358.1 2837.1,1335.4 2838.8,1335.4 2838.8,1457.1 2840.5,1457.1 2840.5,1377.7 2842.3,1377.7 2842.3,1466.5 2844.0,1466.5 2844.0,1441.1 2845.7,1441.1 2845.7,1456.1 2847.4,1456.1 2847.4,1401.4 2849.1,1401.4 2849.1,1405.6 2850.8,1405.6 2850.8,1407.1 2852.5,1407.1 2852.5,1416.3 2854.2,1416.3 2854.2,1417.3 2855.9,1417.3 2855.9,1425.4 2857.7,1425.4 2857.7,1429.9 2859.4,1429.9 2859.4,1433.6 2861.1,1433.6 2861.1,1464.0 2862.8,1464.0 2862.8,1441.2 2864.5,1441.2 2864.5,1447.9 2866.2,1447.9 2866.2,1448.3 2867.9,1448.3 2867.9,1458.0 2869.6,1458.0 2869.6,1453.7 2871.4,1453.7 2871.4,1464.7 2873.1,1464.7 2873.1,1488.7 2874.8,1488.7 2874.8,1480.1 2876.5,1480.1 2876.5,1483.0 2878.2,1483.0 2878.2,1478.6 2879.9,1478.6 2879.9,1416.9 2881.6,1416.9 2881.6,1434.5 2883.3,1434.5 2883.3,1494.4 2885.0,1494.4 2885.0,1498.6 2886.8,1498.6 2886.8,1497.4 2888.5,1497.4 2888.5,1418.0 2890.2,1418.0 2890.2,1325.2 2891.9,1325.2 2891.9,1329.3 2893.6,1329.3 2893.6,1335.9 2895.3,1335.9 2895.3,1409.6 2897.0,1409.6 2897.0,1401.4 2898.7,1401.4 2898.7,1215.0 2900.4,1215.0 2900.4,1340.7 2902.2,1340.7 2902.2,1329.5 2903.9,1329.5 2903.9,1407.3 2905.6,1407.3 2905.6,1405.9 2907.3,1405.9 2907.3,1439.2 2909.0,1439.2 2909.0,1409.5 2910.7,1409.5 2910.7,1320.0 2912.4,1320.0 2912.4,1446.6 2914.1,1446.6 2914.1,1452.9 2915.9,1452.9 2915.9,1368.9 2917.6,1368.9 2917.6,1379.4 2919.3,1379.4 2919.3,1434.0 2921.0,1434.0 2921.0,1415.7 2922.7,1415.7 2922.7,1364.4 2924.4,1364.4 2924.4,1432.8 2926.1,1432.8 2926.1,1432.4 2927.8,1432.4 2927.8,1435.4 2929.5,1435.4 2929.5,1470.1 2931.3,1470.1 2931.3,1443.2 2933.0,1443.2 2933.0,1444.2 2934.7,1444.2 2934.7,1454.7 2936.4,1454.7 2936.4,1457.2 2938.1,1457.2 2938.1,1459.2 2939.8,1459.2 2939.8,1468.6 2941.5,1468.6 2941.5,1469.5 2943.2,1469.5 2943.2,1472.1 2944.9,1472.1 2944.9,1475.5 2946.7,1475.5 2946.7,1482.5 2948.4,1482.5 2948.4,1296.6 2950.1,1296.6 2950.1,1486.6 2951.8,1486.6 2951.8,1489.5 2953.5,1489.5 2953.5,1506.6 2955.2,1506.6 2955.2,1500.8 2956.9,1500.8 2956.9,1501.1 2958.6,1501.1 2958.6,1319.1 2960.3,1319.1 2960.3,1309.0 2962.1,1309.0 2962.1,1398.9 2963.8,1398.9 2963.8,1380.6 2965.5,1380.6 2965.5,1398.0 2967.2,1398.0 2967.2,1398.7 2968.9,1398.7 2968.9,1417.1 2970.6,1417.1 2970.6,1401.5 2972.3,1401.5 2972.3,1321.4 2974.0,1321.4 2974.0,1404.6 2975.8,1404.6 2975.8,1401.6 2977.5,1401.6 2977.5,1373.0 2979.2,1373.0 2979.2,1372.1 2980.9,1372.1 2980.9,1385.8 2982.6,1385.8 2982.6,1410.0 2984.3,1410.0 2984.3,1396.4 2986.0,1396.4 2986.0,1425.0 2987.7,1425.0 2987.7,1383.5 2989.4,1383.5 2989.4,1405.4 2991.2,1405.4 2991.2,1405.9 2992.9,1405.9 2992.9,1418.7 2994.6,1418.7 2994.6,1419.5 2996.3,1419.5 2996.3,1425.8 2998.0,1425.8 2998.0,1426.2 2999.7,1426.2 2999.7,1432.1 3001.4,1432.1 3001.4,1437.1 3003.1,1437.1 3003.1,1444.5 3004.8,1444.5 3004.8,1441.5 3006.6,1441.5 3006.6,1450.7 3008.3,1450.7 3008.3,1456.6 3010.0,1456.6 3010.0,1375.1 3011.7,1375.1 3011.7,1461.3 3013.4,1461.3 3013.4,1464.9 3015.1,1464.9 3015.1,1467.0 3016.8,1467.0 3016.8,1467.9 3018.5,1467.9 3018.5,1479.9 3020.3,1479.9 3020.3,1476.3 3022.0,1476.3 3022.0,1485.7 3023.7,1485.7 3023.7,1490.0 3025.4,1490.0 3025.4,1487.6 3027.1,1487.6 3027.1,1493.9 3028.8,1493.9 3028.8,1496.3 3030.5,1496.3 3030.5,1500.8 3032.2,1500.8 3032.2,1402.0 3033.9,1402.0 3033.9,1402.4 3035.7,1402.4 3035.7,1325.0 3037.4,1325.0 3037.4,1277.9 3039.1,1277.9 3039.1,1310.5 3040.8,1310.5 3040.8,1408.2 3042.5,1408.2 3042.5,1337.6 3044.2,1337.6 3044.2,1408.6 3045.9,1408.6 3045.9,1303.1 3047.6,1303.1 3047.6,1343.3 3049.3,1343.3 3049.3,1350.3 3051.1,1350.3 3051.1,1369.6 3052.8,1369.6 3052.8,1432.9 3054.5,1432.9 3054.5,1424.0 3056.2,1424.0 3056.2,1364.3 3057.9,1364.3 3057.9,1426.8 3059.6,1426.8 3059.6,1404.5 3061.3,1404.5 3061.3,1462.1 3063.0,1462.1 3063.0,1400.0 3064.8,1400.0 3064.8,1452.9 3066.5,1452.9 3066.5,1462.6 3068.2,1462.6 3068.2,1427.0 3069.9,1427.0 3069.9,1435.0 3071.6,1435.0 3071.6,1434.8 3073.3,1434.8 3073.3,1441.1 3075.0,1441.1 3075.0,1441.9 3076.7,1441.9 3076.7,1450.4 3078.4,1450.4 3078.4,1454.3 3080.2,1454.3 3080.2,1458.0 3081.9,1458.0 3081.9,1459.8 3083.6,1459.8 3083.6,1467.4 3085.3,1467.4 3085.3,1468.5 3087.0,1468.5 3087.0,1470.5 3088.7,1470.5 3088.7,1494.2 3090.4,1494.2 3090.4,1479.2 3092.1,1479.2 3092.1,1483.7 3093.8,1483.7 3093.8,1487.6 3095.6,1487.6 3095.6,1502.1 3097.3,1502.1 3097.3,1494.1 3099.0,1494.1 3099.0,1498.8 3100.7,1498.8 3100.7,1418.1 3102.4,1418.1 3102.4,1275.1 3104.1,1275.1 3104.1,1294.9 3105.8,1294.9 3105.8,1327.2 3107.5,1327.2 3107.5,1430.7 3109.3,1430.7 3109.3,1406.9 3111.0,1406.9 3111.0,1341.5 3112.7,1341.5 3112.7,1336.5 3114.4,1336.5 3114.4,1340.6 3116.1,1340.6 3116.1,1437.5 3117.8,1437.5 3117.8,1345.8 3119.5,1345.8 3119.5,1338.4 3121.2,1338.4 3121.2,1367.6 3122.9,1367.6 3122.9,1385.1 3124.7,1385.1 3124.7,1381.6 3126.4,1381.6 3126.4,1374.2 3128.1,1374.2 3128.1,1401.0 3129.8,1401.0 3129.8,1398.9 3131.5,1398.9 3131.5,1405.6 3133.2,1405.6 3133.2,1386.2 3134.9,1386.2 3134.9,1464.8 3136.6,1464.8 3136.6,1255.8 3138.3,1255.8 3138.3,1433.4 3140.1,1433.4 3140.1,1429.8 3141.8,1429.8 3141.8,1435.4 3143.5,1435.4 3143.5,1446.2 3145.2,1446.2 3145.2,1449.4 3146.9,1449.4 3146.9,1456.4 3148.6,1456.4 3148.6,1490.4 3150.3,1490.4 3150.3,1465.6 3152.0,1465.6 3152.0,1467.6 3153.8,1467.6 3153.8,1476.3 3155.5,1476.3 3155.5,1478.6 3157.2,1478.6 3157.2,1486.7 3158.9,1486.7 3158.9,1410.9 3160.6,1410.9 3160.6,1491.2 3162.3,1491.2 3162.3,1488.5 3164.0,1488.5 3164.0,1491.0 3165.7,1491.0 3165.7,1501.8 3167.4,1501.8 3167.4,1397.6 3169.2,1397.6 3169.2,1304.7 3170.9,1304.7 3170.9,1398.7 3172.6,1398.7 3172.6,1376.3 3174.3,1376.3 3174.3,1406.3 3176.0,1406.3 3176.0,1417.5" fill="none" stroke="#eab839" stroke-width="2.1" stroke-linejoin="miter"/>
<rect x="3214" y="1142" width="408" height="48" fill="#262628" />
<rect x="3234" y="1165" width="24" height="6.6" rx="2" fill="#7eb26d"/>
<rect x="3234" y="1213" width="24" height="6.6" rx="2" fill="#eab839"/>
</svg>
<div id="tx">
<div class="t m2" style="left:63.4px;top:12.6px;font-size:32.00px;color:#d8d9da;letter-spacing:-0.318px;">Changefeed</div>
<div class="t m" style="left:397.4px;top:95.7px;font-size:26.00px;color:#d8d9da;letter-spacing:0.049px;">Changefeed table count</div>
<div class="t m" style="left:1481.2px;top:95.7px;font-size:26.00px;color:#d8d9da;letter-spacing:0.129px;">Processor resolved ts</div>
<div class="t m" style="left:2811.9px;top:95.7px;font-size:26.00px;color:#d8d9da;letter-spacing:0.064px;">Table resolved ts</div>
<div class="t m" style="left:551.4px;top:495.7px;font-size:26.00px;color:#d8d9da;letter-spacing:0.095px;">Changefeed checkpoint</div>
<div class="t m" style="left:1879.5px;top:495.7px;font-size:26.00px;color:#d8d9da;letter-spacing:0.197px;">PD etcd requests/s</div>
<div class="t m" style="left:3034.6px;top:495.7px;font-size:26.00px;color:#d8d9da;letter-spacing:0.335px;">Exit error count/m</div>
<div class="t m" style="left:760.4px;top:1055.7px;font-size:26.00px;color:#d8d9da;letter-spacing:0.083px;">Changefeed checkpoint lag</div>
<div class="t m" style="left:2609.5px;top:1055.7px;font-size:26.00px;color:#d8d9da;letter-spacing:0.132px;">Processor resolved ts lag</div>
<div class="t m" style="left:75.4px;top:153.8px;font-size:26.00px;color:#33b5e5;letter-spacing:0.736px;">Metric</div>
<div class="t m" style="left:745.4px;top:153.8px;font-size:26.00px;color:#33b5e5;letter-spacing:0.071px;">Current</div>
<div class="t" style="left:73.8px;top:209.5px;font-size:26.78px;color:#d8d9da;letter-spacing:-0.369px;">172.16.5.33:47913</div>
<div class="t" style="left:745.8px;top:209.5px;font-size:26.78px;color:#d8d9da;letter-spacing:-0.097px;">36.00</div>
<div class="t" style="left:73.8px;top:271.5px;font-size:26.78px;color:#d8d9da;letter-spacing:-0.369px;">172.16.5.33:47912</div>
<div class="t" style="left:745.8px;top:271.5px;font-size:26.78px;color:#d8d9da;letter-spacing:-0.097px;">12.00</div>
<div class="t m" style="left:1146.4px;top:153.8px;font-size:26.00px;color:#33b5e5;letter-spacing:0.562px;">table</div>
<div class="t m" style="left:1679.4px;top:153.8px;font-size:26.00px;color:#33b5e5;letter-spacing:0.133px;">resolved ts</div>
<div class="t" style="left:1146.9px;top:209.5px;font-size:26.78px;color:#d8d9da;letter-spacing:-0.243px;">changefeed checkpoint</div>
<div class="t" style="left:1679.8px;top:209.5px;font-size:26.78px;color:#d8d9da;letter-spacing:-0.427px;">12-21 16:41:23.922</div>
<div class="t" style="left:1146.9px;top:271.5px;font-size:26.78px;color:#d8d9da;letter-spacing:-0.243px;">changefeed checkpoint</div>
<div class="t" style="left:1679.8px;top:271.5px;font-size:26.78px;color:#d8d9da;letter-spacing:-0.427px;">12-21 16:41:35.172</div>
<div class="t" style="left:1145.3px;top:333.5px;font-size:26.78px;color:#d8d9da;letter-spacing:-0.369px;">172.16.5.33:47913</div>
<div class="t" style="left:1679.8px;top:333.5px;font-size:26.78px;color:#d8d9da;letter-spacing:-0.427px;">12-21 16:41:25.172</div>
<div class="t" style="left:1145.3px;top:395.5px;font-size:26.78px;color:#d8d9da;letter-spacing:-0.369px;">172.16.5.33:47912</div>
<div class="t" style="left:1679.8px;top:395.5px;font-size:26.78px;color:#d8d9da;letter-spacing:-0.427px;">12-21 16:41:36.172</div>
<div class="t m" style="left:2218.4px;top:153.8px;font-size:26.00px;color:#33b5e5;letter-spacing:0.562px;">table</div>
<div class="t m" style="left:3161.4px;top:153.8px;font-size:26.00px;color:#33b5e5;letter-spacing:0.133px;">resolved ts</div>
<div class="t" style="left:2218.9px;top:209.5px;font-size:26.78px;color:#d8d9da;letter-spacing:-0.243px;">changefeed checkpoint</div>
<div class="t" style="left:3161.8px;top:209.5px;font-size:26.78px;color:#d8d9da;letter-spacing:-0.427px;">12-21 16:41:23.922</div>
<div class="t" style="left:2218.9px;top:271.5px;font-size:26.78px;color:#d8d9da;letter-spacing:-0.243px;">changefeed checkpoint</div>
<div class="t" style="left:3161.8px;top:271.5px;font-size:26.78px;color:#d8d9da;letter-spacing:-0.427px;">12-21 16:41:19.972</div>
<div class="t" style="left:2217.3px;top:333.5px;font-size:26.78px;color:#d8d9da;letter-spacing:-0.413px;">172.16.5.33:47913-`test`.`warehouse`</div>
<div class="t" style="left:3161.8px;top:333.5px;font-size:26.78px;color:#d8d9da;letter-spacing:-0.427px;">12-21 16:41:26.072</div>
<div class="t" style="left:2217.3px;top:395.5px;font-size:26.78px;color:#d8d9da;letter-spacing:-0.357px;">172.16.5.33:47913-`test`.`orders`</div>
<div class="t" style="left:3161.8px;top:395.5px;font-size:26.78px;color:#d8d9da;letter-spacing:-0.427px;">12-21 16:41:25.172</div>
<div class="t" style="left:44.5px;top:538.8px;font-size:22.66px;color:#d8d9da;letter-spacing:-0.481px;">18:03:20</div>
<div class="t" style="left:44.5px;top:604.8px;font-size:22.66px;color:#d8d9da;letter-spacing:-0.481px;">16:40:00</div>
<div class="t" style="left:44.5px;top:670.8px;font-size:22.66px;color:#d8d9da;letter-spacing:-0.481px;">15:16:40</div>
<div class="t" style="left:44.5px;top:736.8px;font-size:22.66px;color:#d8d9da;letter-spacing:-0.481px;">13:53:20</div>
<div class="t" style="left:44.5px;top:802.8px;font-size:22.66px;color:#d8d9da;letter-spacing:-0.481px;">12:30:00</div>
<div class="t" style="left:231.6px;top:829.0px;font-size:22.66px;color:#d8d9da;letter-spacing:-0.493px;">14:00</div>
<div class="t" style="left:425.6px;top:829.0px;font-size:22.66px;color:#d8d9da;letter-spacing:-0.493px;">14:30</div>
<div class="t" style="left:619.6px;top:829.0px;font-size:22.66px;color:#d8d9da;letter-spacing:-0.493px;">15:00</div>
<div class="t" style="left:813.6px;top:829.0px;font-size:22.66px;color:#d8d9da;letter-spacing:-0.493px;">15:30</div>
<div class="t" style="left:1007.6px;top:829.0px;font-size:22.66px;color:#d8d9da;letter-spacing:-0.493px;">16:00</div>
<div class="t" style="left:1203.6px;top:829.0px;font-size:22.66px;color:#d8d9da;letter-spacing:-0.493px;">16:30</div>
<div class="t m" style="left:1235.8px;top:873.6px;font-size:22.00px;color:#33b5e5;">current</div>
<div class="t" style="left:112.4px;top:914.5px;font-size:22.66px;color:#d8d9da;letter-spacing:-0.095px;">simple-replication-task</div>
<div class="t" style="left:1219.5px;top:914.5px;font-size:22.66px;color:#d8d9da;letter-spacing:-0.481px;">16:41:19</div>
<div class="t" style="left:112.4px;top:962.5px;font-size:22.66px;color:#d8d9da;letter-spacing:-0.111px;">approximate current time (s)</div>
<div class="t" style="left:1219.5px;top:962.5px;font-size:22.66px;color:#d8d9da;letter-spacing:-0.481px;">16:41:21</div>
<div class="t" style="left:1423.2px;top:538.8px;font-size:22.66px;color:#d8d9da;letter-spacing:-0.365px;">125</div>
<div class="t" style="left:1423.2px;top:618.8px;font-size:22.66px;color:#d8d9da;letter-spacing:-0.365px;">100</div>
<div class="t" style="left:1435.5px;top:700.8px;font-size:22.66px;color:#d8d9da;letter-spacing:-0.359px;">75</div>
<div class="t" style="left:1435.5px;top:782.8px;font-size:22.66px;color:#d8d9da;letter-spacing:-0.359px;">50</div>
<div class="t" style="left:1435.5px;top:864.8px;font-size:22.66px;color:#d8d9da;letter-spacing:-0.359px;">25</div>
<div class="t" style="left:1447.7px;top:945.8px;font-size:22.66px;color:#d8d9da;letter-spacing:-0.359px;">0</div>
<div class="t" style="left:1499.6px;top:973.0px;font-size:22.66px;color:#d8d9da;letter-spacing:-0.493px;">14:00</div>
<div class="t" style="left:1677.6px;top:973.0px;font-size:22.66px;color:#d8d9da;letter-spacing:-0.493px;">15:00</div>
<div class="t" style="left:1855.6px;top:973.0px;font-size:22.66px;color:#d8d9da;letter-spacing:-0.493px;">16:00</div>
<div class="t m" style="left:2396.2px;top:551.6px;font-size:22.00px;color:#33b5e5;">max</div>
<div class="t m" style="left:2461.8px;top:551.6px;font-size:22.00px;color:#33b5e5;">current</div>
<div class="t" style="left:2103.8px;top:592.5px;font-size:22.66px;color:#d8d9da;letter-spacing:-0.505px;">172.16.5.33:47912-Get</div>
<div class="t" style="left:2400.7px;top:592.5px;font-size:22.66px;color:#d8d9da;letter-spacing:-0.365px;">107</div>
<div class="t" style="left:2505.5px;top:592.5px;font-size:22.66px;color:#d8d9da;letter-spacing:-0.359px;">82</div>
<div class="t" style="left:2103.8px;top:640.5px;font-size:22.66px;color:#d8d9da;letter-spacing:-0.500px;">172.16.5.33:47912-Put</div>
<div class="t" style="left:2425.2px;top:640.5px;font-size:22.66px;color:#d8d9da;letter-spacing:-0.359px;">0</div>
<div class="t" style="left:2517.7px;top:640.5px;font-size:22.66px;color:#d8d9da;letter-spacing:-0.359px;">0</div>
<div class="t" style="left:2103.8px;top:688.5px;font-size:22.66px;color:#d8d9da;letter-spacing:-0.507px;">172.16.5.33:47912-Txn</div>
<div class="t" style="left:2413.0px;top:688.5px;font-size:22.66px;color:#d8d9da;letter-spacing:-0.359px;">15</div>
<div class="t" style="left:2505.5px;top:688.5px;font-size:22.66px;color:#d8d9da;letter-spacing:-0.359px;">13</div>
<div class="t" style="left:2103.8px;top:736.5px;font-size:22.66px;color:#d8d9da;letter-spacing:-0.505px;">172.16.5.33:47913-Get</div>
<div class="t" style="left:2414.6px;top:736.5px;font-size:22.66px;color:#d8d9da;letter-spacing:-0.344px;">11</div>
<div class="t" style="left:2517.7px;top:736.5px;font-size:22.66px;color:#d8d9da;letter-spacing:-0.359px;">9</div>
<div class="t" style="left:2103.8px;top:784.5px;font-size:22.66px;color:#d8d9da;letter-spacing:-0.500px;">172.16.5.33:47913-Put</div>
<div class="t" style="left:2425.2px;top:784.5px;font-size:22.66px;color:#d8d9da;letter-spacing:-0.359px;">0</div>
<div class="t" style="left:2517.7px;top:784.5px;font-size:22.66px;color:#d8d9da;letter-spacing:-0.359px;">0</div>
<div class="t" style="left:2103.8px;top:832.5px;font-size:22.66px;color:#d8d9da;letter-spacing:-0.507px;">172.16.5.33:47913-Txn</div>
<div class="t" style="left:2414.6px;top:832.5px;font-size:22.66px;color:#d8d9da;letter-spacing:-0.344px;">11</div>
<div class="t" style="left:2517.7px;top:832.5px;font-size:22.66px;color:#d8d9da;letter-spacing:-0.359px;">9</div>
<div class="t" style="left:2655.4px;top:538.8px;font-size:22.66px;color:#d8d9da;letter-spacing:-0.302px;">1.0</div>
<div class="t" style="left:2655.4px;top:640.8px;font-size:22.66px;color:#d8d9da;letter-spacing:-0.302px;">0.5</div>
<div class="t" style="left:2673.7px;top:742.8px;font-size:22.66px;color:#d8d9da;letter-spacing:-0.359px;">0</div>
<div class="t" style="left:2648.1px;top:844.8px;font-size:22.66px;color:#d8d9da;letter-spacing:-0.281px;">-0.5</div>
<div class="t" style="left:2648.1px;top:946.8px;font-size:22.66px;color:#d8d9da;letter-spacing:-0.281px;">-1.0</div>
<div class="t" style="left:2721.6px;top:973.0px;font-size:22.66px;color:#d8d9da;letter-spacing:-0.493px;">14:00</div>
<div class="t" style="left:2891.6px;top:973.0px;font-size:22.66px;color:#d8d9da;letter-spacing:-0.493px;">15:00</div>
<div class="t" style="left:3061.6px;top:973.0px;font-size:22.66px;color:#d8d9da;letter-spacing:-0.493px;">16:00</div>
<div class="t m" style="left:3533.8px;top:551.6px;font-size:22.00px;color:#33b5e5;">current</div>
<div class="t" style="left:3302.8px;top:592.5px;font-size:22.66px;color:#d8d9da;letter-spacing:-0.322px;">172.16.5.33:47912</div>
<div class="t" style="left:3589.7px;top:592.5px;font-size:22.66px;color:#d8d9da;letter-spacing:-0.359px;">0</div>
<div class="t" style="left:3302.8px;top:640.5px;font-size:22.66px;color:#d8d9da;letter-spacing:-0.322px;">172.16.5.33:47913</div>
<div class="t" style="left:3589.7px;top:640.5px;font-size:22.66px;color:#d8d9da;letter-spacing:-0.359px;">0</div>
<div class="t" style="left:56.6px;top:1098.8px;font-size:22.66px;color:#d8d9da;letter-spacing:-0.292px;">6 s</div>
<div class="t" style="left:56.6px;top:1166.8px;font-size:22.66px;color:#d8d9da;letter-spacing:-0.292px;">5 s</div>
<div class="t" style="left:56.6px;top:1234.8px;font-size:22.66px;color:#d8d9da;letter-spacing:-0.292px;">4 s</div>
<div class="t" style="left:56.6px;top:1302.8px;font-size:22.66px;color:#d8d9da;letter-spacing:-0.292px;">3 s</div>
<div class="t" style="left:56.6px;top:1370.8px;font-size:22.66px;color:#d8d9da;letter-spacing:-0.292px;">2 s</div>
<div class="t" style="left:56.6px;top:1438.8px;font-size:22.66px;color:#d8d9da;letter-spacing:-0.292px;">1 s</div>
<div class="t" style="left:44.4px;top:1506.8px;font-size:22.66px;color:#d8d9da;letter-spacing:-0.309px;">0 ns</div>
<div class="t" style="left:193.6px;top:1533.0px;font-size:22.66px;color:#d8d9da;letter-spacing:-0.493px;">14:00</div>
<div class="t" style="left:397.6px;top:1533.0px;font-size:22.66px;color:#d8d9da;letter-spacing:-0.493px;">14:30</div>
<div class="t" style="left:599.6px;top:1533.0px;font-size:22.66px;color:#d8d9da;letter-spacing:-0.493px;">15:00</div>
<div class="t" style="left:801.6px;top:1533.0px;font-size:22.66px;color:#d8d9da;letter-spacing:-0.493px;">15:30</div>
<div class="t" style="left:1005.6px;top:1533.0px;font-size:22.66px;color:#d8d9da;letter-spacing:-0.493px;">16:00</div>
<div class="t" style="left:1207.6px;top:1533.0px;font-size:22.66px;color:#d8d9da;letter-spacing:-0.493px;">16:30</div>
<div class="t m" style="left:1695.8px;top:1111.6px;font-size:22.00px;color:#33b5e5;">current</div>
<div class="t" style="left:1410.4px;top:1152.5px;font-size:22.66px;color:#d8d9da;letter-spacing:-0.095px;">simple-replication-task</div>
<div class="t" style="left:1704.1px;top:1152.5px;font-size:22.66px;color:#d8d9da;letter-spacing:-0.297px;">2.24 s</div>
<div class="t" style="left:1882.3px;top:1098.8px;font-size:22.66px;color:#d8d9da;letter-spacing:-0.284px;">4.0 s</div>
<div class="t" style="left:1882.3px;top:1200.8px;font-size:22.66px;color:#d8d9da;letter-spacing:-0.284px;">3.0 s</div>
<div class="t" style="left:1882.3px;top:1302.8px;font-size:22.66px;color:#d8d9da;letter-spacing:-0.284px;">2.0 s</div>
<div class="t" style="left:1882.3px;top:1404.8px;font-size:22.66px;color:#d8d9da;letter-spacing:-0.284px;">1.0 s</div>
<div class="t" style="left:1888.4px;top:1506.8px;font-size:22.66px;color:#d8d9da;letter-spacing:-0.309px;">0 ns</div>
<div class="t" style="left:2039.6px;top:1533.0px;font-size:22.66px;color:#d8d9da;letter-spacing:-0.493px;">14:00</div>
<div class="t" style="left:2245.6px;top:1533.0px;font-size:22.66px;color:#d8d9da;letter-spacing:-0.493px;">14:30</div>
<div class="t" style="left:2451.6px;top:1533.0px;font-size:22.66px;color:#d8d9da;letter-spacing:-0.493px;">15:00</div>
<div class="t" style="left:2657.6px;top:1533.0px;font-size:22.66px;color:#d8d9da;letter-spacing:-0.493px;">15:30</div>
<div class="t" style="left:2861.6px;top:1533.0px;font-size:22.66px;color:#d8d9da;letter-spacing:-0.493px;">16:00</div>
<div class="t" style="left:3067.6px;top:1533.0px;font-size:22.66px;color:#d8d9da;letter-spacing:-0.493px;">16:30</div>
<div class="t m" style="left:3533.8px;top:1111.6px;font-size:22.00px;color:#33b5e5;">current</div>
<div class="t" style="left:3270.8px;top:1152.5px;font-size:22.66px;color:#d8d9da;letter-spacing:-0.322px;">172.16.5.33:47912</div>
<div class="t" style="left:3529.8px;top:1152.5px;font-size:22.66px;color:#d8d9da;letter-spacing:-0.357px;">257 ms</div>
<div class="t" style="left:3270.8px;top:1200.5px;font-size:22.66px;color:#d8d9da;letter-spacing:-0.322px;">172.16.5.33:47913</div>
<div class="t" style="left:3529.8px;top:1200.5px;font-size:22.66px;color:#d8d9da;letter-spacing:-0.308px;">1.015 s</div>
</div>
</body></html>
